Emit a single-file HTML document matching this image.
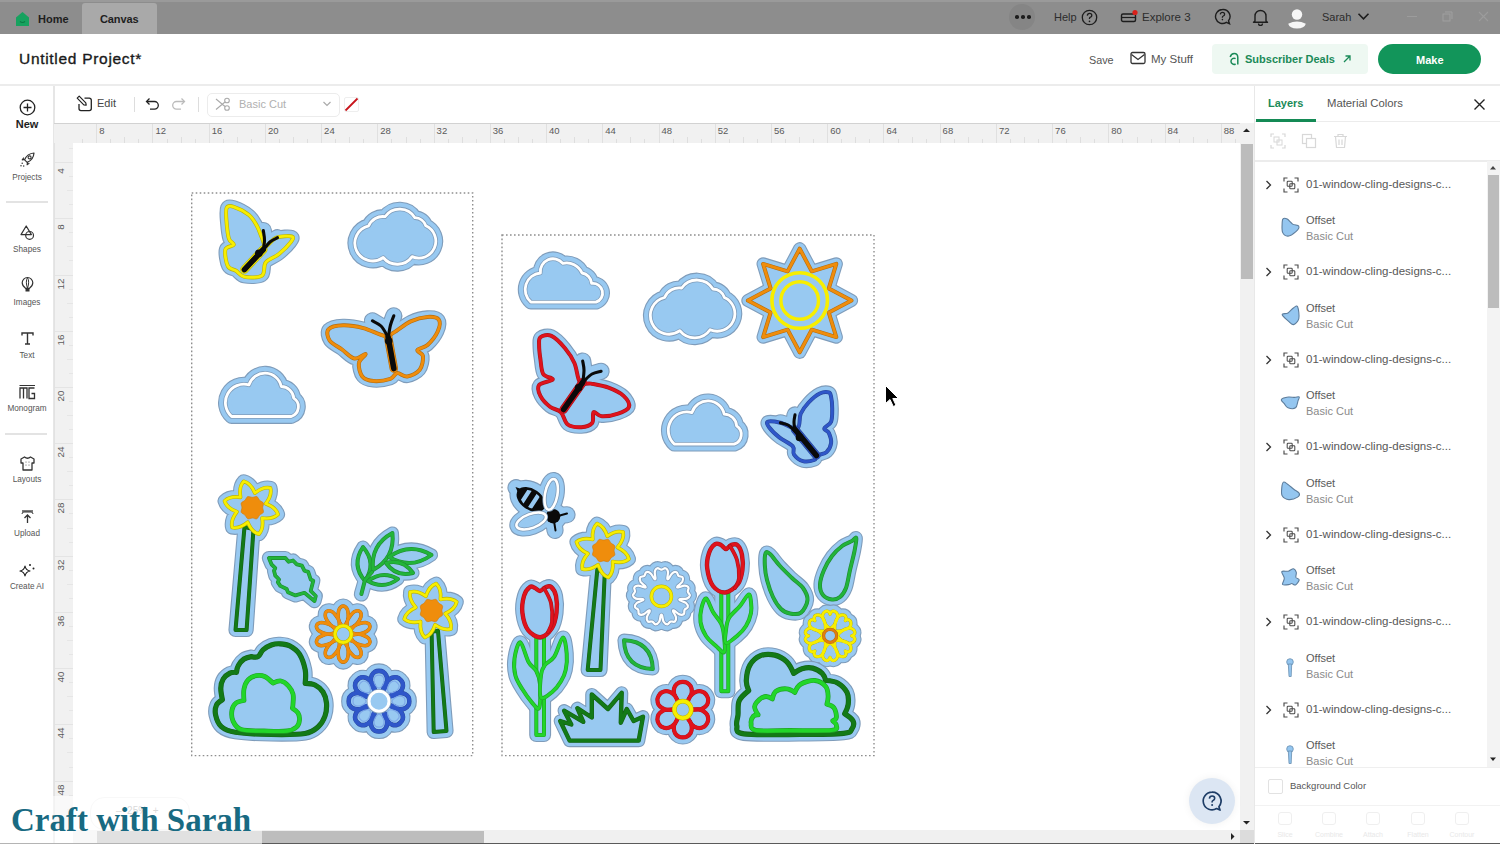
<!DOCTYPE html><html><head><meta charset="utf-8"><style>
*{margin:0;padding:0;box-sizing:border-box}
html,body{width:1500px;height:844px;overflow:hidden;background:#fff;font-family:"Liberation Sans",sans-serif;color:#222}
.a{position:absolute}
.t{position:absolute;white-space:nowrap;line-height:1}
</style></head><body><div class="a" style="left:0;top:0;width:1500px;height:34px;background:#8d8d8d"></div>
<div class="a" style="left:0;top:0;width:1500px;height:2px;background:#9a9a9a"></div>
<div class="a" style="left:82px;top:3px;width:75px;height:31px;background:#a9a9a9;border-radius:3px 3px 0 0"></div>
<svg class="a" style="left:15px;top:11px" width="15" height="16" viewBox="0 0 15 16"><path d="M1 6.5 L7.5 1 L14 6.5 V15 H1 Z" fill="#17a25f"/><path d="M5 10.5 q2.5 2 5 0" stroke="#0b7a44" stroke-width="1.2" fill="none"/></svg>
<div class="t" style="left:38px;top:14px;font-size:11px;font-weight:bold;color:#1e1e1e">Home</div>
<div class="t" style="left:100px;top:14px;font-size:11px;font-weight:bold;color:#1e1e1e;letter-spacing:-0.1px">Canvas</div>
<div class="a" style="left:1009px;top:4px;width:26px;height:26px;border-radius:50%;background:#858585"></div>
<div class="a" style="left:1015px;top:15px;width:3.5px;height:3.5px;border-radius:50%;background:#1d1d1d"></div>
<div class="a" style="left:1021px;top:15px;width:3.5px;height:3.5px;border-radius:50%;background:#1d1d1d"></div>
<div class="a" style="left:1027px;top:15px;width:3.5px;height:3.5px;border-radius:50%;background:#1d1d1d"></div>
<div class="t" style="left:1054px;top:12px;font-size:11px;color:#2c2c2c">Help</div>
<svg class="a" style="left:1081px;top:9px" width="17" height="17" viewBox="0 0 17 17"><circle cx="8.5" cy="8.5" r="7.2" stroke="#1d1d1d" stroke-width="1.3" fill="none"/><path d="M6.3 6.6 q0.2-2.2 2.3-2.2 q2.2 0 2.2 2 q0 1.3-1.4 1.8 q-0.9 0.4-0.9 1.4 v0.5" stroke="#1d1d1d" stroke-width="1.3" fill="none"/><circle cx="8.5" cy="12.3" r="0.85" fill="#1d1d1d"/></svg>
<svg class="a" style="left:1120px;top:9px" width="20" height="16" viewBox="0 0 20 16"><rect x="1.5" y="5" width="14" height="7.5" rx="1.5" stroke="#1d1d1d" stroke-width="1.4" fill="none"/><path d="M1.5 8.5 H15.5" stroke="#1d1d1d" stroke-width="1.2"/><circle cx="15" cy="3.5" r="2.6" fill="#d9201a"/></svg>
<div class="t" style="left:1142px;top:12px;font-size:11.5px;color:#2c2c2c">Explore 3</div>
<svg class="a" style="left:1213px;top:8px" width="19" height="18" viewBox="0 0 19 18"><path d="M9.5 1.5 a7 7 0 1 0 3.8 12.9 l3.2 1.4 l-1-3 a7 7 0 0 0 -6-11.3z" stroke="#1d1d1d" stroke-width="1.4" fill="none"/><path d="M7.3 6.4 q0.2-2 2.2-2 q2.1 0 2.1 1.9 q0 1.2-1.3 1.7 q-0.9 0.4-0.9 1.3 v0.4" stroke="#1d1d1d" stroke-width="1.3" fill="none"/><circle cx="9.4" cy="11.6" r="0.8" fill="#1d1d1d"/></svg>
<svg class="a" style="left:1252px;top:8px" width="17" height="18" viewBox="0 0 17 18"><path d="M3 13 V8 a5.5 5.5 0 0 1 11 0 V13 l1.5 1.2 H1.5 Z" stroke="#1d1d1d" stroke-width="1.4" fill="none" stroke-linejoin="round"/><path d="M6.5 15.5 a2 2 0 0 0 4 0" stroke="#1d1d1d" stroke-width="1.3" fill="none"/></svg>
<svg class="a" style="left:1286px;top:7px" width="22" height="24" viewBox="0 0 22 24"><circle cx="11" cy="7.5" r="5.2" fill="#f6f6f6"/><path d="M2.2 16.8 Q11 12.2 19.8 16.8 Q18.5 21.6 11 21.6 Q3.5 21.6 2.2 16.8Z" fill="#f6f6f6"/></svg>
<div class="t" style="left:1322px;top:12px;font-size:11px;color:#2c2c2c">Sarah</div>
<svg class="a" style="left:1357px;top:12px" width="13" height="9" viewBox="0 0 13 9"><path d="M1.5 1.8 L6.5 6.8 L11.5 1.8" stroke="#1d1d1d" stroke-width="1.6" fill="none"/></svg>
<div class="a" style="left:1407px;top:16px;width:10px;height:1.2px;background:#9c9c9c"></div>
<svg class="a" style="left:1442px;top:11px" width="11" height="11" viewBox="0 0 11 11"><rect x="1" y="3" width="7" height="7" stroke="#a0a0a0" fill="none"/><path d="M3 1 H10 V8" stroke="#a0a0a0" fill="none"/></svg>
<svg class="a" style="left:1478px;top:11px" width="11" height="11" viewBox="0 0 11 11"><path d="M1 1 L10 10 M10 1 L1 10" stroke="#9c9c9c" stroke-width="1.1"/></svg>
<div class="t" style="left:19px;top:51px;font-size:15.5px;color:#1a1a1a;letter-spacing:0.7px;-webkit-text-stroke:0.35px #1a1a1a">Untitled Project*</div>
<div class="a" style="left:0;top:84px;width:1500px;height:2px;background:#ececec"></div>
<div class="t" style="left:1089px;top:54.5px;font-size:10.8px;color:#555">Save</div>
<svg class="a" style="left:1130px;top:51px" width="16" height="14" viewBox="0 0 16 14"><rect x="1" y="1.5" width="14" height="11" rx="1.5" stroke="#333" stroke-width="1.3" fill="none"/><path d="M1.5 3.5 L8 8.5 L14.5 3.5" stroke="#333" stroke-width="1.3" fill="none"/></svg>
<div class="t" style="left:1151px;top:54px;font-size:11.5px;color:#555">My Stuff</div>
<div class="a" style="left:1212px;top:44px;width:156px;height:30px;background:#eef8f2;border-radius:4px"></div>
<svg class="a" style="left:1227px;top:52px" width="13" height="14" viewBox="0 0 13 14"><path d="M3.2 5 Q4.2 1.6 7.2 1.6 Q10.8 1.6 10.8 5.6 V12.6" stroke="#1a8a58" stroke-width="1.5" fill="none"/><path d="M8.6 6.6 A3.1 3.1 0 1 0 8.6 12" stroke="#1a8a58" stroke-width="1.5" fill="none"/></svg>
<div class="t" style="left:1245px;top:54px;font-size:11px;font-weight:bold;color:#1a8a58">Subscriber Deals</div>
<svg class="a" style="left:1342px;top:54px" width="10" height="10" viewBox="0 0 10 10"><path d="M2 8 L8 2 M3.5 2 H8 V6.5" stroke="#1a8a58" stroke-width="1.3" fill="none"/></svg>
<div class="a" style="left:1378px;top:44px;width:103px;height:30px;background:#12955a;border-radius:15px"></div>
<div class="t" style="left:1416px;top:54.5px;font-size:11px;font-weight:bold;color:#fff">Make</div>
<div class="a" style="left:53px;top:86px;width:1.5px;height:758px;background:#e6e6e6"></div>
<div class="a" style="left:6px;top:201px;width:42px;height:1.5px;background:#e3e3e3"></div>
<div class="a" style="left:5px;top:433px;width:42px;height:1.5px;background:#e3e3e3"></div>
<svg class="a" style="left:19px;top:99px" width="17" height="17" viewBox="0 0 17 17"><circle cx="8.5" cy="8.5" r="7.3" stroke="#222" stroke-width="1.3" fill="none"/><path d="M8.5 4.5 V12.5 M4.5 8.5 H12.5" stroke="#222" stroke-width="1.3"/></svg>
<div class="t" style="left:0;width:54px;text-align:center;top:119px;font-size:11px;color:#1e1e1e;font-weight:bold;">New</div>
<svg class="a" style="left:19px;top:151px" width="17" height="17" viewBox="0 0 17 17"><path d="M15 2 C11 2.3 7.3 4.8 5.6 8.8 L8.2 11.4 C12.2 9.7 14.7 6 15 2Z" stroke="#333" stroke-width="1.2" fill="none" stroke-linejoin="round"/><path d="M5.8 8.5 L3.2 8.9 L4.9 6.6 M8.5 11.2 L8.1 13.8 L10.4 12.1" stroke="#333" stroke-width="1.1" fill="none" stroke-linejoin="round"/><circle cx="10.6" cy="6.4" r="1.5" stroke="#333" stroke-width="1.1" fill="none"/><circle cx="3.2" cy="12.3" r="0.75" fill="#333"/><circle cx="2" cy="14.8" r="0.75" fill="#333"/><circle cx="4.7" cy="14.9" r="0.75" fill="#333"/></svg>
<div class="t" style="left:0;width:54px;text-align:center;top:173.8px;font-size:8.2px;color:#555;">Projects</div>
<svg class="a" style="left:19px;top:224px" width="17" height="17" viewBox="0 0 17 17"><path d="M7.2 2 L12.4 10.6 H2 Z" stroke="#333" stroke-width="1.2" fill="none" stroke-linejoin="round"/><circle cx="10.6" cy="11.4" r="3.9" stroke="#333" stroke-width="1.2" fill="none"/></svg>
<div class="t" style="left:0;width:54px;text-align:center;top:245.8px;font-size:8.2px;color:#555;">Shapes</div>
<svg class="a" style="left:20px;top:276px" width="15" height="17" viewBox="0 0 15 17"><path d="M7.5 1.5 a5.3 5.3 0 0 1 5.3 5.3 q0 3-3.3 5.5 h-4 q-3.3-2.5-3.3-5.5 a5.3 5.3 0 0 1 5.3-5.3z" stroke="#333" stroke-width="1.2" fill="none"/><path d="M7.5 1.5 q-2.3 4 0 10.8 q2.3-6.8 0-10.8" stroke="#333" stroke-width="1" fill="none"/><rect x="5.5" y="13" width="4" height="2.5" fill="#333"/></svg>
<div class="t" style="left:0;width:54px;text-align:center;top:298.8px;font-size:8.2px;color:#555;">Images</div>
<svg class="a" style="left:20px;top:331px" width="15" height="15" viewBox="0 0 15 15"><path d="M2 4.5 V2 H13 V4.5 M7.5 2 V13 M5 13 H10" stroke="#333" stroke-width="1.4" fill="none"/></svg>
<div class="t" style="left:0;width:54px;text-align:center;top:351.8px;font-size:8.2px;color:#555;">Text</div>
<svg class="a" style="left:18px;top:384px" width="19" height="16" viewBox="0 0 19 16"><path d="M1.5 1.5 H17" stroke="#333" stroke-width="1"/><path d="M2 14.5 V4 H9 V14.5 M5.5 4 V14.5" stroke="#333" stroke-width="1.3" fill="none"/><path d="M16.5 4 H11 V14.5 H16.5 V9.5 H13.5" stroke="#333" stroke-width="1.3" fill="none"/></svg>
<div class="t" style="left:0;width:54px;text-align:center;top:404.8px;font-size:8.2px;color:#555;">Monogram</div>
<svg class="a" style="left:19px;top:455px" width="17" height="17" viewBox="0 0 17 17"><path d="M5.5 2 L2 4 V8 H4 V15 H13 V8 H15 V4 L11.5 2 q-3 2.5-6 0z" stroke="#333" stroke-width="1.3" fill="none" stroke-linejoin="round"/><circle cx="7" cy="7" r="0.5" fill="#333"/><circle cx="10" cy="7" r="0.5" fill="#333"/><circle cx="7" cy="10" r="0.5" fill="#333"/><circle cx="10" cy="10" r="0.5" fill="#333"/></svg>
<div class="t" style="left:0;width:54px;text-align:center;top:475.8px;font-size:8.2px;color:#555;">Layouts</div>
<svg class="a" style="left:20px;top:509px" width="15" height="15" viewBox="0 0 15 15"><path d="M2 2 H13" stroke="#333" stroke-width="1.3"/><path d="M2 5 q0-2 2-2 H11 q2 0 2 2" stroke="#333" stroke-width="1" fill="none"/><path d="M7.5 14 V6 M4.5 9 L7.5 6 L10.5 9" stroke="#333" stroke-width="1.3" fill="none"/></svg>
<div class="t" style="left:0;width:54px;text-align:center;top:529.8px;font-size:8.2px;color:#555;">Upload</div>
<svg class="a" style="left:18px;top:562px" width="18" height="17" viewBox="0 0 18 17"><path d="M7 4 q0.8 4.2 5 5 q-4.2 0.8-5 5 q-0.8-4.2-5-5 q4.2-0.8 5-5z" stroke="#222" stroke-width="1.2" fill="none" stroke-linejoin="round"/><circle cx="12" cy="3" r="1" fill="#222"/><circle cx="15.5" cy="6.5" r="1" fill="#222"/></svg>
<div class="t" style="left:0;width:54px;text-align:center;top:582.8px;font-size:8.2px;color:#555;">Create AI</div>
<svg class="a" style="left:76px;top:95px" width="17" height="17" viewBox="0 0 17 17"><path d="M8.5 3.2 H13.3 a2 2 0 0 1 2 2 V13.6 a2 2 0 0 1 -2 2 H5 a2 2 0 0 1 -2-2 V9" stroke="#222" stroke-width="1.3" fill="none"/><path d="M1.2 3.2 L3.2 1.2 L9.8 7.8 L10.2 10.2 L7.8 9.8 Z" stroke="#222" stroke-width="1.2" fill="none" stroke-linejoin="round"/></svg>
<div class="t" style="left:97px;top:98px;font-size:11px;color:#444">Edit</div>
<div class="a" style="left:134px;top:97px;width:1px;height:15px;background:#ddd"></div>
<svg class="a" style="left:145px;top:97px" width="16" height="14" viewBox="0 0 16 14"><path d="M4.5 1.5 L1.5 4.5 L4.5 7.5" stroke="#222" stroke-width="1.3" fill="none"/><path d="M2 4.5 H9.5 a3.8 3.8 0 0 1 0 7.6 H5" stroke="#222" stroke-width="1.3" fill="none"/></svg>
<svg class="a" style="left:170px;top:97px" width="16" height="14" viewBox="0 0 16 14"><path d="M11.5 1.5 L14.5 4.5 L11.5 7.5" stroke="#bbb" stroke-width="1.3" fill="none"/><path d="M14 4.5 H6.5 a3.8 3.8 0 0 0 0 7.6 H11" stroke="#bbb" stroke-width="1.3" fill="none"/></svg>
<div class="a" style="left:198px;top:97px;width:1px;height:15px;background:#ddd"></div>
<div class="a" style="left:207px;top:93px;width:133px;height:24px;border:1px solid #ececec;border-radius:5px"></div>
<svg class="a" style="left:215px;top:97px" width="17" height="15" viewBox="0 0 17 15"><circle cx="12" cy="3.5" r="2.3" stroke="#aaa" stroke-width="1.1" fill="none"/><circle cx="12" cy="11" r="2.3" stroke="#aaa" stroke-width="1.1" fill="none"/><path d="M1 2 L10 9.5 M1 12.5 L10 5" stroke="#aaa" stroke-width="1.1"/></svg>
<div class="t" style="left:239px;top:99px;font-size:11px;color:#b0b0b0">Basic Cut</div>
<svg class="a" style="left:322px;top:100px" width="10" height="8" viewBox="0 0 10 8"><path d="M1.5 2 L5 5.5 L8.5 2" stroke="#aaa" stroke-width="1.2" fill="none"/></svg>
<div class="a" style="left:344px;top:97px;width:15px;height:15px;border:1px solid #eee;border-radius:2px"></div>
<svg class="a" style="left:344px;top:97px" width="15" height="15" viewBox="0 0 15 15"><path d="M1.5 13.5 L13.5 1.5" stroke="#c8141c" stroke-width="1.8"/></svg>
<div class="a" style="left:54px;top:123px;width:1186px;height:20px;background:#f1f1f1;border-top:1px solid #d2d2d2"></div>
<div class="a" style="left:54px;top:143px;width:19px;height:687px;background:#f1f1f1;border-left:1px solid #e2e2e2"></div>
<div class="a" style="left:82.1px;top:139px;width:1px;height:4px;background:#dedede"></div><div class="a" style="left:96.2px;top:124px;width:1px;height:19px;background:#e0e0e0"></div><div class="t" style="left:99.2px;top:126px;font-size:9.5px;color:#5a5a5a">8</div><div class="a" style="left:110.3px;top:139px;width:1px;height:4px;background:#dedede"></div><div class="a" style="left:124.3px;top:137px;width:1px;height:6px;background:#dedede"></div><div class="a" style="left:138.4px;top:139px;width:1px;height:4px;background:#dedede"></div><div class="a" style="left:152.4px;top:124px;width:1px;height:19px;background:#e0e0e0"></div><div class="t" style="left:155.4px;top:126px;font-size:9.5px;color:#5a5a5a">12</div><div class="a" style="left:166.5px;top:139px;width:1px;height:4px;background:#dedede"></div><div class="a" style="left:180.5px;top:137px;width:1px;height:6px;background:#dedede"></div><div class="a" style="left:194.6px;top:139px;width:1px;height:4px;background:#dedede"></div><div class="a" style="left:208.7px;top:124px;width:1px;height:19px;background:#e0e0e0"></div><div class="t" style="left:211.7px;top:126px;font-size:9.5px;color:#5a5a5a">16</div><div class="a" style="left:222.7px;top:139px;width:1px;height:4px;background:#dedede"></div><div class="a" style="left:236.8px;top:137px;width:1px;height:6px;background:#dedede"></div><div class="a" style="left:250.8px;top:139px;width:1px;height:4px;background:#dedede"></div><div class="a" style="left:264.9px;top:124px;width:1px;height:19px;background:#e0e0e0"></div><div class="t" style="left:267.9px;top:126px;font-size:9.5px;color:#5a5a5a">20</div><div class="a" style="left:278.9px;top:139px;width:1px;height:4px;background:#dedede"></div><div class="a" style="left:293.0px;top:137px;width:1px;height:6px;background:#dedede"></div><div class="a" style="left:307.1px;top:139px;width:1px;height:4px;background:#dedede"></div><div class="a" style="left:321.1px;top:124px;width:1px;height:19px;background:#e0e0e0"></div><div class="t" style="left:324.1px;top:126px;font-size:9.5px;color:#5a5a5a">24</div><div class="a" style="left:335.2px;top:139px;width:1px;height:4px;background:#dedede"></div><div class="a" style="left:349.2px;top:137px;width:1px;height:6px;background:#dedede"></div><div class="a" style="left:363.3px;top:139px;width:1px;height:4px;background:#dedede"></div><div class="a" style="left:377.3px;top:124px;width:1px;height:19px;background:#e0e0e0"></div><div class="t" style="left:380.3px;top:126px;font-size:9.5px;color:#5a5a5a">28</div><div class="a" style="left:391.4px;top:139px;width:1px;height:4px;background:#dedede"></div><div class="a" style="left:405.5px;top:137px;width:1px;height:6px;background:#dedede"></div><div class="a" style="left:419.5px;top:139px;width:1px;height:4px;background:#dedede"></div><div class="a" style="left:433.6px;top:124px;width:1px;height:19px;background:#e0e0e0"></div><div class="t" style="left:436.6px;top:126px;font-size:9.5px;color:#5a5a5a">32</div><div class="a" style="left:447.6px;top:139px;width:1px;height:4px;background:#dedede"></div><div class="a" style="left:461.7px;top:137px;width:1px;height:6px;background:#dedede"></div><div class="a" style="left:475.8px;top:139px;width:1px;height:4px;background:#dedede"></div><div class="a" style="left:489.8px;top:124px;width:1px;height:19px;background:#e0e0e0"></div><div class="t" style="left:492.8px;top:126px;font-size:9.5px;color:#5a5a5a">36</div><div class="a" style="left:503.9px;top:139px;width:1px;height:4px;background:#dedede"></div><div class="a" style="left:517.9px;top:137px;width:1px;height:6px;background:#dedede"></div><div class="a" style="left:532.0px;top:139px;width:1px;height:4px;background:#dedede"></div><div class="a" style="left:546.0px;top:124px;width:1px;height:19px;background:#e0e0e0"></div><div class="t" style="left:549.0px;top:126px;font-size:9.5px;color:#5a5a5a">40</div><div class="a" style="left:560.1px;top:139px;width:1px;height:4px;background:#dedede"></div><div class="a" style="left:574.2px;top:137px;width:1px;height:6px;background:#dedede"></div><div class="a" style="left:588.2px;top:139px;width:1px;height:4px;background:#dedede"></div><div class="a" style="left:602.3px;top:124px;width:1px;height:19px;background:#e0e0e0"></div><div class="t" style="left:605.3px;top:126px;font-size:9.5px;color:#5a5a5a">44</div><div class="a" style="left:616.3px;top:139px;width:1px;height:4px;background:#dedede"></div><div class="a" style="left:630.4px;top:137px;width:1px;height:6px;background:#dedede"></div><div class="a" style="left:644.4px;top:139px;width:1px;height:4px;background:#dedede"></div><div class="a" style="left:658.5px;top:124px;width:1px;height:19px;background:#e0e0e0"></div><div class="t" style="left:661.5px;top:126px;font-size:9.5px;color:#5a5a5a">48</div><div class="a" style="left:672.6px;top:139px;width:1px;height:4px;background:#dedede"></div><div class="a" style="left:686.6px;top:137px;width:1px;height:6px;background:#dedede"></div><div class="a" style="left:700.7px;top:139px;width:1px;height:4px;background:#dedede"></div><div class="a" style="left:714.7px;top:124px;width:1px;height:19px;background:#e0e0e0"></div><div class="t" style="left:717.7px;top:126px;font-size:9.5px;color:#5a5a5a">52</div><div class="a" style="left:728.8px;top:139px;width:1px;height:4px;background:#dedede"></div><div class="a" style="left:742.8px;top:137px;width:1px;height:6px;background:#dedede"></div><div class="a" style="left:756.9px;top:139px;width:1px;height:4px;background:#dedede"></div><div class="a" style="left:771.0px;top:124px;width:1px;height:19px;background:#e0e0e0"></div><div class="t" style="left:774.0px;top:126px;font-size:9.5px;color:#5a5a5a">56</div><div class="a" style="left:785.0px;top:139px;width:1px;height:4px;background:#dedede"></div><div class="a" style="left:799.1px;top:137px;width:1px;height:6px;background:#dedede"></div><div class="a" style="left:813.1px;top:139px;width:1px;height:4px;background:#dedede"></div><div class="a" style="left:827.2px;top:124px;width:1px;height:19px;background:#e0e0e0"></div><div class="t" style="left:830.2px;top:126px;font-size:9.5px;color:#5a5a5a">60</div><div class="a" style="left:841.2px;top:139px;width:1px;height:4px;background:#dedede"></div><div class="a" style="left:855.3px;top:137px;width:1px;height:6px;background:#dedede"></div><div class="a" style="left:869.4px;top:139px;width:1px;height:4px;background:#dedede"></div><div class="a" style="left:883.4px;top:124px;width:1px;height:19px;background:#e0e0e0"></div><div class="t" style="left:886.4px;top:126px;font-size:9.5px;color:#5a5a5a">64</div><div class="a" style="left:897.5px;top:139px;width:1px;height:4px;background:#dedede"></div><div class="a" style="left:911.5px;top:137px;width:1px;height:6px;background:#dedede"></div><div class="a" style="left:925.6px;top:139px;width:1px;height:4px;background:#dedede"></div><div class="a" style="left:939.6px;top:124px;width:1px;height:19px;background:#e0e0e0"></div><div class="t" style="left:942.6px;top:126px;font-size:9.5px;color:#5a5a5a">68</div><div class="a" style="left:953.7px;top:139px;width:1px;height:4px;background:#dedede"></div><div class="a" style="left:967.8px;top:137px;width:1px;height:6px;background:#dedede"></div><div class="a" style="left:981.8px;top:139px;width:1px;height:4px;background:#dedede"></div><div class="a" style="left:995.9px;top:124px;width:1px;height:19px;background:#e0e0e0"></div><div class="t" style="left:998.9px;top:126px;font-size:9.5px;color:#5a5a5a">72</div><div class="a" style="left:1009.9px;top:139px;width:1px;height:4px;background:#dedede"></div><div class="a" style="left:1024.0px;top:137px;width:1px;height:6px;background:#dedede"></div><div class="a" style="left:1038.1px;top:139px;width:1px;height:4px;background:#dedede"></div><div class="a" style="left:1052.1px;top:124px;width:1px;height:19px;background:#e0e0e0"></div><div class="t" style="left:1055.1px;top:126px;font-size:9.5px;color:#5a5a5a">76</div><div class="a" style="left:1066.2px;top:139px;width:1px;height:4px;background:#dedede"></div><div class="a" style="left:1080.2px;top:137px;width:1px;height:6px;background:#dedede"></div><div class="a" style="left:1094.3px;top:139px;width:1px;height:4px;background:#dedede"></div><div class="a" style="left:1108.3px;top:124px;width:1px;height:19px;background:#e0e0e0"></div><div class="t" style="left:1111.3px;top:126px;font-size:9.5px;color:#5a5a5a">80</div><div class="a" style="left:1122.4px;top:139px;width:1px;height:4px;background:#dedede"></div><div class="a" style="left:1136.5px;top:137px;width:1px;height:6px;background:#dedede"></div><div class="a" style="left:1150.5px;top:139px;width:1px;height:4px;background:#dedede"></div><div class="a" style="left:1164.6px;top:124px;width:1px;height:19px;background:#e0e0e0"></div><div class="t" style="left:1167.6px;top:126px;font-size:9.5px;color:#5a5a5a">84</div><div class="a" style="left:1178.6px;top:139px;width:1px;height:4px;background:#dedede"></div><div class="a" style="left:1192.7px;top:137px;width:1px;height:6px;background:#dedede"></div><div class="a" style="left:1206.7px;top:139px;width:1px;height:4px;background:#dedede"></div><div class="a" style="left:1220.8px;top:124px;width:1px;height:19px;background:#e0e0e0"></div><div class="t" style="left:1223.8px;top:126px;font-size:9.5px;color:#5a5a5a">88</div><div class="a" style="left:1234.9px;top:139px;width:1px;height:4px;background:#dedede"></div>
<div class="a" style="left:69px;top:147.9px;width:4px;height:1px;background:#e6e6e6"></div><div class="a" style="left:55px;top:162.0px;width:18px;height:1px;background:#e4e4e4"></div><div class="t" style="left:46.0px;top:165.0px;width:30px;height:12px;line-height:12px;text-align:center;font-size:9.8px;color:#5a5a5a;transform:rotate(-90deg)">4</div><div class="a" style="left:69px;top:176.1px;width:4px;height:1px;background:#e6e6e6"></div><div class="a" style="left:67px;top:190.1px;width:6px;height:1px;background:#e6e6e6"></div><div class="a" style="left:69px;top:204.2px;width:4px;height:1px;background:#e6e6e6"></div><div class="a" style="left:55px;top:218.2px;width:18px;height:1px;background:#e4e4e4"></div><div class="t" style="left:46.0px;top:221.2px;width:30px;height:12px;line-height:12px;text-align:center;font-size:9.8px;color:#5a5a5a;transform:rotate(-90deg)">8</div><div class="a" style="left:69px;top:232.3px;width:4px;height:1px;background:#e6e6e6"></div><div class="a" style="left:67px;top:246.3px;width:6px;height:1px;background:#e6e6e6"></div><div class="a" style="left:69px;top:260.4px;width:4px;height:1px;background:#e6e6e6"></div><div class="a" style="left:55px;top:274.5px;width:18px;height:1px;background:#e4e4e4"></div><div class="t" style="left:46.0px;top:277.5px;width:30px;height:12px;line-height:12px;text-align:center;font-size:9.8px;color:#5a5a5a;transform:rotate(-90deg)">12</div><div class="a" style="left:69px;top:288.5px;width:4px;height:1px;background:#e6e6e6"></div><div class="a" style="left:67px;top:302.6px;width:6px;height:1px;background:#e6e6e6"></div><div class="a" style="left:69px;top:316.6px;width:4px;height:1px;background:#e6e6e6"></div><div class="a" style="left:55px;top:330.7px;width:18px;height:1px;background:#e4e4e4"></div><div class="t" style="left:46.0px;top:333.7px;width:30px;height:12px;line-height:12px;text-align:center;font-size:9.8px;color:#5a5a5a;transform:rotate(-90deg)">16</div><div class="a" style="left:69px;top:344.7px;width:4px;height:1px;background:#e6e6e6"></div><div class="a" style="left:67px;top:358.8px;width:6px;height:1px;background:#e6e6e6"></div><div class="a" style="left:69px;top:372.9px;width:4px;height:1px;background:#e6e6e6"></div><div class="a" style="left:55px;top:386.9px;width:18px;height:1px;background:#e4e4e4"></div><div class="t" style="left:46.0px;top:389.9px;width:30px;height:12px;line-height:12px;text-align:center;font-size:9.8px;color:#5a5a5a;transform:rotate(-90deg)">20</div><div class="a" style="left:69px;top:401.0px;width:4px;height:1px;background:#e6e6e6"></div><div class="a" style="left:67px;top:415.0px;width:6px;height:1px;background:#e6e6e6"></div><div class="a" style="left:69px;top:429.1px;width:4px;height:1px;background:#e6e6e6"></div><div class="a" style="left:55px;top:443.1px;width:18px;height:1px;background:#e4e4e4"></div><div class="t" style="left:46.0px;top:446.1px;width:30px;height:12px;line-height:12px;text-align:center;font-size:9.8px;color:#5a5a5a;transform:rotate(-90deg)">24</div><div class="a" style="left:69px;top:457.2px;width:4px;height:1px;background:#e6e6e6"></div><div class="a" style="left:67px;top:471.3px;width:6px;height:1px;background:#e6e6e6"></div><div class="a" style="left:69px;top:485.3px;width:4px;height:1px;background:#e6e6e6"></div><div class="a" style="left:55px;top:499.4px;width:18px;height:1px;background:#e4e4e4"></div><div class="t" style="left:46.0px;top:502.4px;width:30px;height:12px;line-height:12px;text-align:center;font-size:9.8px;color:#5a5a5a;transform:rotate(-90deg)">28</div><div class="a" style="left:69px;top:513.4px;width:4px;height:1px;background:#e6e6e6"></div><div class="a" style="left:67px;top:527.5px;width:6px;height:1px;background:#e6e6e6"></div><div class="a" style="left:69px;top:541.6px;width:4px;height:1px;background:#e6e6e6"></div><div class="a" style="left:55px;top:555.6px;width:18px;height:1px;background:#e4e4e4"></div><div class="t" style="left:46.0px;top:558.6px;width:30px;height:12px;line-height:12px;text-align:center;font-size:9.8px;color:#5a5a5a;transform:rotate(-90deg)">32</div><div class="a" style="left:69px;top:569.7px;width:4px;height:1px;background:#e6e6e6"></div><div class="a" style="left:67px;top:583.7px;width:6px;height:1px;background:#e6e6e6"></div><div class="a" style="left:69px;top:597.8px;width:4px;height:1px;background:#e6e6e6"></div><div class="a" style="left:55px;top:611.8px;width:18px;height:1px;background:#e4e4e4"></div><div class="t" style="left:46.0px;top:614.8px;width:30px;height:12px;line-height:12px;text-align:center;font-size:9.8px;color:#5a5a5a;transform:rotate(-90deg)">36</div><div class="a" style="left:69px;top:625.9px;width:4px;height:1px;background:#e6e6e6"></div><div class="a" style="left:67px;top:640.0px;width:6px;height:1px;background:#e6e6e6"></div><div class="a" style="left:69px;top:654.0px;width:4px;height:1px;background:#e6e6e6"></div><div class="a" style="left:55px;top:668.1px;width:18px;height:1px;background:#e4e4e4"></div><div class="t" style="left:46.0px;top:671.1px;width:30px;height:12px;line-height:12px;text-align:center;font-size:9.8px;color:#5a5a5a;transform:rotate(-90deg)">40</div><div class="a" style="left:69px;top:682.1px;width:4px;height:1px;background:#e6e6e6"></div><div class="a" style="left:67px;top:696.2px;width:6px;height:1px;background:#e6e6e6"></div><div class="a" style="left:69px;top:710.2px;width:4px;height:1px;background:#e6e6e6"></div><div class="a" style="left:55px;top:724.3px;width:18px;height:1px;background:#e4e4e4"></div><div class="t" style="left:46.0px;top:727.3px;width:30px;height:12px;line-height:12px;text-align:center;font-size:9.8px;color:#5a5a5a;transform:rotate(-90deg)">44</div><div class="a" style="left:69px;top:738.4px;width:4px;height:1px;background:#e6e6e6"></div><div class="a" style="left:67px;top:752.4px;width:6px;height:1px;background:#e6e6e6"></div><div class="a" style="left:69px;top:766.5px;width:4px;height:1px;background:#e6e6e6"></div><div class="a" style="left:55px;top:780.5px;width:18px;height:1px;background:#e4e4e4"></div><div class="t" style="left:46.0px;top:783.5px;width:30px;height:12px;line-height:12px;text-align:center;font-size:9.8px;color:#5a5a5a;transform:rotate(-90deg)">48</div><div class="a" style="left:69px;top:794.6px;width:4px;height:1px;background:#e6e6e6"></div><div class="a" style="left:67px;top:808.6px;width:6px;height:1px;background:#e6e6e6"></div><div class="a" style="left:69px;top:822.7px;width:4px;height:1px;background:#e6e6e6"></div>
<div class="a" style="left:1240px;top:123px;width:14px;height:707px;background:#f1f1f1"></div>
<div class="a" style="left:1241px;top:144px;width:12px;height:135px;background:#bcbcbc"></div>
<svg class="a" style="left:1242px;top:127px" width="9" height="6" viewBox="0 0 9 6"><path d="M1 5 L4.5 1.5 L8 5z" fill="#222"/></svg>
<svg class="a" style="left:1242px;top:820px" width="9" height="6" viewBox="0 0 9 6"><path d="M1 1 L4.5 4.5 L8 1z" fill="#222"/></svg>
<div class="a" style="left:73px;top:830px;width:1181px;height:13px;background:#f0f0f0"></div>
<div class="a" style="left:97px;top:831px;width:387px;height:12px;background:#bdbdbd"></div>
<div class="a" style="left:1240px;top:830px;width:14px;height:13px;background:#dcdcdc"></div>
<svg class="a" style="left:1230px;top:832px" width="6" height="9" viewBox="0 0 6 9"><path d="M1 1 L4.5 4.5 L1 8z" fill="#222"/></svg>
<div class="a" style="left:0;top:843px;width:1500px;height:1px;background:#5a5a5a"></div>
<div class="a" style="left:1254px;top:86px;width:1px;height:758px;background:#e8e8e8"></div>
<div class="t" style="left:1268px;top:98px;font-size:11px;font-weight:bold;color:#1a8a58">Layers</div>
<div class="t" style="left:1327px;top:98px;font-size:11.3px;color:#555">Material Colors</div>
<svg class="a" style="left:1473px;top:98px" width="13" height="13" viewBox="0 0 13 13"><path d="M1.5 1.5 L11.5 11.5 M11.5 1.5 L1.5 11.5" stroke="#222" stroke-width="1.4"/></svg>
<div class="a" style="left:1255px;top:121px;width:245px;height:1px;background:#ececec"></div>
<div class="a" style="left:1256px;top:119px;width:60px;height:2.5px;background:#148a55"></div>
<svg class="a" style="left:1270px;top:133px" width="16" height="16" viewBox="0 0 16 16"><path d="M1 4 V1 H4 M12 1 H15 V4 M15 12 V15 H12 M4 15 H1 V12" stroke="#d8d8d8" stroke-width="1.2" fill="none"/><rect x="4" y="4" width="5" height="5" stroke="#d8d8d8" fill="none"/><rect x="7" y="7" width="5" height="5" stroke="#d8d8d8" fill="none"/></svg>
<svg class="a" style="left:1301px;top:133px" width="16" height="16" viewBox="0 0 16 16"><rect x="1.5" y="1.5" width="9" height="9" stroke="#d8d8d8" stroke-width="1.2" fill="none"/><rect x="5.5" y="5.5" width="9" height="9" stroke="#d8d8d8" stroke-width="1.2" fill="#fff"/></svg>
<svg class="a" style="left:1333px;top:133px" width="15" height="16" viewBox="0 0 15 16"><path d="M1 3.5 H14 M5 3.5 V1.5 H10 V3.5 M2.5 3.5 L3.5 14.5 H11.5 L12.5 3.5 M6 6.5 V12 M9 6.5 V12" stroke="#d8d8d8" stroke-width="1.2" fill="none"/></svg>
<div class="a" style="left:1255px;top:160px;width:245px;height:1.5px;background:#ececec"></div>
<div class="a" style="left:1487px;top:161px;width:13px;height:606px;background:#f3f3f3"></div>
<div class="a" style="left:1488px;top:175px;width:11px;height:133px;background:#bcbcbc"></div>
<svg class="a" style="left:1489px;top:165px" width="8" height="5" viewBox="0 0 8 5"><path d="M1 4.5 L4 1 L7 4.5z" fill="#444"/></svg>
<svg class="a" style="left:1489px;top:757px" width="8" height="5" viewBox="0 0 8 5"><path d="M1 0.5 L4 4 L7 0.5z" fill="#222"/></svg>
<svg class="a" style="left:1265px;top:179.5px" width="7" height="10" viewBox="0 0 7 10"><path d="M1.5 1 L5.5 5 L1.5 9" stroke="#333" stroke-width="1.3" fill="none"/></svg>
<svg class="a" style="left:1283px;top:176.5px" width="16" height="16" viewBox="0 0 16 16"><path d="M1 4.5 V1 H4.5 M11.5 1 H15 V4.5 M15 11.5 V15 H11.5 M4.5 15 H1 V11.5" stroke="#4a4a4a" stroke-width="1.15" fill="none"/><rect x="4.2" y="4.2" width="5" height="5" rx="0.8" stroke="#4a4a4a" stroke-width="1.05" fill="none"/><rect x="6.8" y="6.8" width="5" height="5" rx="0.8" stroke="#4a4a4a" stroke-width="1.05" fill="none"/></svg>
<div class="t" style="left:1306px;top:178.5px;font-size:11.5px;color:#585858">01-window-cling-designs-c...</div>
<div class="t" style="left:1306px;top:215.0px;font-size:11px;color:#5a5a5a">Offset</div>
<div class="t" style="left:1306px;top:231.0px;font-size:11px;color:#8a8a8a">Basic Cut</div>
<svg class="a" style="left:1276px;top:210.0px" width="30" height="35" viewBox="0 0 30 35"><path d="M7.1 8.7 C7.9 8.1 9.6 8.2 11.2 9.1 C12.8 10.0 14.7 12.9 16.6 14.1 C18.5 15.3 22.2 14.9 22.8 16.2 C23.4 17.4 21.7 20.0 19.9 21.6 C18.1 23.2 14.2 26.0 12.0 26.1 C9.8 26.2 7.6 24.7 6.6 22.4 C5.6 20.1 6.1 14.7 6.2 12.4 C6.3 10.1 6.3 9.2 7.1 8.7Z" fill="#94c6f0" stroke="#5d7d9c" stroke-width="1.1" stroke-linejoin="round"/></svg>
<svg class="a" style="left:1265px;top:267.0px" width="7" height="10" viewBox="0 0 7 10"><path d="M1.5 1 L5.5 5 L1.5 9" stroke="#333" stroke-width="1.3" fill="none"/></svg>
<svg class="a" style="left:1283px;top:264.0px" width="16" height="16" viewBox="0 0 16 16"><path d="M1 4.5 V1 H4.5 M11.5 1 H15 V4.5 M15 11.5 V15 H11.5 M4.5 15 H1 V11.5" stroke="#4a4a4a" stroke-width="1.15" fill="none"/><rect x="4.2" y="4.2" width="5" height="5" rx="0.8" stroke="#4a4a4a" stroke-width="1.05" fill="none"/><rect x="6.8" y="6.8" width="5" height="5" rx="0.8" stroke="#4a4a4a" stroke-width="1.05" fill="none"/></svg>
<div class="t" style="left:1306px;top:266.0px;font-size:11.5px;color:#585858">01-window-cling-designs-c...</div>
<div class="t" style="left:1306px;top:302.5px;font-size:11px;color:#5a5a5a">Offset</div>
<div class="t" style="left:1306px;top:318.5px;font-size:11px;color:#8a8a8a">Basic Cut</div>
<svg class="a" style="left:1276px;top:297.5px" width="30" height="35" viewBox="0 0 30 35"><path d="M21.6 8.7 C22.5 10.5 23.5 17.7 22.8 20.7 C22.1 23.7 19.1 26.2 17.4 26.6 C15.7 27.0 14.3 24.9 12.4 23.2 C10.5 21.5 6.3 18.0 6.2 16.6 C6.1 15.2 10.1 16.0 12.0 14.9 C13.9 13.8 15.8 11.0 17.4 10.0 C19.0 9.0 20.7 6.9 21.6 8.7Z" fill="#94c6f0" stroke="#5d7d9c" stroke-width="1.1" stroke-linejoin="round"/></svg>
<svg class="a" style="left:1265px;top:354.5px" width="7" height="10" viewBox="0 0 7 10"><path d="M1.5 1 L5.5 5 L1.5 9" stroke="#333" stroke-width="1.3" fill="none"/></svg>
<svg class="a" style="left:1283px;top:351.5px" width="16" height="16" viewBox="0 0 16 16"><path d="M1 4.5 V1 H4.5 M11.5 1 H15 V4.5 M15 11.5 V15 H11.5 M4.5 15 H1 V11.5" stroke="#4a4a4a" stroke-width="1.15" fill="none"/><rect x="4.2" y="4.2" width="5" height="5" rx="0.8" stroke="#4a4a4a" stroke-width="1.05" fill="none"/><rect x="6.8" y="6.8" width="5" height="5" rx="0.8" stroke="#4a4a4a" stroke-width="1.05" fill="none"/></svg>
<div class="t" style="left:1306px;top:353.5px;font-size:11.5px;color:#585858">01-window-cling-designs-c...</div>
<div class="t" style="left:1306px;top:390.0px;font-size:11px;color:#5a5a5a">Offset</div>
<div class="t" style="left:1306px;top:406.0px;font-size:11px;color:#8a8a8a">Basic Cut</div>
<svg class="a" style="left:1276px;top:385.0px" width="30" height="35" viewBox="0 0 30 35"><path d="M5.4 14.5 C6.1 13.4 10.2 12.3 12.4 12.0 C14.6 11.7 16.9 12.4 18.7 12.4 C20.5 12.4 22.6 11.4 23.2 12.0 C23.8 12.6 22.6 14.0 22.0 15.8 C21.4 17.6 21.2 21.6 19.5 22.8 C17.8 24.0 13.9 23.5 12.0 22.8 C10.1 22.1 9.4 20.1 8.3 18.7 C7.2 17.3 4.7 15.6 5.4 14.5Z" fill="#94c6f0" stroke="#5d7d9c" stroke-width="1.1" stroke-linejoin="round"/></svg>
<svg class="a" style="left:1265px;top:442.0px" width="7" height="10" viewBox="0 0 7 10"><path d="M1.5 1 L5.5 5 L1.5 9" stroke="#333" stroke-width="1.3" fill="none"/></svg>
<svg class="a" style="left:1283px;top:439.0px" width="16" height="16" viewBox="0 0 16 16"><path d="M1 4.5 V1 H4.5 M11.5 1 H15 V4.5 M15 11.5 V15 H11.5 M4.5 15 H1 V11.5" stroke="#4a4a4a" stroke-width="1.15" fill="none"/><rect x="4.2" y="4.2" width="5" height="5" rx="0.8" stroke="#4a4a4a" stroke-width="1.05" fill="none"/><rect x="6.8" y="6.8" width="5" height="5" rx="0.8" stroke="#4a4a4a" stroke-width="1.05" fill="none"/></svg>
<div class="t" style="left:1306px;top:441.0px;font-size:11.5px;color:#585858">01-window-cling-designs-c...</div>
<div class="t" style="left:1306px;top:477.5px;font-size:11px;color:#5a5a5a">Offset</div>
<div class="t" style="left:1306px;top:493.5px;font-size:11px;color:#8a8a8a">Basic Cut</div>
<svg class="a" style="left:1276px;top:472.5px" width="30" height="35" viewBox="0 0 30 35"><path d="M7.5 9.1 C8.5 8.5 9.9 10.0 11.6 11.2 C13.3 12.4 15.9 14.7 17.8 16.2 C19.7 17.7 22.6 19.0 23.2 20.3 C23.8 21.6 23.3 23.1 21.6 24.1 C19.9 25.2 15.5 26.8 12.9 26.6 C10.3 26.4 7.4 24.8 6.2 22.8 C5.0 20.8 5.6 16.8 5.8 14.5 C6.0 12.2 6.5 9.7 7.5 9.1Z" fill="#94c6f0" stroke="#5d7d9c" stroke-width="1.1" stroke-linejoin="round"/></svg>
<svg class="a" style="left:1265px;top:529.5px" width="7" height="10" viewBox="0 0 7 10"><path d="M1.5 1 L5.5 5 L1.5 9" stroke="#333" stroke-width="1.3" fill="none"/></svg>
<svg class="a" style="left:1283px;top:526.5px" width="16" height="16" viewBox="0 0 16 16"><path d="M1 4.5 V1 H4.5 M11.5 1 H15 V4.5 M15 11.5 V15 H11.5 M4.5 15 H1 V11.5" stroke="#4a4a4a" stroke-width="1.15" fill="none"/><rect x="4.2" y="4.2" width="5" height="5" rx="0.8" stroke="#4a4a4a" stroke-width="1.05" fill="none"/><rect x="6.8" y="6.8" width="5" height="5" rx="0.8" stroke="#4a4a4a" stroke-width="1.05" fill="none"/></svg>
<div class="t" style="left:1306px;top:528.5px;font-size:11.5px;color:#585858">01-window-cling-designs-c...</div>
<div class="t" style="left:1306px;top:565.0px;font-size:11px;color:#5a5a5a">Offset</div>
<div class="t" style="left:1306px;top:581.0px;font-size:11px;color:#8a8a8a">Basic Cut</div>
<svg class="a" style="left:1276px;top:560.0px" width="30" height="35" viewBox="0 0 30 35"><path d="M5.8 11.6 C6.5 10.4 10.5 11.7 12.4 11.2 C14.3 10.7 16.1 8.5 17.4 8.7 C18.7 8.9 19.9 11.0 20.3 12.4 C20.7 13.8 19.4 16.1 19.9 17.4 C20.4 18.6 23.3 18.6 23.2 19.9 C23.1 21.1 20.7 24.3 19.5 24.9 C18.3 25.5 16.8 23.6 15.8 23.5 C14.8 23.4 14.8 24.3 13.3 24.5 C11.8 24.7 7.4 25.5 6.6 24.5 C5.8 23.5 8.4 20.4 8.3 18.3 C8.2 16.2 5.1 12.8 5.8 11.6Z" fill="#94c6f0" stroke="#5d7d9c" stroke-width="1.1" stroke-linejoin="round"/></svg>
<svg class="a" style="left:1265px;top:617.0px" width="7" height="10" viewBox="0 0 7 10"><path d="M1.5 1 L5.5 5 L1.5 9" stroke="#333" stroke-width="1.3" fill="none"/></svg>
<svg class="a" style="left:1283px;top:614.0px" width="16" height="16" viewBox="0 0 16 16"><path d="M1 4.5 V1 H4.5 M11.5 1 H15 V4.5 M15 11.5 V15 H11.5 M4.5 15 H1 V11.5" stroke="#4a4a4a" stroke-width="1.15" fill="none"/><rect x="4.2" y="4.2" width="5" height="5" rx="0.8" stroke="#4a4a4a" stroke-width="1.05" fill="none"/><rect x="6.8" y="6.8" width="5" height="5" rx="0.8" stroke="#4a4a4a" stroke-width="1.05" fill="none"/></svg>
<div class="t" style="left:1306px;top:616.0px;font-size:11.5px;color:#585858">01-window-cling-designs-c...</div>
<div class="t" style="left:1306px;top:652.5px;font-size:11px;color:#5a5a5a">Offset</div>
<div class="t" style="left:1306px;top:668.5px;font-size:11px;color:#8a8a8a">Basic Cut</div>
<svg class="a" style="left:1283px;top:656.5px" width="14" height="22" viewBox="0 0 14 22"><circle cx="7" cy="5" r="3.3" fill="#94c6f0" stroke="#6a8fb0" stroke-width="0.8"/><path d="M5.3 7 L6 19.5 H8.2 L8.7 7z" fill="#94c6f0" stroke="#6a8fb0" stroke-width="0.8"/></svg>
<svg class="a" style="left:1265px;top:704.5px" width="7" height="10" viewBox="0 0 7 10"><path d="M1.5 1 L5.5 5 L1.5 9" stroke="#333" stroke-width="1.3" fill="none"/></svg>
<svg class="a" style="left:1283px;top:701.5px" width="16" height="16" viewBox="0 0 16 16"><path d="M1 4.5 V1 H4.5 M11.5 1 H15 V4.5 M15 11.5 V15 H11.5 M4.5 15 H1 V11.5" stroke="#4a4a4a" stroke-width="1.15" fill="none"/><rect x="4.2" y="4.2" width="5" height="5" rx="0.8" stroke="#4a4a4a" stroke-width="1.05" fill="none"/><rect x="6.8" y="6.8" width="5" height="5" rx="0.8" stroke="#4a4a4a" stroke-width="1.05" fill="none"/></svg>
<div class="t" style="left:1306px;top:703.5px;font-size:11.5px;color:#585858">01-window-cling-designs-c...</div>
<div class="t" style="left:1306px;top:740.0px;font-size:11px;color:#5a5a5a">Offset</div>
<div class="t" style="left:1306px;top:756.0px;font-size:11px;color:#8a8a8a">Basic Cut</div>
<svg class="a" style="left:1283px;top:744.0px" width="14" height="22" viewBox="0 0 14 22"><circle cx="7" cy="5" r="3.3" fill="#94c6f0" stroke="#6a8fb0" stroke-width="0.8"/><path d="M5.3 7 L6 19.5 H8.2 L8.7 7z" fill="#94c6f0" stroke="#6a8fb0" stroke-width="0.8"/></svg>
<div class="a" style="left:1255px;top:767px;width:245px;height:1px;background:#efefef"></div>
<div class="a" style="left:1268px;top:779px;width:15px;height:15px;border:1px solid #e2e2e2;border-radius:2px"></div>
<div class="t" style="left:1290px;top:781px;font-size:9.5px;color:#555">Background Color</div>
<div class="a" style="left:1255px;top:805px;width:245px;height:1px;background:#f2f2f2"></div>
<div class="a" style="left:1278px;top:812px;width:14px;height:13px;border:1px solid #efefef;border-radius:3px"></div>
<div class="t" style="left:1260px;width:50px;text-align:center;top:831px;font-size:7px;color:#e8e8e8">Slice</div>
<div class="a" style="left:1322px;top:812px;width:14px;height:13px;border:1px solid #efefef;border-radius:3px"></div>
<div class="t" style="left:1304px;width:50px;text-align:center;top:831px;font-size:7px;color:#e8e8e8">Combine</div>
<div class="a" style="left:1366px;top:812px;width:14px;height:13px;border:1px solid #efefef;border-radius:3px"></div>
<div class="t" style="left:1348px;width:50px;text-align:center;top:831px;font-size:7px;color:#e8e8e8">Attach</div>
<div class="a" style="left:1411px;top:812px;width:14px;height:13px;border:1px solid #efefef;border-radius:3px"></div>
<div class="t" style="left:1393px;width:50px;text-align:center;top:831px;font-size:7px;color:#e8e8e8">Flatten</div>
<div class="a" style="left:1455px;top:812px;width:14px;height:13px;border:1px solid #efefef;border-radius:3px"></div>
<div class="t" style="left:1437px;width:50px;text-align:center;top:831px;font-size:7px;color:#e8e8e8">Contour</div>
<svg class="a" style="left:0;top:0" width="1500" height="844" viewBox="0 0 1500 844"><g fill="none" stroke="#8e8e8e" stroke-width="1.4" stroke-dasharray="1.6 2.4"><rect x="191.7" y="193" width="281" height="562.6"/><rect x="502" y="235" width="372" height="520.6"/></g></svg>
<svg class="a" style="left:0;top:0" width="1500" height="844" viewBox="0 0 1500 844"><path d="M226.6 208.0 C227.8 205.4 230.0 205.6 233.7 206.8 C237.4 208.0 245.1 211.8 249.0 215.0 C252.9 218.2 254.8 222.2 257.0 226.0 C259.2 229.8 260.5 234.7 262.0 238.0 C263.5 241.3 263.6 246.1 266.0 246.0 C268.4 245.9 272.1 239.3 276.4 237.7 C280.7 236.1 289.4 235.7 291.8 236.5 C294.2 237.3 292.8 239.5 290.6 242.4 C288.4 245.3 282.9 250.8 278.7 254.2 C274.5 257.6 268.5 258.9 265.7 262.5 C262.9 266.1 265.6 273.2 262.0 275.6 C258.4 278.0 248.7 277.6 244.4 276.8 C240.1 276.0 238.8 272.6 236.0 270.8 C233.2 269.0 229.6 269.6 227.8 266.0 C226.0 262.4 224.4 253.0 225.4 249.5 C226.4 246.0 233.1 246.6 233.7 244.8 C234.3 243.0 230.2 242.6 229.0 238.8 C227.8 235.1 227.0 227.4 226.6 222.3 C226.2 217.2 225.4 210.6 226.6 208.0Z" fill="#7f9cba" stroke="#7f9cba" stroke-width="13.2" stroke-linejoin="round" stroke-linecap="round"/>
<path d="M263.3 250.0 L264.5 240.0 L263.3 230.5" fill="#7f9cba" stroke="#7f9cba" stroke-width="17.2" stroke-linejoin="round" stroke-linecap="round"/>
<path d="M263.3 250.0 L270.0 242.0 L277.5 237.7" fill="#7f9cba" stroke="#7f9cba" stroke-width="17.2" stroke-linejoin="round" stroke-linecap="round"/>
<path d="M226.6 208.0 C227.8 205.4 230.0 205.6 233.7 206.8 C237.4 208.0 245.1 211.8 249.0 215.0 C252.9 218.2 254.8 222.2 257.0 226.0 C259.2 229.8 260.5 234.7 262.0 238.0 C263.5 241.3 263.6 246.1 266.0 246.0 C268.4 245.9 272.1 239.3 276.4 237.7 C280.7 236.1 289.4 235.7 291.8 236.5 C294.2 237.3 292.8 239.5 290.6 242.4 C288.4 245.3 282.9 250.8 278.7 254.2 C274.5 257.6 268.5 258.9 265.7 262.5 C262.9 266.1 265.6 273.2 262.0 275.6 C258.4 278.0 248.7 277.6 244.4 276.8 C240.1 276.0 238.8 272.6 236.0 270.8 C233.2 269.0 229.6 269.6 227.8 266.0 C226.0 262.4 224.4 253.0 225.4 249.5 C226.4 246.0 233.1 246.6 233.7 244.8 C234.3 243.0 230.2 242.6 229.0 238.8 C227.8 235.1 227.0 227.4 226.6 222.3 C226.2 217.2 225.4 210.6 226.6 208.0Z" fill="#98c9f1" stroke="#98c9f1" stroke-width="11.0" stroke-linejoin="round" stroke-linecap="round"/>
<path d="M263.3 250.0 L264.5 240.0 L263.3 230.5" fill="#98c9f1" stroke="#98c9f1" stroke-width="15.0" stroke-linejoin="round" stroke-linecap="round"/>
<path d="M263.3 250.0 L270.0 242.0 L277.5 237.7" fill="#98c9f1" stroke="#98c9f1" stroke-width="15.0" stroke-linejoin="round" stroke-linecap="round"/>
<path d="M226.6 208.0 C227.8 205.4 230.0 205.6 233.7 206.8 C237.4 208.0 245.1 211.8 249.0 215.0 C252.9 218.2 254.8 222.2 257.0 226.0 C259.2 229.8 260.5 234.7 262.0 238.0 C263.5 241.3 263.6 246.1 266.0 246.0 C268.4 245.9 272.1 239.3 276.4 237.7 C280.7 236.1 289.4 235.7 291.8 236.5 C294.2 237.3 292.8 239.5 290.6 242.4 C288.4 245.3 282.9 250.8 278.7 254.2 C274.5 257.6 268.5 258.9 265.7 262.5 C262.9 266.1 265.6 273.2 262.0 275.6 C258.4 278.0 248.7 277.6 244.4 276.8 C240.1 276.0 238.8 272.6 236.0 270.8 C233.2 269.0 229.6 269.6 227.8 266.0 C226.0 262.4 224.4 253.0 225.4 249.5 C226.4 246.0 233.1 246.6 233.7 244.8 C234.3 243.0 230.2 242.6 229.0 238.8 C227.8 235.1 227.0 227.4 226.6 222.3 C226.2 217.2 225.4 210.6 226.6 208.0Z" fill="#98c9f1" stroke="#bab308" stroke-width="4.0" stroke-linejoin="round" stroke-linecap="round"/>
<path d="M226.6 208.0 C227.8 205.4 230.0 205.6 233.7 206.8 C237.4 208.0 245.1 211.8 249.0 215.0 C252.9 218.2 254.8 222.2 257.0 226.0 C259.2 229.8 260.5 234.7 262.0 238.0 C263.5 241.3 263.6 246.1 266.0 246.0 C268.4 245.9 272.1 239.3 276.4 237.7 C280.7 236.1 289.4 235.7 291.8 236.5 C294.2 237.3 292.8 239.5 290.6 242.4 C288.4 245.3 282.9 250.8 278.7 254.2 C274.5 257.6 268.5 258.9 265.7 262.5 C262.9 266.1 265.6 273.2 262.0 275.6 C258.4 278.0 248.7 277.6 244.4 276.8 C240.1 276.0 238.8 272.6 236.0 270.8 C233.2 269.0 229.6 269.6 227.8 266.0 C226.0 262.4 224.4 253.0 225.4 249.5 C226.4 246.0 233.1 246.6 233.7 244.8 C234.3 243.0 230.2 242.6 229.0 238.8 C227.8 235.1 227.0 227.4 226.6 222.3 C226.2 217.2 225.4 210.6 226.6 208.0Z" fill="none" stroke="#f7ee00" stroke-width="2.8" stroke-linejoin="round" stroke-linecap="round"/>
<path d="M244.4 269.6 L263.3 249.5" fill="none" stroke="#bab308" stroke-width="8.5" stroke-linejoin="round" stroke-linecap="round"/>
<path d="M244.4 269.6 L263.3 249.5" fill="none" stroke="#f7ee00" stroke-width="7.3" stroke-linejoin="round" stroke-linecap="round"/>
<path d="M263.3 250.0 C263.5 248.3 264.5 243.2 264.5 240.0 C264.5 236.8 263.5 232.1 263.3 230.5" fill="none" stroke="#0a0a0a" stroke-width="3.1" stroke-linejoin="round" stroke-linecap="round"/>
<path d="M263.3 250.0 C264.4 248.7 267.6 244.1 270.0 242.0 C272.4 239.9 276.2 238.4 277.5 237.7" fill="none" stroke="#0a0a0a" stroke-width="3.1" stroke-linejoin="round" stroke-linecap="round"/>
<path d="M244.4 269.6 L263.3 249.5" fill="none" stroke="#0a0a0a" stroke-width="5.6" stroke-linejoin="round" stroke-linecap="round"/>
<circle cx="258.8" cy="253.2" r="3.8" fill="#0a0a0a"/>
<path d="M368.7 225.8 A15.2 15.2 0 0 1 385.0 216.7 A17.8 17.8 0 0 1 414.9 217.7 A11.8 11.8 0 0 1 425.8 225.8 A16.8 16.8 0 1 1 412.1 256.6 A18.1 18.1 0 0 1 383.2 257.5 A17.8 17.8 0 1 1 368.7 225.8Z" fill="#7f9cba" stroke="#7f9cba" stroke-width="14.8" stroke-linejoin="round" stroke-linecap="round"/>
<path d="M368.7 225.8 A15.2 15.2 0 0 1 385.0 216.7 A17.8 17.8 0 0 1 414.9 217.7 A11.8 11.8 0 0 1 425.8 225.8 A16.8 16.8 0 1 1 412.1 256.6 A18.1 18.1 0 0 1 383.2 257.5 A17.8 17.8 0 1 1 368.7 225.8Z" fill="#98c9f1" stroke="#98c9f1" stroke-width="12.6" stroke-linejoin="round" stroke-linecap="round"/>
<path d="M368.7 225.8 A15.2 15.2 0 0 1 385.0 216.7 A17.8 17.8 0 0 1 414.9 217.7 A11.8 11.8 0 0 1 425.8 225.8 A16.8 16.8 0 1 1 412.1 256.6 A18.1 18.1 0 0 1 383.2 257.5 A17.8 17.8 0 1 1 368.7 225.8Z" fill="none" stroke="#7f9cba" stroke-width="4.4" stroke-linejoin="round" stroke-linecap="round"/>
<path d="M368.7 225.8 A15.2 15.2 0 0 1 385.0 216.7 A17.8 17.8 0 0 1 414.9 217.7 A11.8 11.8 0 0 1 425.8 225.8 A16.8 16.8 0 1 1 412.1 256.6 A18.1 18.1 0 0 1 383.2 257.5 A17.8 17.8 0 1 1 368.7 225.8Z" fill="none" stroke="#ffffff" stroke-width="2.8" stroke-linejoin="round" stroke-linecap="round"/>
<path d="M328.5 329.3 C330.8 326.8 337.3 325.5 343.1 325.3 C348.9 325.1 356.4 326.3 363.4 328.1 C370.3 329.9 379.7 335.2 384.8 336.0 C389.9 336.8 389.5 335.0 393.8 332.6 C398.1 330.2 405.1 324.0 410.7 321.4 C416.3 318.8 422.8 317.2 427.5 316.9 C432.2 316.6 437.1 317.3 438.8 319.7 C440.5 322.1 439.6 327.3 437.7 331.5 C435.8 335.7 430.9 341.9 427.5 345.0 C424.1 348.1 418.1 348.2 417.4 350.1 C416.6 352.0 422.6 353.0 423.0 356.3 C423.4 359.6 422.3 366.4 419.7 369.8 C417.1 373.2 411.1 375.9 407.3 376.5 C403.6 377.1 400.0 372.7 397.2 373.1 C394.4 373.5 394.3 377.5 390.4 378.8 C386.4 380.1 378.2 381.4 373.5 381.0 C368.8 380.6 364.7 379.5 362.3 376.5 C359.9 373.5 358.3 366.8 358.9 363.0 C359.4 359.2 366.4 354.8 365.6 354.0 C364.9 353.2 358.3 359.2 354.4 358.5 C350.5 357.8 346.1 352.5 342.0 349.5 C337.9 346.5 331.9 343.9 329.6 340.5 C327.4 337.1 326.2 331.8 328.5 329.3Z" fill="#7f9cba" stroke="#7f9cba" stroke-width="13.2" stroke-linejoin="round" stroke-linecap="round"/>
<path d="M387.5 336.0 L381.0 326.0 L372.4 320.8" fill="#7f9cba" stroke="#7f9cba" stroke-width="17.2" stroke-linejoin="round" stroke-linecap="round"/>
<path d="M388.5 336.0 L390.5 325.0 L393.8 315.8" fill="#7f9cba" stroke="#7f9cba" stroke-width="17.2" stroke-linejoin="round" stroke-linecap="round"/>
<path d="M328.5 329.3 C330.8 326.8 337.3 325.5 343.1 325.3 C348.9 325.1 356.4 326.3 363.4 328.1 C370.3 329.9 379.7 335.2 384.8 336.0 C389.9 336.8 389.5 335.0 393.8 332.6 C398.1 330.2 405.1 324.0 410.7 321.4 C416.3 318.8 422.8 317.2 427.5 316.9 C432.2 316.6 437.1 317.3 438.8 319.7 C440.5 322.1 439.6 327.3 437.7 331.5 C435.8 335.7 430.9 341.9 427.5 345.0 C424.1 348.1 418.1 348.2 417.4 350.1 C416.6 352.0 422.6 353.0 423.0 356.3 C423.4 359.6 422.3 366.4 419.7 369.8 C417.1 373.2 411.1 375.9 407.3 376.5 C403.6 377.1 400.0 372.7 397.2 373.1 C394.4 373.5 394.3 377.5 390.4 378.8 C386.4 380.1 378.2 381.4 373.5 381.0 C368.8 380.6 364.7 379.5 362.3 376.5 C359.9 373.5 358.3 366.8 358.9 363.0 C359.4 359.2 366.4 354.8 365.6 354.0 C364.9 353.2 358.3 359.2 354.4 358.5 C350.5 357.8 346.1 352.5 342.0 349.5 C337.9 346.5 331.9 343.9 329.6 340.5 C327.4 337.1 326.2 331.8 328.5 329.3Z" fill="#98c9f1" stroke="#98c9f1" stroke-width="11.0" stroke-linejoin="round" stroke-linecap="round"/>
<path d="M387.5 336.0 L381.0 326.0 L372.4 320.8" fill="#98c9f1" stroke="#98c9f1" stroke-width="15.0" stroke-linejoin="round" stroke-linecap="round"/>
<path d="M388.5 336.0 L390.5 325.0 L393.8 315.8" fill="#98c9f1" stroke="#98c9f1" stroke-width="15.0" stroke-linejoin="round" stroke-linecap="round"/>
<path d="M328.5 329.3 C330.8 326.8 337.3 325.5 343.1 325.3 C348.9 325.1 356.4 326.3 363.4 328.1 C370.3 329.9 379.7 335.2 384.8 336.0 C389.9 336.8 389.5 335.0 393.8 332.6 C398.1 330.2 405.1 324.0 410.7 321.4 C416.3 318.8 422.8 317.2 427.5 316.9 C432.2 316.6 437.1 317.3 438.8 319.7 C440.5 322.1 439.6 327.3 437.7 331.5 C435.8 335.7 430.9 341.9 427.5 345.0 C424.1 348.1 418.1 348.2 417.4 350.1 C416.6 352.0 422.6 353.0 423.0 356.3 C423.4 359.6 422.3 366.4 419.7 369.8 C417.1 373.2 411.1 375.9 407.3 376.5 C403.6 377.1 400.0 372.7 397.2 373.1 C394.4 373.5 394.3 377.5 390.4 378.8 C386.4 380.1 378.2 381.4 373.5 381.0 C368.8 380.6 364.7 379.5 362.3 376.5 C359.9 373.5 358.3 366.8 358.9 363.0 C359.4 359.2 366.4 354.8 365.6 354.0 C364.9 353.2 358.3 359.2 354.4 358.5 C350.5 357.8 346.1 352.5 342.0 349.5 C337.9 346.5 331.9 343.9 329.6 340.5 C327.4 337.1 326.2 331.8 328.5 329.3Z" fill="#98c9f1" stroke="#b46d11" stroke-width="4.0" stroke-linejoin="round" stroke-linecap="round"/>
<path d="M328.5 329.3 C330.8 326.8 337.3 325.5 343.1 325.3 C348.9 325.1 356.4 326.3 363.4 328.1 C370.3 329.9 379.7 335.2 384.8 336.0 C389.9 336.8 389.5 335.0 393.8 332.6 C398.1 330.2 405.1 324.0 410.7 321.4 C416.3 318.8 422.8 317.2 427.5 316.9 C432.2 316.6 437.1 317.3 438.8 319.7 C440.5 322.1 439.6 327.3 437.7 331.5 C435.8 335.7 430.9 341.9 427.5 345.0 C424.1 348.1 418.1 348.2 417.4 350.1 C416.6 352.0 422.6 353.0 423.0 356.3 C423.4 359.6 422.3 366.4 419.7 369.8 C417.1 373.2 411.1 375.9 407.3 376.5 C403.6 377.1 400.0 372.7 397.2 373.1 C394.4 373.5 394.3 377.5 390.4 378.8 C386.4 380.1 378.2 381.4 373.5 381.0 C368.8 380.6 364.7 379.5 362.3 376.5 C359.9 373.5 358.3 366.8 358.9 363.0 C359.4 359.2 366.4 354.8 365.6 354.0 C364.9 353.2 358.3 359.2 354.4 358.5 C350.5 357.8 346.1 352.5 342.0 349.5 C337.9 346.5 331.9 343.9 329.6 340.5 C327.4 337.1 326.2 331.8 328.5 329.3Z" fill="none" stroke="#ef8d0c" stroke-width="2.8" stroke-linejoin="round" stroke-linecap="round"/>
<path d="M393.8 368.6 L388.1 337.1" fill="none" stroke="#b46d11" stroke-width="8.5" stroke-linejoin="round" stroke-linecap="round"/>
<path d="M393.8 368.6 L388.1 337.1" fill="none" stroke="#ef8d0c" stroke-width="7.3" stroke-linejoin="round" stroke-linecap="round"/>
<path d="M387.5 336.0 C386.4 334.3 383.5 328.5 381.0 326.0 C378.5 323.5 373.8 321.7 372.4 320.8" fill="none" stroke="#0a0a0a" stroke-width="3.1" stroke-linejoin="round" stroke-linecap="round"/>
<path d="M388.5 336.0 C388.8 334.2 389.6 328.4 390.5 325.0 C391.4 321.6 393.2 317.3 393.8 315.8" fill="none" stroke="#0a0a0a" stroke-width="3.1" stroke-linejoin="round" stroke-linecap="round"/>
<path d="M393.8 368.6 L388.1 337.1" fill="none" stroke="#0a0a0a" stroke-width="5.6" stroke-linejoin="round" stroke-linecap="round"/>
<circle cx="388.7" cy="341.0" r="3.8" fill="#0a0a0a"/>
<path d="M231.6 416.5 A18.5 18.5 0 0 1 249.0 384.9 A16.7 16.7 0 0 1 281.3 386.5 A12.6 12.6 0 0 1 293.7 398.1 A10.3 10.3 0 0 1 291.3 416.5 L231.6 416.5Z" fill="#7f9cba" stroke="#7f9cba" stroke-width="14.8" stroke-linejoin="round" stroke-linecap="round"/>
<path d="M231.6 416.5 A18.5 18.5 0 0 1 249.0 384.9 A16.7 16.7 0 0 1 281.3 386.5 A12.6 12.6 0 0 1 293.7 398.1 A10.3 10.3 0 0 1 291.3 416.5 L231.6 416.5Z" fill="#98c9f1" stroke="#98c9f1" stroke-width="12.6" stroke-linejoin="round" stroke-linecap="round"/>
<path d="M231.6 416.5 A18.5 18.5 0 0 1 249.0 384.9 A16.7 16.7 0 0 1 281.3 386.5 A12.6 12.6 0 0 1 293.7 398.1 A10.3 10.3 0 0 1 291.3 416.5 L231.6 416.5Z" fill="none" stroke="#7f9cba" stroke-width="4.4" stroke-linejoin="round" stroke-linecap="round"/>
<path d="M231.6 416.5 A18.5 18.5 0 0 1 249.0 384.9 A16.7 16.7 0 0 1 281.3 386.5 A12.6 12.6 0 0 1 293.7 398.1 A10.3 10.3 0 0 1 291.3 416.5 L231.6 416.5Z" fill="none" stroke="#ffffff" stroke-width="2.8" stroke-linejoin="round" stroke-linecap="round"/>
<path d="M240.5 497.3 Q238.7 486.7 243.7 481.3 Q250.9 483.2 254.9 493.1 Q263.2 486.3 270.4 487.9 Q272.3 495.1 265.7 503.6 Q275.8 507.3 278.0 514.4 Q272.7 519.6 262.1 518.1 Q263.9 528.7 258.9 534.1 Q251.7 532.2 247.7 522.3 Q239.4 529.1 232.2 527.5 Q230.3 520.3 236.9 511.8 Q226.8 508.1 224.6 501.0 Q229.9 495.8 240.5 497.3Z" fill="#7f9cba" stroke="#7f9cba" stroke-width="14.2" stroke-linejoin="round" stroke-linecap="round"/>
<path d="M244.5 527.0 L253.5 529.0 L246.6 630.0 L235.5 630.0Z" fill="#7f9cba" stroke="#7f9cba" stroke-width="14.2" stroke-linejoin="round" stroke-linecap="round"/>
<path d="M240.5 497.3 Q238.7 486.7 243.7 481.3 Q250.9 483.2 254.9 493.1 Q263.2 486.3 270.4 487.9 Q272.3 495.1 265.7 503.6 Q275.8 507.3 278.0 514.4 Q272.7 519.6 262.1 518.1 Q263.9 528.7 258.9 534.1 Q251.7 532.2 247.7 522.3 Q239.4 529.1 232.2 527.5 Q230.3 520.3 236.9 511.8 Q226.8 508.1 224.6 501.0 Q229.9 495.8 240.5 497.3Z" fill="#98c9f1" stroke="#98c9f1" stroke-width="12.0" stroke-linejoin="round" stroke-linecap="round"/>
<path d="M244.5 527.0 L253.5 529.0 L246.6 630.0 L235.5 630.0Z" fill="#98c9f1" stroke="#98c9f1" stroke-width="12.0" stroke-linejoin="round" stroke-linecap="round"/>
<path d="M244.5 527.0 L253.5 529.0 L246.6 630.0 L235.5 630.0Z" fill="#98c9f1" stroke="#166018" stroke-width="4.0" stroke-linejoin="round" stroke-linecap="butt"/>
<path d="M244.5 527.0 L253.5 529.0 L246.6 630.0 L235.5 630.0Z" fill="none" stroke="#137a17" stroke-width="2.8" stroke-linejoin="round" stroke-linecap="butt"/>
<path d="M240.5 497.3 Q238.7 486.7 243.7 481.3 Q250.9 483.2 254.9 493.1 Q263.2 486.3 270.4 487.9 Q272.3 495.1 265.7 503.6 Q275.8 507.3 278.0 514.4 Q272.7 519.6 262.1 518.1 Q263.9 528.7 258.9 534.1 Q251.7 532.2 247.7 522.3 Q239.4 529.1 232.2 527.5 Q230.3 520.3 236.9 511.8 Q226.8 508.1 224.6 501.0 Q229.9 495.8 240.5 497.3Z" fill="#98c9f1" stroke="#bab308" stroke-width="3.8" stroke-linejoin="round" stroke-linecap="round"/>
<path d="M240.5 497.3 Q238.7 486.7 243.7 481.3 Q250.9 483.2 254.9 493.1 Q263.2 486.3 270.4 487.9 Q272.3 495.1 265.7 503.6 Q275.8 507.3 278.0 514.4 Q272.7 519.6 262.1 518.1 Q263.9 528.7 258.9 534.1 Q251.7 532.2 247.7 522.3 Q239.4 529.1 232.2 527.5 Q230.3 520.3 236.9 511.8 Q226.8 508.1 224.6 501.0 Q229.9 495.8 240.5 497.3Z" fill="none" stroke="#f7ee00" stroke-width="2.6" stroke-linejoin="round" stroke-linecap="round"/>
<path d="M262.7 507.7 C262.7 509.2 263.9 511.1 263.4 512.3 C262.9 513.5 260.7 514.0 259.7 515.1 C258.6 516.1 258.1 518.3 256.9 518.8 C255.7 519.3 253.8 518.1 252.3 518.1 C250.8 518.1 248.9 519.3 247.7 518.8 C246.5 518.3 246.0 516.1 244.9 515.1 C243.9 514.0 241.7 513.5 241.2 512.3 C240.7 511.1 241.9 509.2 241.9 507.7 C241.9 506.2 240.7 504.3 241.2 503.1 C241.7 501.9 243.9 501.4 244.9 500.3 C246.0 499.3 246.5 497.1 247.7 496.6 C248.9 496.1 250.8 497.3 252.3 497.3 C253.8 497.3 255.7 496.1 256.9 496.6 C258.1 497.1 258.6 499.3 259.7 500.3 C260.7 501.4 262.9 501.9 263.4 503.1 C263.9 504.3 262.7 506.2 262.7 507.7Z" fill="#ef8d0c" stroke="#d27a08" stroke-width="0.6"/>
<path d="M268.9 558.0 L285.4 558.0 L288.6 561.8 L293.0 560.5 L296.8 564.3 L301.9 565.6 L304.4 570.7 L308.2 571.9 L310.7 579.5 L313.3 580.8 L310.7 590.9 L315.8 596.0 L314.5 601.1 L306.9 594.7 L304.4 592.8 L295.5 595.4 L287.9 592.2 L286.7 589.0 L280.3 585.9 L277.8 582.1 L279.1 579.5 L275.3 575.7 L274.0 570.7 L275.3 568.1 L271.5 564.3Z" fill="#7f9cba" stroke="#7f9cba" stroke-width="14.2" stroke-linejoin="round" stroke-linecap="round"/>
<path d="M268.9 558.0 L285.4 558.0 L288.6 561.8 L293.0 560.5 L296.8 564.3 L301.9 565.6 L304.4 570.7 L308.2 571.9 L310.7 579.5 L313.3 580.8 L310.7 590.9 L315.8 596.0 L314.5 601.1 L306.9 594.7 L304.4 592.8 L295.5 595.4 L287.9 592.2 L286.7 589.0 L280.3 585.9 L277.8 582.1 L279.1 579.5 L275.3 575.7 L274.0 570.7 L275.3 568.1 L271.5 564.3Z" fill="#98c9f1" stroke="#98c9f1" stroke-width="12.0" stroke-linejoin="round" stroke-linecap="round"/>
<path d="M268.9 558.0 L285.4 558.0 L288.6 561.8 L293.0 560.5 L296.8 564.3 L301.9 565.6 L304.4 570.7 L308.2 571.9 L310.7 579.5 L313.3 580.8 L310.7 590.9 L315.8 596.0 L314.5 601.1 L306.9 594.7 L304.4 592.8 L295.5 595.4 L287.9 592.2 L286.7 589.0 L280.3 585.9 L277.8 582.1 L279.1 579.5 L275.3 575.7 L274.0 570.7 L275.3 568.1 L271.5 564.3Z" fill="#98c9f1" stroke="#208a32" stroke-width="3.8" stroke-linejoin="round" stroke-linecap="round"/>
<path d="M268.9 558.0 L285.4 558.0 L288.6 561.8 L293.0 560.5 L296.8 564.3 L301.9 565.6 L304.4 570.7 L308.2 571.9 L310.7 579.5 L313.3 580.8 L310.7 590.9 L315.8 596.0 L314.5 601.1 L306.9 594.7 L304.4 592.8 L295.5 595.4 L287.9 592.2 L286.7 589.0 L280.3 585.9 L277.8 582.1 L279.1 579.5 L275.3 575.7 L274.0 570.7 L275.3 568.1 L271.5 564.3Z" fill="none" stroke="#22b43a" stroke-width="2.6" stroke-linejoin="round" stroke-linecap="round"/>
<path d="M365.0 581.0 Q377.0 563.2 363.0 547.0 Q351.0 564.8 365.0 581.0Z" fill="#7f9cba" stroke="#7f9cba" stroke-width="13.2" stroke-linejoin="round" stroke-linecap="round"/>
<path d="M373.0 570.0 Q395.1 558.0 392.4 533.0 Q370.3 545.0 373.0 570.0Z" fill="#7f9cba" stroke="#7f9cba" stroke-width="13.2" stroke-linejoin="round" stroke-linecap="round"/>
<path d="M389.0 557.0 Q410.9 570.0 431.5 555.0 Q409.6 542.0 389.0 557.0Z" fill="#7f9cba" stroke="#7f9cba" stroke-width="13.2" stroke-linejoin="round" stroke-linecap="round"/>
<path d="M386.0 563.0 Q396.0 577.4 413.0 573.0 Q403.0 558.6 386.0 563.0Z" fill="#7f9cba" stroke="#7f9cba" stroke-width="13.2" stroke-linejoin="round" stroke-linecap="round"/>
<path d="M368.0 581.0 Q383.7 590.0 398.0 579.0 Q382.3 570.0 368.0 581.0Z" fill="#7f9cba" stroke="#7f9cba" stroke-width="13.2" stroke-linejoin="round" stroke-linecap="round"/>
<path d="M361.4 594.0 L366.0 578.0 L390.0 558.0" fill="#7f9cba" stroke="#7f9cba" stroke-width="15.2" stroke-linejoin="round" stroke-linecap="round"/>
<path d="M365.0 581.0 Q377.0 563.2 363.0 547.0 Q351.0 564.8 365.0 581.0Z" fill="#98c9f1" stroke="#98c9f1" stroke-width="11.0" stroke-linejoin="round" stroke-linecap="round"/>
<path d="M373.0 570.0 Q395.1 558.0 392.4 533.0 Q370.3 545.0 373.0 570.0Z" fill="#98c9f1" stroke="#98c9f1" stroke-width="11.0" stroke-linejoin="round" stroke-linecap="round"/>
<path d="M389.0 557.0 Q410.9 570.0 431.5 555.0 Q409.6 542.0 389.0 557.0Z" fill="#98c9f1" stroke="#98c9f1" stroke-width="11.0" stroke-linejoin="round" stroke-linecap="round"/>
<path d="M386.0 563.0 Q396.0 577.4 413.0 573.0 Q403.0 558.6 386.0 563.0Z" fill="#98c9f1" stroke="#98c9f1" stroke-width="11.0" stroke-linejoin="round" stroke-linecap="round"/>
<path d="M368.0 581.0 Q383.7 590.0 398.0 579.0 Q382.3 570.0 368.0 581.0Z" fill="#98c9f1" stroke="#98c9f1" stroke-width="11.0" stroke-linejoin="round" stroke-linecap="round"/>
<path d="M361.4 594.0 L366.0 578.0 L390.0 558.0" fill="#98c9f1" stroke="#98c9f1" stroke-width="13.0" stroke-linejoin="round" stroke-linecap="round"/>
<path d="M365.0 581.0 Q377.0 563.2 363.0 547.0 Q351.0 564.8 365.0 581.0Z" fill="#98c9f1" stroke="#208a32" stroke-width="4.0" stroke-linejoin="round" stroke-linecap="round"/>
<path d="M365.0 581.0 Q377.0 563.2 363.0 547.0 Q351.0 564.8 365.0 581.0Z" fill="none" stroke="#22b43a" stroke-width="2.8" stroke-linejoin="round" stroke-linecap="round"/>
<path d="M373.0 570.0 Q395.1 558.0 392.4 533.0 Q370.3 545.0 373.0 570.0Z" fill="#98c9f1" stroke="#208a32" stroke-width="4.0" stroke-linejoin="round" stroke-linecap="round"/>
<path d="M373.0 570.0 Q395.1 558.0 392.4 533.0 Q370.3 545.0 373.0 570.0Z" fill="none" stroke="#22b43a" stroke-width="2.8" stroke-linejoin="round" stroke-linecap="round"/>
<path d="M389.0 557.0 Q410.9 570.0 431.5 555.0 Q409.6 542.0 389.0 557.0Z" fill="#98c9f1" stroke="#208a32" stroke-width="4.0" stroke-linejoin="round" stroke-linecap="round"/>
<path d="M389.0 557.0 Q410.9 570.0 431.5 555.0 Q409.6 542.0 389.0 557.0Z" fill="none" stroke="#22b43a" stroke-width="2.8" stroke-linejoin="round" stroke-linecap="round"/>
<path d="M386.0 563.0 Q396.0 577.4 413.0 573.0 Q403.0 558.6 386.0 563.0Z" fill="#98c9f1" stroke="#208a32" stroke-width="4.0" stroke-linejoin="round" stroke-linecap="round"/>
<path d="M386.0 563.0 Q396.0 577.4 413.0 573.0 Q403.0 558.6 386.0 563.0Z" fill="none" stroke="#22b43a" stroke-width="2.8" stroke-linejoin="round" stroke-linecap="round"/>
<path d="M368.0 581.0 Q383.7 590.0 398.0 579.0 Q382.3 570.0 368.0 581.0Z" fill="#98c9f1" stroke="#208a32" stroke-width="4.0" stroke-linejoin="round" stroke-linecap="round"/>
<path d="M368.0 581.0 Q383.7 590.0 398.0 579.0 Q382.3 570.0 368.0 581.0Z" fill="none" stroke="#22b43a" stroke-width="2.8" stroke-linejoin="round" stroke-linecap="round"/>
<path d="M361.4 594.0 L365.0 580.0 L372.0 572.0" fill="none" stroke="#208a32" stroke-width="4.0" stroke-linejoin="round" stroke-linecap="round"/>
<path d="M361.4 594.0 L365.0 580.0 L372.0 572.0" fill="none" stroke="#22b43a" stroke-width="2.8" stroke-linejoin="round" stroke-linecap="round"/>
<path d="M343.2 626.1 C344.3 626.1 345.6 624.3 346.4 623.1 C347.2 621.9 347.7 620.6 348.0 619.1 C348.3 617.6 348.3 615.7 348.2 614.1 C348.1 612.5 347.9 610.8 347.4 609.6 C346.9 608.4 346.1 607.5 345.4 606.9 C344.7 606.3 343.9 606.1 343.2 606.1 C342.5 606.1 341.7 606.3 341.0 606.9 C340.3 607.5 339.5 608.4 339.0 609.6 C338.5 610.8 338.3 612.5 338.2 614.1 C338.1 615.7 338.1 617.6 338.4 619.1 C338.7 620.6 339.2 621.9 340.0 623.1 C340.8 624.3 342.1 626.1 343.2 626.1Z" fill="#7f9cba" stroke="#7f9cba" stroke-width="15.2" stroke-linejoin="round" stroke-linecap="round"/>
<path d="M347.9 627.6 C348.8 628.3 350.9 627.6 352.3 627.1 C353.6 626.6 354.8 625.8 355.9 624.8 C357.0 623.7 358.2 622.2 359.0 620.9 C359.9 619.5 360.7 618.0 361.0 616.7 C361.3 615.5 361.2 614.3 361.0 613.4 C360.7 612.5 360.3 611.9 359.7 611.4 C359.1 611.0 358.3 610.7 357.4 610.8 C356.5 610.9 355.3 611.1 354.2 611.8 C353.1 612.5 351.9 613.8 350.9 615.0 C349.9 616.2 348.8 617.8 348.1 619.1 C347.5 620.5 347.1 621.9 347.1 623.3 C347.0 624.7 347.0 627.0 347.9 627.6Z" fill="#7f9cba" stroke="#7f9cba" stroke-width="15.2" stroke-linejoin="round" stroke-linecap="round"/>
<path d="M350.8 631.6 C351.1 632.6 353.3 633.3 354.7 633.7 C356.0 634.1 357.4 634.2 358.9 634.0 C360.5 633.9 362.3 633.3 363.8 632.7 C365.2 632.1 366.8 631.3 367.8 630.5 C368.8 629.7 369.4 628.6 369.7 627.8 C370.1 626.9 370.1 626.1 369.8 625.4 C369.6 624.8 369.2 624.1 368.4 623.6 C367.6 623.1 366.5 622.6 365.2 622.5 C363.9 622.5 362.2 622.8 360.7 623.2 C359.1 623.6 357.3 624.2 356.0 624.9 C354.6 625.6 353.5 626.5 352.7 627.7 C351.8 628.8 350.5 630.6 350.8 631.6Z" fill="#7f9cba" stroke="#7f9cba" stroke-width="15.2" stroke-linejoin="round" stroke-linecap="round"/>
<path d="M350.8 636.6 C350.5 637.6 351.8 639.4 352.7 640.5 C353.5 641.7 354.6 642.6 356.0 643.3 C357.3 644.0 359.1 644.6 360.7 645.0 C362.2 645.4 363.9 645.7 365.2 645.7 C366.5 645.6 367.6 645.1 368.4 644.6 C369.2 644.1 369.6 643.4 369.8 642.8 C370.1 642.1 370.1 641.3 369.7 640.4 C369.4 639.6 368.8 638.5 367.8 637.7 C366.8 636.9 365.2 636.1 363.8 635.5 C362.3 634.9 360.5 634.3 358.9 634.2 C357.4 634.0 356.0 634.1 354.7 634.5 C353.3 634.9 351.1 635.6 350.8 636.6Z" fill="#7f9cba" stroke="#7f9cba" stroke-width="15.2" stroke-linejoin="round" stroke-linecap="round"/>
<path d="M347.9 640.6 C347.0 641.2 347.0 643.5 347.1 644.9 C347.1 646.3 347.5 647.7 348.1 649.1 C348.8 650.4 349.9 652.0 350.9 653.2 C351.9 654.4 353.1 655.7 354.2 656.4 C355.3 657.1 356.5 657.3 357.4 657.4 C358.3 657.5 359.1 657.2 359.7 656.8 C360.3 656.3 360.7 655.7 361.0 654.8 C361.2 653.9 361.3 652.7 361.0 651.5 C360.7 650.2 359.9 648.7 359.0 647.3 C358.2 646.0 357.0 644.5 355.9 643.4 C354.8 642.4 353.6 641.6 352.3 641.1 C350.9 640.6 348.8 639.9 347.9 640.6Z" fill="#7f9cba" stroke="#7f9cba" stroke-width="15.2" stroke-linejoin="round" stroke-linecap="round"/>
<path d="M343.2 642.1 C342.1 642.1 340.8 643.9 340.0 645.1 C339.2 646.3 338.7 647.6 338.4 649.1 C338.1 650.6 338.1 652.5 338.2 654.1 C338.3 655.7 338.5 657.4 339.0 658.6 C339.5 659.8 340.3 660.7 341.0 661.3 C341.7 661.9 342.5 662.1 343.2 662.1 C343.9 662.1 344.7 661.9 345.4 661.3 C346.1 660.7 346.9 659.8 347.4 658.6 C347.9 657.4 348.1 655.7 348.2 654.1 C348.3 652.5 348.3 650.6 348.0 649.1 C347.7 647.6 347.2 646.3 346.4 645.1 C345.6 643.9 344.3 642.1 343.2 642.1Z" fill="#7f9cba" stroke="#7f9cba" stroke-width="15.2" stroke-linejoin="round" stroke-linecap="round"/>
<path d="M338.5 640.6 C337.6 639.9 335.5 640.6 334.1 641.1 C332.8 641.6 331.6 642.4 330.5 643.4 C329.4 644.5 328.2 646.0 327.4 647.3 C326.5 648.7 325.7 650.2 325.4 651.5 C325.1 652.7 325.2 653.9 325.4 654.8 C325.7 655.7 326.1 656.3 326.7 656.8 C327.3 657.2 328.1 657.5 329.0 657.4 C329.9 657.3 331.1 657.1 332.2 656.4 C333.3 655.7 334.5 654.4 335.5 653.2 C336.5 652.0 337.6 650.4 338.3 649.1 C338.9 647.7 339.3 646.3 339.3 644.9 C339.4 643.5 339.4 641.2 338.5 640.6Z" fill="#7f9cba" stroke="#7f9cba" stroke-width="15.2" stroke-linejoin="round" stroke-linecap="round"/>
<path d="M335.6 636.6 C335.3 635.6 333.1 634.9 331.7 634.5 C330.4 634.1 329.0 634.0 327.5 634.2 C325.9 634.3 324.1 634.9 322.6 635.5 C321.2 636.1 319.6 636.9 318.6 637.7 C317.6 638.5 317.0 639.6 316.7 640.4 C316.3 641.3 316.3 642.1 316.6 642.8 C316.8 643.4 317.2 644.1 318.0 644.6 C318.8 645.1 319.9 645.6 321.2 645.7 C322.5 645.7 324.2 645.4 325.7 645.0 C327.3 644.6 329.1 644.0 330.4 643.3 C331.8 642.6 332.9 641.7 333.7 640.5 C334.6 639.4 335.9 637.6 335.6 636.6Z" fill="#7f9cba" stroke="#7f9cba" stroke-width="15.2" stroke-linejoin="round" stroke-linecap="round"/>
<path d="M335.6 631.6 C335.9 630.6 334.6 628.8 333.7 627.7 C332.9 626.5 331.8 625.6 330.4 624.9 C329.1 624.2 327.3 623.6 325.7 623.2 C324.2 622.8 322.5 622.5 321.2 622.5 C319.9 622.6 318.8 623.1 318.0 623.6 C317.2 624.1 316.8 624.8 316.6 625.4 C316.3 626.1 316.3 626.9 316.7 627.8 C317.0 628.6 317.6 629.7 318.6 630.5 C319.6 631.3 321.2 632.1 322.6 632.7 C324.1 633.3 325.9 633.9 327.5 634.0 C329.0 634.2 330.4 634.1 331.7 633.7 C333.1 633.3 335.3 632.6 335.6 631.6Z" fill="#7f9cba" stroke="#7f9cba" stroke-width="15.2" stroke-linejoin="round" stroke-linecap="round"/>
<path d="M338.5 627.6 C339.4 627.0 339.4 624.7 339.3 623.3 C339.3 621.9 338.9 620.5 338.3 619.1 C337.6 617.8 336.5 616.2 335.5 615.0 C334.5 613.8 333.3 612.5 332.2 611.8 C331.1 611.1 329.9 610.9 329.0 610.8 C328.1 610.7 327.3 611.0 326.7 611.4 C326.1 611.9 325.7 612.5 325.4 613.4 C325.2 614.3 325.1 615.5 325.4 616.7 C325.7 618.0 326.5 619.5 327.4 620.9 C328.2 622.2 329.4 623.7 330.5 624.8 C331.6 625.8 332.8 626.6 334.1 627.1 C335.5 627.6 337.6 628.3 338.5 627.6Z" fill="#7f9cba" stroke="#7f9cba" stroke-width="15.2" stroke-linejoin="round" stroke-linecap="round"/>
<path d="M343.2 626.1 C344.3 626.1 345.6 624.3 346.4 623.1 C347.2 621.9 347.7 620.6 348.0 619.1 C348.3 617.6 348.3 615.7 348.2 614.1 C348.1 612.5 347.9 610.8 347.4 609.6 C346.9 608.4 346.1 607.5 345.4 606.9 C344.7 606.3 343.9 606.1 343.2 606.1 C342.5 606.1 341.7 606.3 341.0 606.9 C340.3 607.5 339.5 608.4 339.0 609.6 C338.5 610.8 338.3 612.5 338.2 614.1 C338.1 615.7 338.1 617.6 338.4 619.1 C338.7 620.6 339.2 621.9 340.0 623.1 C340.8 624.3 342.1 626.1 343.2 626.1Z" fill="#98c9f1" stroke="#98c9f1" stroke-width="13.0" stroke-linejoin="round" stroke-linecap="round"/>
<path d="M347.9 627.6 C348.8 628.3 350.9 627.6 352.3 627.1 C353.6 626.6 354.8 625.8 355.9 624.8 C357.0 623.7 358.2 622.2 359.0 620.9 C359.9 619.5 360.7 618.0 361.0 616.7 C361.3 615.5 361.2 614.3 361.0 613.4 C360.7 612.5 360.3 611.9 359.7 611.4 C359.1 611.0 358.3 610.7 357.4 610.8 C356.5 610.9 355.3 611.1 354.2 611.8 C353.1 612.5 351.9 613.8 350.9 615.0 C349.9 616.2 348.8 617.8 348.1 619.1 C347.5 620.5 347.1 621.9 347.1 623.3 C347.0 624.7 347.0 627.0 347.9 627.6Z" fill="#98c9f1" stroke="#98c9f1" stroke-width="13.0" stroke-linejoin="round" stroke-linecap="round"/>
<path d="M350.8 631.6 C351.1 632.6 353.3 633.3 354.7 633.7 C356.0 634.1 357.4 634.2 358.9 634.0 C360.5 633.9 362.3 633.3 363.8 632.7 C365.2 632.1 366.8 631.3 367.8 630.5 C368.8 629.7 369.4 628.6 369.7 627.8 C370.1 626.9 370.1 626.1 369.8 625.4 C369.6 624.8 369.2 624.1 368.4 623.6 C367.6 623.1 366.5 622.6 365.2 622.5 C363.9 622.5 362.2 622.8 360.7 623.2 C359.1 623.6 357.3 624.2 356.0 624.9 C354.6 625.6 353.5 626.5 352.7 627.7 C351.8 628.8 350.5 630.6 350.8 631.6Z" fill="#98c9f1" stroke="#98c9f1" stroke-width="13.0" stroke-linejoin="round" stroke-linecap="round"/>
<path d="M350.8 636.6 C350.5 637.6 351.8 639.4 352.7 640.5 C353.5 641.7 354.6 642.6 356.0 643.3 C357.3 644.0 359.1 644.6 360.7 645.0 C362.2 645.4 363.9 645.7 365.2 645.7 C366.5 645.6 367.6 645.1 368.4 644.6 C369.2 644.1 369.6 643.4 369.8 642.8 C370.1 642.1 370.1 641.3 369.7 640.4 C369.4 639.6 368.8 638.5 367.8 637.7 C366.8 636.9 365.2 636.1 363.8 635.5 C362.3 634.9 360.5 634.3 358.9 634.2 C357.4 634.0 356.0 634.1 354.7 634.5 C353.3 634.9 351.1 635.6 350.8 636.6Z" fill="#98c9f1" stroke="#98c9f1" stroke-width="13.0" stroke-linejoin="round" stroke-linecap="round"/>
<path d="M347.9 640.6 C347.0 641.2 347.0 643.5 347.1 644.9 C347.1 646.3 347.5 647.7 348.1 649.1 C348.8 650.4 349.9 652.0 350.9 653.2 C351.9 654.4 353.1 655.7 354.2 656.4 C355.3 657.1 356.5 657.3 357.4 657.4 C358.3 657.5 359.1 657.2 359.7 656.8 C360.3 656.3 360.7 655.7 361.0 654.8 C361.2 653.9 361.3 652.7 361.0 651.5 C360.7 650.2 359.9 648.7 359.0 647.3 C358.2 646.0 357.0 644.5 355.9 643.4 C354.8 642.4 353.6 641.6 352.3 641.1 C350.9 640.6 348.8 639.9 347.9 640.6Z" fill="#98c9f1" stroke="#98c9f1" stroke-width="13.0" stroke-linejoin="round" stroke-linecap="round"/>
<path d="M343.2 642.1 C342.1 642.1 340.8 643.9 340.0 645.1 C339.2 646.3 338.7 647.6 338.4 649.1 C338.1 650.6 338.1 652.5 338.2 654.1 C338.3 655.7 338.5 657.4 339.0 658.6 C339.5 659.8 340.3 660.7 341.0 661.3 C341.7 661.9 342.5 662.1 343.2 662.1 C343.9 662.1 344.7 661.9 345.4 661.3 C346.1 660.7 346.9 659.8 347.4 658.6 C347.9 657.4 348.1 655.7 348.2 654.1 C348.3 652.5 348.3 650.6 348.0 649.1 C347.7 647.6 347.2 646.3 346.4 645.1 C345.6 643.9 344.3 642.1 343.2 642.1Z" fill="#98c9f1" stroke="#98c9f1" stroke-width="13.0" stroke-linejoin="round" stroke-linecap="round"/>
<path d="M338.5 640.6 C337.6 639.9 335.5 640.6 334.1 641.1 C332.8 641.6 331.6 642.4 330.5 643.4 C329.4 644.5 328.2 646.0 327.4 647.3 C326.5 648.7 325.7 650.2 325.4 651.5 C325.1 652.7 325.2 653.9 325.4 654.8 C325.7 655.7 326.1 656.3 326.7 656.8 C327.3 657.2 328.1 657.5 329.0 657.4 C329.9 657.3 331.1 657.1 332.2 656.4 C333.3 655.7 334.5 654.4 335.5 653.2 C336.5 652.0 337.6 650.4 338.3 649.1 C338.9 647.7 339.3 646.3 339.3 644.9 C339.4 643.5 339.4 641.2 338.5 640.6Z" fill="#98c9f1" stroke="#98c9f1" stroke-width="13.0" stroke-linejoin="round" stroke-linecap="round"/>
<path d="M335.6 636.6 C335.3 635.6 333.1 634.9 331.7 634.5 C330.4 634.1 329.0 634.0 327.5 634.2 C325.9 634.3 324.1 634.9 322.6 635.5 C321.2 636.1 319.6 636.9 318.6 637.7 C317.6 638.5 317.0 639.6 316.7 640.4 C316.3 641.3 316.3 642.1 316.6 642.8 C316.8 643.4 317.2 644.1 318.0 644.6 C318.8 645.1 319.9 645.6 321.2 645.7 C322.5 645.7 324.2 645.4 325.7 645.0 C327.3 644.6 329.1 644.0 330.4 643.3 C331.8 642.6 332.9 641.7 333.7 640.5 C334.6 639.4 335.9 637.6 335.6 636.6Z" fill="#98c9f1" stroke="#98c9f1" stroke-width="13.0" stroke-linejoin="round" stroke-linecap="round"/>
<path d="M335.6 631.6 C335.9 630.6 334.6 628.8 333.7 627.7 C332.9 626.5 331.8 625.6 330.4 624.9 C329.1 624.2 327.3 623.6 325.7 623.2 C324.2 622.8 322.5 622.5 321.2 622.5 C319.9 622.6 318.8 623.1 318.0 623.6 C317.2 624.1 316.8 624.8 316.6 625.4 C316.3 626.1 316.3 626.9 316.7 627.8 C317.0 628.6 317.6 629.7 318.6 630.5 C319.6 631.3 321.2 632.1 322.6 632.7 C324.1 633.3 325.9 633.9 327.5 634.0 C329.0 634.2 330.4 634.1 331.7 633.7 C333.1 633.3 335.3 632.6 335.6 631.6Z" fill="#98c9f1" stroke="#98c9f1" stroke-width="13.0" stroke-linejoin="round" stroke-linecap="round"/>
<path d="M338.5 627.6 C339.4 627.0 339.4 624.7 339.3 623.3 C339.3 621.9 338.9 620.5 338.3 619.1 C337.6 617.8 336.5 616.2 335.5 615.0 C334.5 613.8 333.3 612.5 332.2 611.8 C331.1 611.1 329.9 610.9 329.0 610.8 C328.1 610.7 327.3 611.0 326.7 611.4 C326.1 611.9 325.7 612.5 325.4 613.4 C325.2 614.3 325.1 615.5 325.4 616.7 C325.7 618.0 326.5 619.5 327.4 620.9 C328.2 622.2 329.4 623.7 330.5 624.8 C331.6 625.8 332.8 626.6 334.1 627.1 C335.5 627.6 337.6 628.3 338.5 627.6Z" fill="#98c9f1" stroke="#98c9f1" stroke-width="13.0" stroke-linejoin="round" stroke-linecap="round"/>
<path d="M343.2 626.1 C344.3 626.1 345.6 624.3 346.4 623.1 C347.2 621.9 347.7 620.6 348.0 619.1 C348.3 617.6 348.3 615.7 348.2 614.1 C348.1 612.5 347.9 610.8 347.4 609.6 C346.9 608.4 346.1 607.5 345.4 606.9 C344.7 606.3 343.9 606.1 343.2 606.1 C342.5 606.1 341.7 606.3 341.0 606.9 C340.3 607.5 339.5 608.4 339.0 609.6 C338.5 610.8 338.3 612.5 338.2 614.1 C338.1 615.7 338.1 617.6 338.4 619.1 C338.7 620.6 339.2 621.9 340.0 623.1 C340.8 624.3 342.1 626.1 343.2 626.1Z" fill="#98c9f1" stroke="#b46d11" stroke-width="3.6" stroke-linejoin="round"/>
<path d="M343.2 626.1 C344.3 626.1 345.6 624.3 346.4 623.1 C347.2 621.9 347.7 620.6 348.0 619.1 C348.3 617.6 348.3 615.7 348.2 614.1 C348.1 612.5 347.9 610.8 347.4 609.6 C346.9 608.4 346.1 607.5 345.4 606.9 C344.7 606.3 343.9 606.1 343.2 606.1 C342.5 606.1 341.7 606.3 341.0 606.9 C340.3 607.5 339.5 608.4 339.0 609.6 C338.5 610.8 338.3 612.5 338.2 614.1 C338.1 615.7 338.1 617.6 338.4 619.1 C338.7 620.6 339.2 621.9 340.0 623.1 C340.8 624.3 342.1 626.1 343.2 626.1Z" fill="none" stroke="#ef8d0c" stroke-width="2.5" stroke-linejoin="round"/>
<path d="M347.9 627.6 C348.8 628.3 350.9 627.6 352.3 627.1 C353.6 626.6 354.8 625.8 355.9 624.8 C357.0 623.7 358.2 622.2 359.0 620.9 C359.9 619.5 360.7 618.0 361.0 616.7 C361.3 615.5 361.2 614.3 361.0 613.4 C360.7 612.5 360.3 611.9 359.7 611.4 C359.1 611.0 358.3 610.7 357.4 610.8 C356.5 610.9 355.3 611.1 354.2 611.8 C353.1 612.5 351.9 613.8 350.9 615.0 C349.9 616.2 348.8 617.8 348.1 619.1 C347.5 620.5 347.1 621.9 347.1 623.3 C347.0 624.7 347.0 627.0 347.9 627.6Z" fill="#98c9f1" stroke="#b46d11" stroke-width="3.6" stroke-linejoin="round"/>
<path d="M347.9 627.6 C348.8 628.3 350.9 627.6 352.3 627.1 C353.6 626.6 354.8 625.8 355.9 624.8 C357.0 623.7 358.2 622.2 359.0 620.9 C359.9 619.5 360.7 618.0 361.0 616.7 C361.3 615.5 361.2 614.3 361.0 613.4 C360.7 612.5 360.3 611.9 359.7 611.4 C359.1 611.0 358.3 610.7 357.4 610.8 C356.5 610.9 355.3 611.1 354.2 611.8 C353.1 612.5 351.9 613.8 350.9 615.0 C349.9 616.2 348.8 617.8 348.1 619.1 C347.5 620.5 347.1 621.9 347.1 623.3 C347.0 624.7 347.0 627.0 347.9 627.6Z" fill="none" stroke="#ef8d0c" stroke-width="2.5" stroke-linejoin="round"/>
<path d="M350.8 631.6 C351.1 632.6 353.3 633.3 354.7 633.7 C356.0 634.1 357.4 634.2 358.9 634.0 C360.5 633.9 362.3 633.3 363.8 632.7 C365.2 632.1 366.8 631.3 367.8 630.5 C368.8 629.7 369.4 628.6 369.7 627.8 C370.1 626.9 370.1 626.1 369.8 625.4 C369.6 624.8 369.2 624.1 368.4 623.6 C367.6 623.1 366.5 622.6 365.2 622.5 C363.9 622.5 362.2 622.8 360.7 623.2 C359.1 623.6 357.3 624.2 356.0 624.9 C354.6 625.6 353.5 626.5 352.7 627.7 C351.8 628.8 350.5 630.6 350.8 631.6Z" fill="#98c9f1" stroke="#b46d11" stroke-width="3.6" stroke-linejoin="round"/>
<path d="M350.8 631.6 C351.1 632.6 353.3 633.3 354.7 633.7 C356.0 634.1 357.4 634.2 358.9 634.0 C360.5 633.9 362.3 633.3 363.8 632.7 C365.2 632.1 366.8 631.3 367.8 630.5 C368.8 629.7 369.4 628.6 369.7 627.8 C370.1 626.9 370.1 626.1 369.8 625.4 C369.6 624.8 369.2 624.1 368.4 623.6 C367.6 623.1 366.5 622.6 365.2 622.5 C363.9 622.5 362.2 622.8 360.7 623.2 C359.1 623.6 357.3 624.2 356.0 624.9 C354.6 625.6 353.5 626.5 352.7 627.7 C351.8 628.8 350.5 630.6 350.8 631.6Z" fill="none" stroke="#ef8d0c" stroke-width="2.5" stroke-linejoin="round"/>
<path d="M350.8 636.6 C350.5 637.6 351.8 639.4 352.7 640.5 C353.5 641.7 354.6 642.6 356.0 643.3 C357.3 644.0 359.1 644.6 360.7 645.0 C362.2 645.4 363.9 645.7 365.2 645.7 C366.5 645.6 367.6 645.1 368.4 644.6 C369.2 644.1 369.6 643.4 369.8 642.8 C370.1 642.1 370.1 641.3 369.7 640.4 C369.4 639.6 368.8 638.5 367.8 637.7 C366.8 636.9 365.2 636.1 363.8 635.5 C362.3 634.9 360.5 634.3 358.9 634.2 C357.4 634.0 356.0 634.1 354.7 634.5 C353.3 634.9 351.1 635.6 350.8 636.6Z" fill="#98c9f1" stroke="#b46d11" stroke-width="3.6" stroke-linejoin="round"/>
<path d="M350.8 636.6 C350.5 637.6 351.8 639.4 352.7 640.5 C353.5 641.7 354.6 642.6 356.0 643.3 C357.3 644.0 359.1 644.6 360.7 645.0 C362.2 645.4 363.9 645.7 365.2 645.7 C366.5 645.6 367.6 645.1 368.4 644.6 C369.2 644.1 369.6 643.4 369.8 642.8 C370.1 642.1 370.1 641.3 369.7 640.4 C369.4 639.6 368.8 638.5 367.8 637.7 C366.8 636.9 365.2 636.1 363.8 635.5 C362.3 634.9 360.5 634.3 358.9 634.2 C357.4 634.0 356.0 634.1 354.7 634.5 C353.3 634.9 351.1 635.6 350.8 636.6Z" fill="none" stroke="#ef8d0c" stroke-width="2.5" stroke-linejoin="round"/>
<path d="M347.9 640.6 C347.0 641.2 347.0 643.5 347.1 644.9 C347.1 646.3 347.5 647.7 348.1 649.1 C348.8 650.4 349.9 652.0 350.9 653.2 C351.9 654.4 353.1 655.7 354.2 656.4 C355.3 657.1 356.5 657.3 357.4 657.4 C358.3 657.5 359.1 657.2 359.7 656.8 C360.3 656.3 360.7 655.7 361.0 654.8 C361.2 653.9 361.3 652.7 361.0 651.5 C360.7 650.2 359.9 648.7 359.0 647.3 C358.2 646.0 357.0 644.5 355.9 643.4 C354.8 642.4 353.6 641.6 352.3 641.1 C350.9 640.6 348.8 639.9 347.9 640.6Z" fill="#98c9f1" stroke="#b46d11" stroke-width="3.6" stroke-linejoin="round"/>
<path d="M347.9 640.6 C347.0 641.2 347.0 643.5 347.1 644.9 C347.1 646.3 347.5 647.7 348.1 649.1 C348.8 650.4 349.9 652.0 350.9 653.2 C351.9 654.4 353.1 655.7 354.2 656.4 C355.3 657.1 356.5 657.3 357.4 657.4 C358.3 657.5 359.1 657.2 359.7 656.8 C360.3 656.3 360.7 655.7 361.0 654.8 C361.2 653.9 361.3 652.7 361.0 651.5 C360.7 650.2 359.9 648.7 359.0 647.3 C358.2 646.0 357.0 644.5 355.9 643.4 C354.8 642.4 353.6 641.6 352.3 641.1 C350.9 640.6 348.8 639.9 347.9 640.6Z" fill="none" stroke="#ef8d0c" stroke-width="2.5" stroke-linejoin="round"/>
<path d="M343.2 642.1 C342.1 642.1 340.8 643.9 340.0 645.1 C339.2 646.3 338.7 647.6 338.4 649.1 C338.1 650.6 338.1 652.5 338.2 654.1 C338.3 655.7 338.5 657.4 339.0 658.6 C339.5 659.8 340.3 660.7 341.0 661.3 C341.7 661.9 342.5 662.1 343.2 662.1 C343.9 662.1 344.7 661.9 345.4 661.3 C346.1 660.7 346.9 659.8 347.4 658.6 C347.9 657.4 348.1 655.7 348.2 654.1 C348.3 652.5 348.3 650.6 348.0 649.1 C347.7 647.6 347.2 646.3 346.4 645.1 C345.6 643.9 344.3 642.1 343.2 642.1Z" fill="#98c9f1" stroke="#b46d11" stroke-width="3.6" stroke-linejoin="round"/>
<path d="M343.2 642.1 C342.1 642.1 340.8 643.9 340.0 645.1 C339.2 646.3 338.7 647.6 338.4 649.1 C338.1 650.6 338.1 652.5 338.2 654.1 C338.3 655.7 338.5 657.4 339.0 658.6 C339.5 659.8 340.3 660.7 341.0 661.3 C341.7 661.9 342.5 662.1 343.2 662.1 C343.9 662.1 344.7 661.9 345.4 661.3 C346.1 660.7 346.9 659.8 347.4 658.6 C347.9 657.4 348.1 655.7 348.2 654.1 C348.3 652.5 348.3 650.6 348.0 649.1 C347.7 647.6 347.2 646.3 346.4 645.1 C345.6 643.9 344.3 642.1 343.2 642.1Z" fill="none" stroke="#ef8d0c" stroke-width="2.5" stroke-linejoin="round"/>
<path d="M338.5 640.6 C337.6 639.9 335.5 640.6 334.1 641.1 C332.8 641.6 331.6 642.4 330.5 643.4 C329.4 644.5 328.2 646.0 327.4 647.3 C326.5 648.7 325.7 650.2 325.4 651.5 C325.1 652.7 325.2 653.9 325.4 654.8 C325.7 655.7 326.1 656.3 326.7 656.8 C327.3 657.2 328.1 657.5 329.0 657.4 C329.9 657.3 331.1 657.1 332.2 656.4 C333.3 655.7 334.5 654.4 335.5 653.2 C336.5 652.0 337.6 650.4 338.3 649.1 C338.9 647.7 339.3 646.3 339.3 644.9 C339.4 643.5 339.4 641.2 338.5 640.6Z" fill="#98c9f1" stroke="#b46d11" stroke-width="3.6" stroke-linejoin="round"/>
<path d="M338.5 640.6 C337.6 639.9 335.5 640.6 334.1 641.1 C332.8 641.6 331.6 642.4 330.5 643.4 C329.4 644.5 328.2 646.0 327.4 647.3 C326.5 648.7 325.7 650.2 325.4 651.5 C325.1 652.7 325.2 653.9 325.4 654.8 C325.7 655.7 326.1 656.3 326.7 656.8 C327.3 657.2 328.1 657.5 329.0 657.4 C329.9 657.3 331.1 657.1 332.2 656.4 C333.3 655.7 334.5 654.4 335.5 653.2 C336.5 652.0 337.6 650.4 338.3 649.1 C338.9 647.7 339.3 646.3 339.3 644.9 C339.4 643.5 339.4 641.2 338.5 640.6Z" fill="none" stroke="#ef8d0c" stroke-width="2.5" stroke-linejoin="round"/>
<path d="M335.6 636.6 C335.3 635.6 333.1 634.9 331.7 634.5 C330.4 634.1 329.0 634.0 327.5 634.2 C325.9 634.3 324.1 634.9 322.6 635.5 C321.2 636.1 319.6 636.9 318.6 637.7 C317.6 638.5 317.0 639.6 316.7 640.4 C316.3 641.3 316.3 642.1 316.6 642.8 C316.8 643.4 317.2 644.1 318.0 644.6 C318.8 645.1 319.9 645.6 321.2 645.7 C322.5 645.7 324.2 645.4 325.7 645.0 C327.3 644.6 329.1 644.0 330.4 643.3 C331.8 642.6 332.9 641.7 333.7 640.5 C334.6 639.4 335.9 637.6 335.6 636.6Z" fill="#98c9f1" stroke="#b46d11" stroke-width="3.6" stroke-linejoin="round"/>
<path d="M335.6 636.6 C335.3 635.6 333.1 634.9 331.7 634.5 C330.4 634.1 329.0 634.0 327.5 634.2 C325.9 634.3 324.1 634.9 322.6 635.5 C321.2 636.1 319.6 636.9 318.6 637.7 C317.6 638.5 317.0 639.6 316.7 640.4 C316.3 641.3 316.3 642.1 316.6 642.8 C316.8 643.4 317.2 644.1 318.0 644.6 C318.8 645.1 319.9 645.6 321.2 645.7 C322.5 645.7 324.2 645.4 325.7 645.0 C327.3 644.6 329.1 644.0 330.4 643.3 C331.8 642.6 332.9 641.7 333.7 640.5 C334.6 639.4 335.9 637.6 335.6 636.6Z" fill="none" stroke="#ef8d0c" stroke-width="2.5" stroke-linejoin="round"/>
<path d="M335.6 631.6 C335.9 630.6 334.6 628.8 333.7 627.7 C332.9 626.5 331.8 625.6 330.4 624.9 C329.1 624.2 327.3 623.6 325.7 623.2 C324.2 622.8 322.5 622.5 321.2 622.5 C319.9 622.6 318.8 623.1 318.0 623.6 C317.2 624.1 316.8 624.8 316.6 625.4 C316.3 626.1 316.3 626.9 316.7 627.8 C317.0 628.6 317.6 629.7 318.6 630.5 C319.6 631.3 321.2 632.1 322.6 632.7 C324.1 633.3 325.9 633.9 327.5 634.0 C329.0 634.2 330.4 634.1 331.7 633.7 C333.1 633.3 335.3 632.6 335.6 631.6Z" fill="#98c9f1" stroke="#b46d11" stroke-width="3.6" stroke-linejoin="round"/>
<path d="M335.6 631.6 C335.9 630.6 334.6 628.8 333.7 627.7 C332.9 626.5 331.8 625.6 330.4 624.9 C329.1 624.2 327.3 623.6 325.7 623.2 C324.2 622.8 322.5 622.5 321.2 622.5 C319.9 622.6 318.8 623.1 318.0 623.6 C317.2 624.1 316.8 624.8 316.6 625.4 C316.3 626.1 316.3 626.9 316.7 627.8 C317.0 628.6 317.6 629.7 318.6 630.5 C319.6 631.3 321.2 632.1 322.6 632.7 C324.1 633.3 325.9 633.9 327.5 634.0 C329.0 634.2 330.4 634.1 331.7 633.7 C333.1 633.3 335.3 632.6 335.6 631.6Z" fill="none" stroke="#ef8d0c" stroke-width="2.5" stroke-linejoin="round"/>
<path d="M338.5 627.6 C339.4 627.0 339.4 624.7 339.3 623.3 C339.3 621.9 338.9 620.5 338.3 619.1 C337.6 617.8 336.5 616.2 335.5 615.0 C334.5 613.8 333.3 612.5 332.2 611.8 C331.1 611.1 329.9 610.9 329.0 610.8 C328.1 610.7 327.3 611.0 326.7 611.4 C326.1 611.9 325.7 612.5 325.4 613.4 C325.2 614.3 325.1 615.5 325.4 616.7 C325.7 618.0 326.5 619.5 327.4 620.9 C328.2 622.2 329.4 623.7 330.5 624.8 C331.6 625.8 332.8 626.6 334.1 627.1 C335.5 627.6 337.6 628.3 338.5 627.6Z" fill="#98c9f1" stroke="#b46d11" stroke-width="3.6" stroke-linejoin="round"/>
<path d="M338.5 627.6 C339.4 627.0 339.4 624.7 339.3 623.3 C339.3 621.9 338.9 620.5 338.3 619.1 C337.6 617.8 336.5 616.2 335.5 615.0 C334.5 613.8 333.3 612.5 332.2 611.8 C331.1 611.1 329.9 610.9 329.0 610.8 C328.1 610.7 327.3 611.0 326.7 611.4 C326.1 611.9 325.7 612.5 325.4 613.4 C325.2 614.3 325.1 615.5 325.4 616.7 C325.7 618.0 326.5 619.5 327.4 620.9 C328.2 622.2 329.4 623.7 330.5 624.8 C331.6 625.8 332.8 626.6 334.1 627.1 C335.5 627.6 337.6 628.3 338.5 627.6Z" fill="none" stroke="#ef8d0c" stroke-width="2.5" stroke-linejoin="round"/>
<path d="M343.2 626.1 C344.3 626.1 345.6 624.3 346.4 623.1 C347.2 621.9 347.7 620.6 348.0 619.1 C348.3 617.6 348.3 615.7 348.2 614.1 C348.1 612.5 347.9 610.8 347.4 609.6 C346.9 608.4 346.1 607.5 345.4 606.9 C344.7 606.3 343.9 606.1 343.2 606.1 C342.5 606.1 341.7 606.3 341.0 606.9 C340.3 607.5 339.5 608.4 339.0 609.6 C338.5 610.8 338.3 612.5 338.2 614.1 C338.1 615.7 338.1 617.6 338.4 619.1 C338.7 620.6 339.2 621.9 340.0 623.1 C340.8 624.3 342.1 626.1 343.2 626.1Z" fill="none" stroke="#ef8d0c" stroke-width="2.5" stroke-linejoin="round"/>
<path d="M347.9 627.6 C348.8 628.3 350.9 627.6 352.3 627.1 C353.6 626.6 354.8 625.8 355.9 624.8 C357.0 623.7 358.2 622.2 359.0 620.9 C359.9 619.5 360.7 618.0 361.0 616.7 C361.3 615.5 361.2 614.3 361.0 613.4 C360.7 612.5 360.3 611.9 359.7 611.4 C359.1 611.0 358.3 610.7 357.4 610.8 C356.5 610.9 355.3 611.1 354.2 611.8 C353.1 612.5 351.9 613.8 350.9 615.0 C349.9 616.2 348.8 617.8 348.1 619.1 C347.5 620.5 347.1 621.9 347.1 623.3 C347.0 624.7 347.0 627.0 347.9 627.6Z" fill="none" stroke="#ef8d0c" stroke-width="2.5" stroke-linejoin="round"/>
<path d="M350.8 631.6 C351.1 632.6 353.3 633.3 354.7 633.7 C356.0 634.1 357.4 634.2 358.9 634.0 C360.5 633.9 362.3 633.3 363.8 632.7 C365.2 632.1 366.8 631.3 367.8 630.5 C368.8 629.7 369.4 628.6 369.7 627.8 C370.1 626.9 370.1 626.1 369.8 625.4 C369.6 624.8 369.2 624.1 368.4 623.6 C367.6 623.1 366.5 622.6 365.2 622.5 C363.9 622.5 362.2 622.8 360.7 623.2 C359.1 623.6 357.3 624.2 356.0 624.9 C354.6 625.6 353.5 626.5 352.7 627.7 C351.8 628.8 350.5 630.6 350.8 631.6Z" fill="none" stroke="#ef8d0c" stroke-width="2.5" stroke-linejoin="round"/>
<path d="M350.8 636.6 C350.5 637.6 351.8 639.4 352.7 640.5 C353.5 641.7 354.6 642.6 356.0 643.3 C357.3 644.0 359.1 644.6 360.7 645.0 C362.2 645.4 363.9 645.7 365.2 645.7 C366.5 645.6 367.6 645.1 368.4 644.6 C369.2 644.1 369.6 643.4 369.8 642.8 C370.1 642.1 370.1 641.3 369.7 640.4 C369.4 639.6 368.8 638.5 367.8 637.7 C366.8 636.9 365.2 636.1 363.8 635.5 C362.3 634.9 360.5 634.3 358.9 634.2 C357.4 634.0 356.0 634.1 354.7 634.5 C353.3 634.9 351.1 635.6 350.8 636.6Z" fill="none" stroke="#ef8d0c" stroke-width="2.5" stroke-linejoin="round"/>
<path d="M347.9 640.6 C347.0 641.2 347.0 643.5 347.1 644.9 C347.1 646.3 347.5 647.7 348.1 649.1 C348.8 650.4 349.9 652.0 350.9 653.2 C351.9 654.4 353.1 655.7 354.2 656.4 C355.3 657.1 356.5 657.3 357.4 657.4 C358.3 657.5 359.1 657.2 359.7 656.8 C360.3 656.3 360.7 655.7 361.0 654.8 C361.2 653.9 361.3 652.7 361.0 651.5 C360.7 650.2 359.9 648.7 359.0 647.3 C358.2 646.0 357.0 644.5 355.9 643.4 C354.8 642.4 353.6 641.6 352.3 641.1 C350.9 640.6 348.8 639.9 347.9 640.6Z" fill="none" stroke="#ef8d0c" stroke-width="2.5" stroke-linejoin="round"/>
<path d="M343.2 642.1 C342.1 642.1 340.8 643.9 340.0 645.1 C339.2 646.3 338.7 647.6 338.4 649.1 C338.1 650.6 338.1 652.5 338.2 654.1 C338.3 655.7 338.5 657.4 339.0 658.6 C339.5 659.8 340.3 660.7 341.0 661.3 C341.7 661.9 342.5 662.1 343.2 662.1 C343.9 662.1 344.7 661.9 345.4 661.3 C346.1 660.7 346.9 659.8 347.4 658.6 C347.9 657.4 348.1 655.7 348.2 654.1 C348.3 652.5 348.3 650.6 348.0 649.1 C347.7 647.6 347.2 646.3 346.4 645.1 C345.6 643.9 344.3 642.1 343.2 642.1Z" fill="none" stroke="#ef8d0c" stroke-width="2.5" stroke-linejoin="round"/>
<path d="M338.5 640.6 C337.6 639.9 335.5 640.6 334.1 641.1 C332.8 641.6 331.6 642.4 330.5 643.4 C329.4 644.5 328.2 646.0 327.4 647.3 C326.5 648.7 325.7 650.2 325.4 651.5 C325.1 652.7 325.2 653.9 325.4 654.8 C325.7 655.7 326.1 656.3 326.7 656.8 C327.3 657.2 328.1 657.5 329.0 657.4 C329.9 657.3 331.1 657.1 332.2 656.4 C333.3 655.7 334.5 654.4 335.5 653.2 C336.5 652.0 337.6 650.4 338.3 649.1 C338.9 647.7 339.3 646.3 339.3 644.9 C339.4 643.5 339.4 641.2 338.5 640.6Z" fill="none" stroke="#ef8d0c" stroke-width="2.5" stroke-linejoin="round"/>
<path d="M335.6 636.6 C335.3 635.6 333.1 634.9 331.7 634.5 C330.4 634.1 329.0 634.0 327.5 634.2 C325.9 634.3 324.1 634.9 322.6 635.5 C321.2 636.1 319.6 636.9 318.6 637.7 C317.6 638.5 317.0 639.6 316.7 640.4 C316.3 641.3 316.3 642.1 316.6 642.8 C316.8 643.4 317.2 644.1 318.0 644.6 C318.8 645.1 319.9 645.6 321.2 645.7 C322.5 645.7 324.2 645.4 325.7 645.0 C327.3 644.6 329.1 644.0 330.4 643.3 C331.8 642.6 332.9 641.7 333.7 640.5 C334.6 639.4 335.9 637.6 335.6 636.6Z" fill="none" stroke="#ef8d0c" stroke-width="2.5" stroke-linejoin="round"/>
<path d="M335.6 631.6 C335.9 630.6 334.6 628.8 333.7 627.7 C332.9 626.5 331.8 625.6 330.4 624.9 C329.1 624.2 327.3 623.6 325.7 623.2 C324.2 622.8 322.5 622.5 321.2 622.5 C319.9 622.6 318.8 623.1 318.0 623.6 C317.2 624.1 316.8 624.8 316.6 625.4 C316.3 626.1 316.3 626.9 316.7 627.8 C317.0 628.6 317.6 629.7 318.6 630.5 C319.6 631.3 321.2 632.1 322.6 632.7 C324.1 633.3 325.9 633.9 327.5 634.0 C329.0 634.2 330.4 634.1 331.7 633.7 C333.1 633.3 335.3 632.6 335.6 631.6Z" fill="none" stroke="#ef8d0c" stroke-width="2.5" stroke-linejoin="round"/>
<path d="M338.5 627.6 C339.4 627.0 339.4 624.7 339.3 623.3 C339.3 621.9 338.9 620.5 338.3 619.1 C337.6 617.8 336.5 616.2 335.5 615.0 C334.5 613.8 333.3 612.5 332.2 611.8 C331.1 611.1 329.9 610.9 329.0 610.8 C328.1 610.7 327.3 611.0 326.7 611.4 C326.1 611.9 325.7 612.5 325.4 613.4 C325.2 614.3 325.1 615.5 325.4 616.7 C325.7 618.0 326.5 619.5 327.4 620.9 C328.2 622.2 329.4 623.7 330.5 624.8 C331.6 625.8 332.8 626.6 334.1 627.1 C335.5 627.6 337.6 628.3 338.5 627.6Z" fill="none" stroke="#ef8d0c" stroke-width="2.5" stroke-linejoin="round"/>
<circle cx="343.2" cy="634.1" r="8.3" fill="#98c9f1" stroke="#bab308" stroke-width="4"/>
<circle cx="343.2" cy="634.1" r="8.3" fill="none" stroke="#f7ee00" stroke-width="3"/>
<path d="M425.9 596.2 Q429.2 586.0 436.2 583.6 Q441.6 588.7 440.5 599.4 Q451.0 597.2 456.7 602.0 Q455.0 609.2 445.2 613.6 Q452.3 621.6 450.9 628.9 Q443.8 631.0 435.1 624.8 Q431.8 635.0 424.8 637.4 Q419.4 632.3 420.5 621.6 Q410.0 623.8 404.3 619.0 Q406.0 611.8 415.8 607.4 Q408.7 599.4 410.1 592.1 Q417.2 590.0 425.9 596.2Z" fill="#7f9cba" stroke="#7f9cba" stroke-width="14.2" stroke-linejoin="round" stroke-linecap="round"/>
<path d="M431.6 631.8 L438.0 630.8 L446.5 731.0 L433.7 732.0Z" fill="#7f9cba" stroke="#7f9cba" stroke-width="14.2" stroke-linejoin="round" stroke-linecap="round"/>
<path d="M425.9 596.2 Q429.2 586.0 436.2 583.6 Q441.6 588.7 440.5 599.4 Q451.0 597.2 456.7 602.0 Q455.0 609.2 445.2 613.6 Q452.3 621.6 450.9 628.9 Q443.8 631.0 435.1 624.8 Q431.8 635.0 424.8 637.4 Q419.4 632.3 420.5 621.6 Q410.0 623.8 404.3 619.0 Q406.0 611.8 415.8 607.4 Q408.7 599.4 410.1 592.1 Q417.2 590.0 425.9 596.2Z" fill="#98c9f1" stroke="#98c9f1" stroke-width="12.0" stroke-linejoin="round" stroke-linecap="round"/>
<path d="M431.6 631.8 L438.0 630.8 L446.5 731.0 L433.7 732.0Z" fill="#98c9f1" stroke="#98c9f1" stroke-width="12.0" stroke-linejoin="round" stroke-linecap="round"/>
<path d="M431.6 631.8 L438.0 630.8 L446.5 731.0 L433.7 732.0Z" fill="#98c9f1" stroke="#166018" stroke-width="4.0" stroke-linejoin="round" stroke-linecap="butt"/>
<path d="M431.6 631.8 L438.0 630.8 L446.5 731.0 L433.7 732.0Z" fill="none" stroke="#137a17" stroke-width="2.8" stroke-linejoin="round" stroke-linecap="butt"/>
<path d="M425.9 596.2 Q429.2 586.0 436.2 583.6 Q441.6 588.7 440.5 599.4 Q451.0 597.2 456.7 602.0 Q455.0 609.2 445.2 613.6 Q452.3 621.6 450.9 628.9 Q443.8 631.0 435.1 624.8 Q431.8 635.0 424.8 637.4 Q419.4 632.3 420.5 621.6 Q410.0 623.8 404.3 619.0 Q406.0 611.8 415.8 607.4 Q408.7 599.4 410.1 592.1 Q417.2 590.0 425.9 596.2Z" fill="#98c9f1" stroke="#bab308" stroke-width="3.8" stroke-linejoin="round" stroke-linecap="round"/>
<path d="M425.9 596.2 Q429.2 586.0 436.2 583.6 Q441.6 588.7 440.5 599.4 Q451.0 597.2 456.7 602.0 Q455.0 609.2 445.2 613.6 Q452.3 621.6 450.9 628.9 Q443.8 631.0 435.1 624.8 Q431.8 635.0 424.8 637.4 Q419.4 632.3 420.5 621.6 Q410.0 623.8 404.3 619.0 Q406.0 611.8 415.8 607.4 Q408.7 599.4 410.1 592.1 Q417.2 590.0 425.9 596.2Z" fill="none" stroke="#f7ee00" stroke-width="2.6" stroke-linejoin="round" stroke-linecap="round"/>
<path d="M441.9 610.5 C441.9 612.0 443.1 613.9 442.6 615.1 C442.1 616.3 439.9 616.8 438.9 617.9 C437.8 618.9 437.3 621.1 436.1 621.6 C434.9 622.1 433.0 620.9 431.5 620.9 C430.0 620.9 428.1 622.1 426.9 621.6 C425.7 621.1 425.2 618.9 424.1 617.9 C423.1 616.8 420.9 616.3 420.4 615.1 C419.9 613.9 421.1 612.0 421.1 610.5 C421.1 609.0 419.9 607.1 420.4 605.9 C420.9 604.7 423.1 604.2 424.1 603.1 C425.2 602.1 425.7 599.9 426.9 599.4 C428.1 598.9 430.0 600.1 431.5 600.1 C433.0 600.1 434.9 598.9 436.1 599.4 C437.3 599.9 437.8 602.1 438.9 603.1 C439.9 604.2 442.1 604.7 442.6 605.9 C443.1 607.1 441.9 609.0 441.9 610.5Z" fill="#ef8d0c" stroke="#d27a08" stroke-width="0.6"/>
<path d="M235.5 732.3 C227.2 731.0 224.6 729.5 221.3 726.6 C218.0 723.7 216.4 718.6 215.6 715.0 C214.8 711.4 215.4 707.5 216.5 705.0 C217.6 702.5 222.4 699.7 222.4 699.7 C222.4 699.7 220.7 691.6 220.8 688.1 C220.9 684.6 221.7 681.5 223.2 679.0 C224.7 676.5 227.7 674.2 229.9 673.1 C232.1 672.0 236.5 672.3 236.5 672.3 C236.5 672.3 236.9 667.9 238.2 665.7 C239.4 663.5 241.8 660.5 244.0 659.0 C246.2 657.5 251.4 656.6 251.4 656.6 C251.4 656.6 256.2 657.7 258.1 656.6 C260.0 655.5 260.8 651.8 263.0 649.9 C265.2 648.0 268.5 646.0 271.3 645.0 C274.1 644.0 276.9 643.6 280.0 643.8 C283.1 644.0 286.8 644.3 290.0 646.0 C293.2 647.7 297.0 650.2 299.5 654.2 C302.0 658.2 304.2 664.9 305.2 669.8 C306.1 674.6 305.2 683.3 305.2 683.3 C305.2 683.3 312.0 683.5 315.0 685.0 C318.0 686.5 321.1 689.0 323.0 692.0 C324.9 695.0 326.2 699.0 326.5 703.0 C326.8 707.0 326.4 712.0 325.0 716.0 C323.6 720.0 321.3 724.1 318.0 727.0 C314.7 729.9 312.8 732.2 305.0 733.5 C297.2 734.8 282.6 734.7 271.0 734.5 C259.4 734.3 243.8 733.6 235.5 732.3Z" fill="#7f9cba" stroke="#7f9cba" stroke-width="14.2" stroke-linejoin="round" stroke-linecap="round"/>
<path d="M235.5 732.3 C227.2 731.0 224.6 729.5 221.3 726.6 C218.0 723.7 216.4 718.6 215.6 715.0 C214.8 711.4 215.4 707.5 216.5 705.0 C217.6 702.5 222.4 699.7 222.4 699.7 C222.4 699.7 220.7 691.6 220.8 688.1 C220.9 684.6 221.7 681.5 223.2 679.0 C224.7 676.5 227.7 674.2 229.9 673.1 C232.1 672.0 236.5 672.3 236.5 672.3 C236.5 672.3 236.9 667.9 238.2 665.7 C239.4 663.5 241.8 660.5 244.0 659.0 C246.2 657.5 251.4 656.6 251.4 656.6 C251.4 656.6 256.2 657.7 258.1 656.6 C260.0 655.5 260.8 651.8 263.0 649.9 C265.2 648.0 268.5 646.0 271.3 645.0 C274.1 644.0 276.9 643.6 280.0 643.8 C283.1 644.0 286.8 644.3 290.0 646.0 C293.2 647.7 297.0 650.2 299.5 654.2 C302.0 658.2 304.2 664.9 305.2 669.8 C306.1 674.6 305.2 683.3 305.2 683.3 C305.2 683.3 312.0 683.5 315.0 685.0 C318.0 686.5 321.1 689.0 323.0 692.0 C324.9 695.0 326.2 699.0 326.5 703.0 C326.8 707.0 326.4 712.0 325.0 716.0 C323.6 720.0 321.3 724.1 318.0 727.0 C314.7 729.9 312.8 732.2 305.0 733.5 C297.2 734.8 282.6 734.7 271.0 734.5 C259.4 734.3 243.8 733.6 235.5 732.3Z" fill="#98c9f1" stroke="#98c9f1" stroke-width="12.0" stroke-linejoin="round" stroke-linecap="round"/>
<path d="M235.5 732.3 C227.2 731.0 224.6 729.5 221.3 726.6 C218.0 723.7 216.4 718.6 215.6 715.0 C214.8 711.4 215.4 707.5 216.5 705.0 C217.6 702.5 222.4 699.7 222.4 699.7 C222.4 699.7 220.7 691.6 220.8 688.1 C220.9 684.6 221.7 681.5 223.2 679.0 C224.7 676.5 227.7 674.2 229.9 673.1 C232.1 672.0 236.5 672.3 236.5 672.3 C236.5 672.3 236.9 667.9 238.2 665.7 C239.4 663.5 241.8 660.5 244.0 659.0 C246.2 657.5 251.4 656.6 251.4 656.6 C251.4 656.6 256.2 657.7 258.1 656.6 C260.0 655.5 260.8 651.8 263.0 649.9 C265.2 648.0 268.5 646.0 271.3 645.0 C274.1 644.0 276.9 643.6 280.0 643.8 C283.1 644.0 286.8 644.3 290.0 646.0 C293.2 647.7 297.0 650.2 299.5 654.2 C302.0 658.2 304.2 664.9 305.2 669.8 C306.1 674.6 305.2 683.3 305.2 683.3 C305.2 683.3 312.0 683.5 315.0 685.0 C318.0 686.5 321.1 689.0 323.0 692.0 C324.9 695.0 326.2 699.0 326.5 703.0 C326.8 707.0 326.4 712.0 325.0 716.0 C323.6 720.0 321.3 724.1 318.0 727.0 C314.7 729.9 312.8 732.2 305.0 733.5 C297.2 734.8 282.6 734.7 271.0 734.5 C259.4 734.3 243.8 733.6 235.5 732.3Z" fill="#98c9f1" stroke="#166018" stroke-width="5.2" stroke-linejoin="round" stroke-linecap="round"/>
<path d="M235.5 732.3 C227.2 731.0 224.6 729.5 221.3 726.6 C218.0 723.7 216.4 718.6 215.6 715.0 C214.8 711.4 215.4 707.5 216.5 705.0 C217.6 702.5 222.4 699.7 222.4 699.7 C222.4 699.7 220.7 691.6 220.8 688.1 C220.9 684.6 221.7 681.5 223.2 679.0 C224.7 676.5 227.7 674.2 229.9 673.1 C232.1 672.0 236.5 672.3 236.5 672.3 C236.5 672.3 236.9 667.9 238.2 665.7 C239.4 663.5 241.8 660.5 244.0 659.0 C246.2 657.5 251.4 656.6 251.4 656.6 C251.4 656.6 256.2 657.7 258.1 656.6 C260.0 655.5 260.8 651.8 263.0 649.9 C265.2 648.0 268.5 646.0 271.3 645.0 C274.1 644.0 276.9 643.6 280.0 643.8 C283.1 644.0 286.8 644.3 290.0 646.0 C293.2 647.7 297.0 650.2 299.5 654.2 C302.0 658.2 304.2 664.9 305.2 669.8 C306.1 674.6 305.2 683.3 305.2 683.3 C305.2 683.3 312.0 683.5 315.0 685.0 C318.0 686.5 321.1 689.0 323.0 692.0 C324.9 695.0 326.2 699.0 326.5 703.0 C326.8 707.0 326.4 712.0 325.0 716.0 C323.6 720.0 321.3 724.1 318.0 727.0 C314.7 729.9 312.8 732.2 305.0 733.5 C297.2 734.8 282.6 734.7 271.0 734.5 C259.4 734.3 243.8 733.6 235.5 732.3Z" fill="none" stroke="#137a17" stroke-width="4.0" stroke-linejoin="round" stroke-linecap="round"/>
<path d="M241.2 729.5 C236.0 727.8 234.5 724.2 233.0 721.0 C231.5 717.8 231.5 713.0 232.0 710.0 C232.5 707.0 234.0 704.6 236.0 703.0 C238.0 701.4 244.0 700.5 244.0 700.5 C244.0 700.5 243.3 692.4 244.0 688.9 C244.7 685.4 246.0 682.0 248.1 679.8 C250.2 677.6 253.6 676.1 256.4 675.6 C259.2 675.1 261.9 675.2 264.7 676.5 C267.5 677.8 273.0 683.1 273.0 683.1 C273.0 683.1 278.4 680.5 281.0 681.0 C283.6 681.5 286.5 683.8 288.5 686.0 C290.5 688.2 292.2 691.0 293.0 694.0 C293.8 697.0 293.1 701.6 293.0 704.0 C292.9 706.4 292.4 708.2 292.4 708.2 C292.4 708.2 296.8 711.0 298.0 713.0 C299.2 715.0 299.7 717.7 299.5 720.0 C299.3 722.3 298.7 725.2 296.6 727.0 C294.5 728.8 292.4 730.3 287.0 731.0 C281.6 731.7 271.6 731.2 264.0 731.0 C256.4 730.8 246.4 731.2 241.2 729.5Z" fill="#98c9f1" stroke="#20a226" stroke-width="4.8" stroke-linejoin="round" stroke-linecap="round"/>
<path d="M241.2 729.5 C236.0 727.8 234.5 724.2 233.0 721.0 C231.5 717.8 231.5 713.0 232.0 710.0 C232.5 707.0 234.0 704.6 236.0 703.0 C238.0 701.4 244.0 700.5 244.0 700.5 C244.0 700.5 243.3 692.4 244.0 688.9 C244.7 685.4 246.0 682.0 248.1 679.8 C250.2 677.6 253.6 676.1 256.4 675.6 C259.2 675.1 261.9 675.2 264.7 676.5 C267.5 677.8 273.0 683.1 273.0 683.1 C273.0 683.1 278.4 680.5 281.0 681.0 C283.6 681.5 286.5 683.8 288.5 686.0 C290.5 688.2 292.2 691.0 293.0 694.0 C293.8 697.0 293.1 701.6 293.0 704.0 C292.9 706.4 292.4 708.2 292.4 708.2 C292.4 708.2 296.8 711.0 298.0 713.0 C299.2 715.0 299.7 717.7 299.5 720.0 C299.3 722.3 298.7 725.2 296.6 727.0 C294.5 728.8 292.4 730.3 287.0 731.0 C281.6 731.7 271.6 731.2 264.0 731.0 C256.4 730.8 246.4 731.2 241.2 729.5Z" fill="none" stroke="#22d62a" stroke-width="3.6" stroke-linejoin="round" stroke-linecap="round"/>
<path d="M379.0 694.2 C380.4 694.2 382.0 692.5 383.2 691.2 C384.4 689.9 385.5 688.0 386.2 686.2 C386.9 684.4 387.2 682.0 387.2 680.2 C387.2 678.4 386.9 676.6 386.2 675.2 C385.5 673.8 384.2 672.4 383.0 671.7 C381.8 671.0 380.3 670.9 379.0 670.9 C377.7 670.9 376.2 671.0 375.0 671.7 C373.8 672.4 372.5 673.8 371.8 675.2 C371.1 676.6 370.8 678.4 370.8 680.2 C370.8 682.0 371.1 684.4 371.8 686.2 C372.5 688.0 373.6 689.9 374.8 691.2 C376.0 692.5 377.6 694.2 379.0 694.2Z" fill="#7f9cba" stroke="#7f9cba" stroke-width="15.2" stroke-linejoin="round" stroke-linecap="round"/>
<path d="M383.9 696.3 C384.9 697.2 387.2 697.2 389.0 697.1 C390.8 697.0 392.9 696.5 394.7 695.7 C396.5 694.9 398.4 693.4 399.6 692.1 C400.9 690.9 402.0 689.4 402.5 687.9 C403.0 686.4 403.0 684.5 402.7 683.2 C402.3 681.8 401.4 680.7 400.4 679.8 C399.5 678.8 398.4 677.9 397.0 677.5 C395.7 677.2 393.8 677.2 392.3 677.7 C390.8 678.2 389.3 679.3 388.1 680.6 C386.8 681.8 385.3 683.7 384.5 685.5 C383.7 687.3 383.2 689.4 383.1 691.2 C383.0 693.0 383.0 695.3 383.9 696.3Z" fill="#7f9cba" stroke="#7f9cba" stroke-width="15.2" stroke-linejoin="round" stroke-linecap="round"/>
<path d="M386.0 701.2 C386.0 702.6 387.7 704.2 389.0 705.4 C390.3 706.6 392.2 707.7 394.0 708.4 C395.8 709.1 398.2 709.4 400.0 709.4 C401.8 709.4 403.6 709.1 405.0 708.4 C406.4 707.7 407.8 706.4 408.5 705.2 C409.2 704.0 409.3 702.5 409.3 701.2 C409.3 699.9 409.2 698.4 408.5 697.2 C407.8 696.0 406.4 694.7 405.0 694.0 C403.6 693.3 401.8 693.0 400.0 693.0 C398.2 693.0 395.8 693.3 394.0 694.0 C392.2 694.7 390.3 695.8 389.0 697.0 C387.7 698.2 386.0 699.8 386.0 701.2Z" fill="#7f9cba" stroke="#7f9cba" stroke-width="15.2" stroke-linejoin="round" stroke-linecap="round"/>
<path d="M383.9 706.1 C383.0 707.1 383.0 709.4 383.1 711.2 C383.2 713.0 383.7 715.1 384.5 716.9 C385.3 718.7 386.8 720.6 388.1 721.8 C389.3 723.1 390.8 724.2 392.3 724.7 C393.8 725.2 395.7 725.2 397.0 724.9 C398.4 724.5 399.5 723.6 400.4 722.6 C401.4 721.7 402.3 720.6 402.7 719.2 C403.0 717.9 403.0 716.0 402.5 714.5 C402.0 713.0 400.9 711.5 399.6 710.3 C398.4 709.0 396.5 707.5 394.7 706.7 C392.9 705.9 390.8 705.4 389.0 705.3 C387.2 705.2 384.9 705.2 383.9 706.1Z" fill="#7f9cba" stroke="#7f9cba" stroke-width="15.2" stroke-linejoin="round" stroke-linecap="round"/>
<path d="M379.0 708.2 C377.6 708.2 376.0 709.9 374.8 711.2 C373.6 712.5 372.5 714.4 371.8 716.2 C371.1 718.0 370.8 720.4 370.8 722.2 C370.8 724.0 371.1 725.8 371.8 727.2 C372.5 728.6 373.8 730.0 375.0 730.7 C376.2 731.4 377.7 731.5 379.0 731.5 C380.3 731.5 381.8 731.4 383.0 730.7 C384.2 730.0 385.5 728.6 386.2 727.2 C386.9 725.8 387.2 724.0 387.2 722.2 C387.2 720.4 386.9 718.0 386.2 716.2 C385.5 714.4 384.4 712.5 383.2 711.2 C382.0 709.9 380.4 708.2 379.0 708.2Z" fill="#7f9cba" stroke="#7f9cba" stroke-width="15.2" stroke-linejoin="round" stroke-linecap="round"/>
<path d="M374.1 706.1 C373.1 705.2 370.8 705.2 369.0 705.3 C367.2 705.4 365.1 705.9 363.3 706.7 C361.5 707.5 359.6 709.0 358.4 710.3 C357.1 711.5 356.0 713.0 355.5 714.5 C355.0 716.0 355.0 717.9 355.3 719.2 C355.7 720.6 356.6 721.7 357.6 722.6 C358.5 723.6 359.6 724.5 361.0 724.9 C362.3 725.2 364.2 725.2 365.7 724.7 C367.2 724.2 368.7 723.1 369.9 721.8 C371.2 720.6 372.7 718.7 373.5 716.9 C374.3 715.1 374.8 713.0 374.9 711.2 C375.0 709.4 375.0 707.1 374.1 706.1Z" fill="#7f9cba" stroke="#7f9cba" stroke-width="15.2" stroke-linejoin="round" stroke-linecap="round"/>
<path d="M372.0 701.2 C372.0 699.8 370.3 698.2 369.0 697.0 C367.7 695.8 365.8 694.7 364.0 694.0 C362.2 693.3 359.8 693.0 358.0 693.0 C356.2 693.0 354.4 693.3 353.0 694.0 C351.6 694.7 350.2 696.0 349.5 697.2 C348.8 698.4 348.7 699.9 348.7 701.2 C348.7 702.5 348.8 704.0 349.5 705.2 C350.2 706.4 351.6 707.7 353.0 708.4 C354.4 709.1 356.2 709.4 358.0 709.4 C359.8 709.4 362.2 709.1 364.0 708.4 C365.8 707.7 367.7 706.6 369.0 705.4 C370.3 704.2 372.0 702.6 372.0 701.2Z" fill="#7f9cba" stroke="#7f9cba" stroke-width="15.2" stroke-linejoin="round" stroke-linecap="round"/>
<path d="M374.1 696.3 C375.0 695.3 375.0 693.0 374.9 691.2 C374.8 689.4 374.3 687.3 373.5 685.5 C372.7 683.7 371.2 681.8 369.9 680.6 C368.7 679.3 367.2 678.2 365.7 677.7 C364.2 677.2 362.3 677.2 361.0 677.5 C359.6 677.9 358.5 678.8 357.6 679.8 C356.6 680.7 355.7 681.8 355.3 683.2 C355.0 684.5 355.0 686.4 355.5 687.9 C356.0 689.4 357.1 690.9 358.4 692.1 C359.6 693.4 361.5 694.9 363.3 695.7 C365.1 696.5 367.2 697.0 369.0 697.1 C370.8 697.2 373.1 697.2 374.1 696.3Z" fill="#7f9cba" stroke="#7f9cba" stroke-width="15.2" stroke-linejoin="round" stroke-linecap="round"/>
<path d="M379.0 694.2 C380.4 694.2 382.0 692.5 383.2 691.2 C384.4 689.9 385.5 688.0 386.2 686.2 C386.9 684.4 387.2 682.0 387.2 680.2 C387.2 678.4 386.9 676.6 386.2 675.2 C385.5 673.8 384.2 672.4 383.0 671.7 C381.8 671.0 380.3 670.9 379.0 670.9 C377.7 670.9 376.2 671.0 375.0 671.7 C373.8 672.4 372.5 673.8 371.8 675.2 C371.1 676.6 370.8 678.4 370.8 680.2 C370.8 682.0 371.1 684.4 371.8 686.2 C372.5 688.0 373.6 689.9 374.8 691.2 C376.0 692.5 377.6 694.2 379.0 694.2Z" fill="#98c9f1" stroke="#98c9f1" stroke-width="13.0" stroke-linejoin="round" stroke-linecap="round"/>
<path d="M383.9 696.3 C384.9 697.2 387.2 697.2 389.0 697.1 C390.8 697.0 392.9 696.5 394.7 695.7 C396.5 694.9 398.4 693.4 399.6 692.1 C400.9 690.9 402.0 689.4 402.5 687.9 C403.0 686.4 403.0 684.5 402.7 683.2 C402.3 681.8 401.4 680.7 400.4 679.8 C399.5 678.8 398.4 677.9 397.0 677.5 C395.7 677.2 393.8 677.2 392.3 677.7 C390.8 678.2 389.3 679.3 388.1 680.6 C386.8 681.8 385.3 683.7 384.5 685.5 C383.7 687.3 383.2 689.4 383.1 691.2 C383.0 693.0 383.0 695.3 383.9 696.3Z" fill="#98c9f1" stroke="#98c9f1" stroke-width="13.0" stroke-linejoin="round" stroke-linecap="round"/>
<path d="M386.0 701.2 C386.0 702.6 387.7 704.2 389.0 705.4 C390.3 706.6 392.2 707.7 394.0 708.4 C395.8 709.1 398.2 709.4 400.0 709.4 C401.8 709.4 403.6 709.1 405.0 708.4 C406.4 707.7 407.8 706.4 408.5 705.2 C409.2 704.0 409.3 702.5 409.3 701.2 C409.3 699.9 409.2 698.4 408.5 697.2 C407.8 696.0 406.4 694.7 405.0 694.0 C403.6 693.3 401.8 693.0 400.0 693.0 C398.2 693.0 395.8 693.3 394.0 694.0 C392.2 694.7 390.3 695.8 389.0 697.0 C387.7 698.2 386.0 699.8 386.0 701.2Z" fill="#98c9f1" stroke="#98c9f1" stroke-width="13.0" stroke-linejoin="round" stroke-linecap="round"/>
<path d="M383.9 706.1 C383.0 707.1 383.0 709.4 383.1 711.2 C383.2 713.0 383.7 715.1 384.5 716.9 C385.3 718.7 386.8 720.6 388.1 721.8 C389.3 723.1 390.8 724.2 392.3 724.7 C393.8 725.2 395.7 725.2 397.0 724.9 C398.4 724.5 399.5 723.6 400.4 722.6 C401.4 721.7 402.3 720.6 402.7 719.2 C403.0 717.9 403.0 716.0 402.5 714.5 C402.0 713.0 400.9 711.5 399.6 710.3 C398.4 709.0 396.5 707.5 394.7 706.7 C392.9 705.9 390.8 705.4 389.0 705.3 C387.2 705.2 384.9 705.2 383.9 706.1Z" fill="#98c9f1" stroke="#98c9f1" stroke-width="13.0" stroke-linejoin="round" stroke-linecap="round"/>
<path d="M379.0 708.2 C377.6 708.2 376.0 709.9 374.8 711.2 C373.6 712.5 372.5 714.4 371.8 716.2 C371.1 718.0 370.8 720.4 370.8 722.2 C370.8 724.0 371.1 725.8 371.8 727.2 C372.5 728.6 373.8 730.0 375.0 730.7 C376.2 731.4 377.7 731.5 379.0 731.5 C380.3 731.5 381.8 731.4 383.0 730.7 C384.2 730.0 385.5 728.6 386.2 727.2 C386.9 725.8 387.2 724.0 387.2 722.2 C387.2 720.4 386.9 718.0 386.2 716.2 C385.5 714.4 384.4 712.5 383.2 711.2 C382.0 709.9 380.4 708.2 379.0 708.2Z" fill="#98c9f1" stroke="#98c9f1" stroke-width="13.0" stroke-linejoin="round" stroke-linecap="round"/>
<path d="M374.1 706.1 C373.1 705.2 370.8 705.2 369.0 705.3 C367.2 705.4 365.1 705.9 363.3 706.7 C361.5 707.5 359.6 709.0 358.4 710.3 C357.1 711.5 356.0 713.0 355.5 714.5 C355.0 716.0 355.0 717.9 355.3 719.2 C355.7 720.6 356.6 721.7 357.6 722.6 C358.5 723.6 359.6 724.5 361.0 724.9 C362.3 725.2 364.2 725.2 365.7 724.7 C367.2 724.2 368.7 723.1 369.9 721.8 C371.2 720.6 372.7 718.7 373.5 716.9 C374.3 715.1 374.8 713.0 374.9 711.2 C375.0 709.4 375.0 707.1 374.1 706.1Z" fill="#98c9f1" stroke="#98c9f1" stroke-width="13.0" stroke-linejoin="round" stroke-linecap="round"/>
<path d="M372.0 701.2 C372.0 699.8 370.3 698.2 369.0 697.0 C367.7 695.8 365.8 694.7 364.0 694.0 C362.2 693.3 359.8 693.0 358.0 693.0 C356.2 693.0 354.4 693.3 353.0 694.0 C351.6 694.7 350.2 696.0 349.5 697.2 C348.8 698.4 348.7 699.9 348.7 701.2 C348.7 702.5 348.8 704.0 349.5 705.2 C350.2 706.4 351.6 707.7 353.0 708.4 C354.4 709.1 356.2 709.4 358.0 709.4 C359.8 709.4 362.2 709.1 364.0 708.4 C365.8 707.7 367.7 706.6 369.0 705.4 C370.3 704.2 372.0 702.6 372.0 701.2Z" fill="#98c9f1" stroke="#98c9f1" stroke-width="13.0" stroke-linejoin="round" stroke-linecap="round"/>
<path d="M374.1 696.3 C375.0 695.3 375.0 693.0 374.9 691.2 C374.8 689.4 374.3 687.3 373.5 685.5 C372.7 683.7 371.2 681.8 369.9 680.6 C368.7 679.3 367.2 678.2 365.7 677.7 C364.2 677.2 362.3 677.2 361.0 677.5 C359.6 677.9 358.5 678.8 357.6 679.8 C356.6 680.7 355.7 681.8 355.3 683.2 C355.0 684.5 355.0 686.4 355.5 687.9 C356.0 689.4 357.1 690.9 358.4 692.1 C359.6 693.4 361.5 694.9 363.3 695.7 C365.1 696.5 367.2 697.0 369.0 697.1 C370.8 697.2 373.1 697.2 374.1 696.3Z" fill="#98c9f1" stroke="#98c9f1" stroke-width="13.0" stroke-linejoin="round" stroke-linecap="round"/>
<path d="M379.0 694.2 C380.4 694.2 382.0 692.5 383.2 691.2 C384.4 689.9 385.5 688.0 386.2 686.2 C386.9 684.4 387.2 682.0 387.2 680.2 C387.2 678.4 386.9 676.6 386.2 675.2 C385.5 673.8 384.2 672.4 383.0 671.7 C381.8 671.0 380.3 670.9 379.0 670.9 C377.7 670.9 376.2 671.0 375.0 671.7 C373.8 672.4 372.5 673.8 371.8 675.2 C371.1 676.6 370.8 678.4 370.8 680.2 C370.8 682.0 371.1 684.4 371.8 686.2 C372.5 688.0 373.6 689.9 374.8 691.2 C376.0 692.5 377.6 694.2 379.0 694.2Z" fill="#98c9f1" stroke="#2a4799" stroke-width="4.6" stroke-linejoin="round"/>
<path d="M379.0 694.2 C380.4 694.2 382.0 692.5 383.2 691.2 C384.4 689.9 385.5 688.0 386.2 686.2 C386.9 684.4 387.2 682.0 387.2 680.2 C387.2 678.4 386.9 676.6 386.2 675.2 C385.5 673.8 384.2 672.4 383.0 671.7 C381.8 671.0 380.3 670.9 379.0 670.9 C377.7 670.9 376.2 671.0 375.0 671.7 C373.8 672.4 372.5 673.8 371.8 675.2 C371.1 676.6 370.8 678.4 370.8 680.2 C370.8 682.0 371.1 684.4 371.8 686.2 C372.5 688.0 373.6 689.9 374.8 691.2 C376.0 692.5 377.6 694.2 379.0 694.2Z" fill="none" stroke="#2f57c9" stroke-width="3.5" stroke-linejoin="round"/>
<path d="M383.9 696.3 C384.9 697.2 387.2 697.2 389.0 697.1 C390.8 697.0 392.9 696.5 394.7 695.7 C396.5 694.9 398.4 693.4 399.6 692.1 C400.9 690.9 402.0 689.4 402.5 687.9 C403.0 686.4 403.0 684.5 402.7 683.2 C402.3 681.8 401.4 680.7 400.4 679.8 C399.5 678.8 398.4 677.9 397.0 677.5 C395.7 677.2 393.8 677.2 392.3 677.7 C390.8 678.2 389.3 679.3 388.1 680.6 C386.8 681.8 385.3 683.7 384.5 685.5 C383.7 687.3 383.2 689.4 383.1 691.2 C383.0 693.0 383.0 695.3 383.9 696.3Z" fill="#98c9f1" stroke="#2a4799" stroke-width="4.6" stroke-linejoin="round"/>
<path d="M383.9 696.3 C384.9 697.2 387.2 697.2 389.0 697.1 C390.8 697.0 392.9 696.5 394.7 695.7 C396.5 694.9 398.4 693.4 399.6 692.1 C400.9 690.9 402.0 689.4 402.5 687.9 C403.0 686.4 403.0 684.5 402.7 683.2 C402.3 681.8 401.4 680.7 400.4 679.8 C399.5 678.8 398.4 677.9 397.0 677.5 C395.7 677.2 393.8 677.2 392.3 677.7 C390.8 678.2 389.3 679.3 388.1 680.6 C386.8 681.8 385.3 683.7 384.5 685.5 C383.7 687.3 383.2 689.4 383.1 691.2 C383.0 693.0 383.0 695.3 383.9 696.3Z" fill="none" stroke="#2f57c9" stroke-width="3.5" stroke-linejoin="round"/>
<path d="M386.0 701.2 C386.0 702.6 387.7 704.2 389.0 705.4 C390.3 706.6 392.2 707.7 394.0 708.4 C395.8 709.1 398.2 709.4 400.0 709.4 C401.8 709.4 403.6 709.1 405.0 708.4 C406.4 707.7 407.8 706.4 408.5 705.2 C409.2 704.0 409.3 702.5 409.3 701.2 C409.3 699.9 409.2 698.4 408.5 697.2 C407.8 696.0 406.4 694.7 405.0 694.0 C403.6 693.3 401.8 693.0 400.0 693.0 C398.2 693.0 395.8 693.3 394.0 694.0 C392.2 694.7 390.3 695.8 389.0 697.0 C387.7 698.2 386.0 699.8 386.0 701.2Z" fill="#98c9f1" stroke="#2a4799" stroke-width="4.6" stroke-linejoin="round"/>
<path d="M386.0 701.2 C386.0 702.6 387.7 704.2 389.0 705.4 C390.3 706.6 392.2 707.7 394.0 708.4 C395.8 709.1 398.2 709.4 400.0 709.4 C401.8 709.4 403.6 709.1 405.0 708.4 C406.4 707.7 407.8 706.4 408.5 705.2 C409.2 704.0 409.3 702.5 409.3 701.2 C409.3 699.9 409.2 698.4 408.5 697.2 C407.8 696.0 406.4 694.7 405.0 694.0 C403.6 693.3 401.8 693.0 400.0 693.0 C398.2 693.0 395.8 693.3 394.0 694.0 C392.2 694.7 390.3 695.8 389.0 697.0 C387.7 698.2 386.0 699.8 386.0 701.2Z" fill="none" stroke="#2f57c9" stroke-width="3.5" stroke-linejoin="round"/>
<path d="M383.9 706.1 C383.0 707.1 383.0 709.4 383.1 711.2 C383.2 713.0 383.7 715.1 384.5 716.9 C385.3 718.7 386.8 720.6 388.1 721.8 C389.3 723.1 390.8 724.2 392.3 724.7 C393.8 725.2 395.7 725.2 397.0 724.9 C398.4 724.5 399.5 723.6 400.4 722.6 C401.4 721.7 402.3 720.6 402.7 719.2 C403.0 717.9 403.0 716.0 402.5 714.5 C402.0 713.0 400.9 711.5 399.6 710.3 C398.4 709.0 396.5 707.5 394.7 706.7 C392.9 705.9 390.8 705.4 389.0 705.3 C387.2 705.2 384.9 705.2 383.9 706.1Z" fill="#98c9f1" stroke="#2a4799" stroke-width="4.6" stroke-linejoin="round"/>
<path d="M383.9 706.1 C383.0 707.1 383.0 709.4 383.1 711.2 C383.2 713.0 383.7 715.1 384.5 716.9 C385.3 718.7 386.8 720.6 388.1 721.8 C389.3 723.1 390.8 724.2 392.3 724.7 C393.8 725.2 395.7 725.2 397.0 724.9 C398.4 724.5 399.5 723.6 400.4 722.6 C401.4 721.7 402.3 720.6 402.7 719.2 C403.0 717.9 403.0 716.0 402.5 714.5 C402.0 713.0 400.9 711.5 399.6 710.3 C398.4 709.0 396.5 707.5 394.7 706.7 C392.9 705.9 390.8 705.4 389.0 705.3 C387.2 705.2 384.9 705.2 383.9 706.1Z" fill="none" stroke="#2f57c9" stroke-width="3.5" stroke-linejoin="round"/>
<path d="M379.0 708.2 C377.6 708.2 376.0 709.9 374.8 711.2 C373.6 712.5 372.5 714.4 371.8 716.2 C371.1 718.0 370.8 720.4 370.8 722.2 C370.8 724.0 371.1 725.8 371.8 727.2 C372.5 728.6 373.8 730.0 375.0 730.7 C376.2 731.4 377.7 731.5 379.0 731.5 C380.3 731.5 381.8 731.4 383.0 730.7 C384.2 730.0 385.5 728.6 386.2 727.2 C386.9 725.8 387.2 724.0 387.2 722.2 C387.2 720.4 386.9 718.0 386.2 716.2 C385.5 714.4 384.4 712.5 383.2 711.2 C382.0 709.9 380.4 708.2 379.0 708.2Z" fill="#98c9f1" stroke="#2a4799" stroke-width="4.6" stroke-linejoin="round"/>
<path d="M379.0 708.2 C377.6 708.2 376.0 709.9 374.8 711.2 C373.6 712.5 372.5 714.4 371.8 716.2 C371.1 718.0 370.8 720.4 370.8 722.2 C370.8 724.0 371.1 725.8 371.8 727.2 C372.5 728.6 373.8 730.0 375.0 730.7 C376.2 731.4 377.7 731.5 379.0 731.5 C380.3 731.5 381.8 731.4 383.0 730.7 C384.2 730.0 385.5 728.6 386.2 727.2 C386.9 725.8 387.2 724.0 387.2 722.2 C387.2 720.4 386.9 718.0 386.2 716.2 C385.5 714.4 384.4 712.5 383.2 711.2 C382.0 709.9 380.4 708.2 379.0 708.2Z" fill="none" stroke="#2f57c9" stroke-width="3.5" stroke-linejoin="round"/>
<path d="M374.1 706.1 C373.1 705.2 370.8 705.2 369.0 705.3 C367.2 705.4 365.1 705.9 363.3 706.7 C361.5 707.5 359.6 709.0 358.4 710.3 C357.1 711.5 356.0 713.0 355.5 714.5 C355.0 716.0 355.0 717.9 355.3 719.2 C355.7 720.6 356.6 721.7 357.6 722.6 C358.5 723.6 359.6 724.5 361.0 724.9 C362.3 725.2 364.2 725.2 365.7 724.7 C367.2 724.2 368.7 723.1 369.9 721.8 C371.2 720.6 372.7 718.7 373.5 716.9 C374.3 715.1 374.8 713.0 374.9 711.2 C375.0 709.4 375.0 707.1 374.1 706.1Z" fill="#98c9f1" stroke="#2a4799" stroke-width="4.6" stroke-linejoin="round"/>
<path d="M374.1 706.1 C373.1 705.2 370.8 705.2 369.0 705.3 C367.2 705.4 365.1 705.9 363.3 706.7 C361.5 707.5 359.6 709.0 358.4 710.3 C357.1 711.5 356.0 713.0 355.5 714.5 C355.0 716.0 355.0 717.9 355.3 719.2 C355.7 720.6 356.6 721.7 357.6 722.6 C358.5 723.6 359.6 724.5 361.0 724.9 C362.3 725.2 364.2 725.2 365.7 724.7 C367.2 724.2 368.7 723.1 369.9 721.8 C371.2 720.6 372.7 718.7 373.5 716.9 C374.3 715.1 374.8 713.0 374.9 711.2 C375.0 709.4 375.0 707.1 374.1 706.1Z" fill="none" stroke="#2f57c9" stroke-width="3.5" stroke-linejoin="round"/>
<path d="M372.0 701.2 C372.0 699.8 370.3 698.2 369.0 697.0 C367.7 695.8 365.8 694.7 364.0 694.0 C362.2 693.3 359.8 693.0 358.0 693.0 C356.2 693.0 354.4 693.3 353.0 694.0 C351.6 694.7 350.2 696.0 349.5 697.2 C348.8 698.4 348.7 699.9 348.7 701.2 C348.7 702.5 348.8 704.0 349.5 705.2 C350.2 706.4 351.6 707.7 353.0 708.4 C354.4 709.1 356.2 709.4 358.0 709.4 C359.8 709.4 362.2 709.1 364.0 708.4 C365.8 707.7 367.7 706.6 369.0 705.4 C370.3 704.2 372.0 702.6 372.0 701.2Z" fill="#98c9f1" stroke="#2a4799" stroke-width="4.6" stroke-linejoin="round"/>
<path d="M372.0 701.2 C372.0 699.8 370.3 698.2 369.0 697.0 C367.7 695.8 365.8 694.7 364.0 694.0 C362.2 693.3 359.8 693.0 358.0 693.0 C356.2 693.0 354.4 693.3 353.0 694.0 C351.6 694.7 350.2 696.0 349.5 697.2 C348.8 698.4 348.7 699.9 348.7 701.2 C348.7 702.5 348.8 704.0 349.5 705.2 C350.2 706.4 351.6 707.7 353.0 708.4 C354.4 709.1 356.2 709.4 358.0 709.4 C359.8 709.4 362.2 709.1 364.0 708.4 C365.8 707.7 367.7 706.6 369.0 705.4 C370.3 704.2 372.0 702.6 372.0 701.2Z" fill="none" stroke="#2f57c9" stroke-width="3.5" stroke-linejoin="round"/>
<path d="M374.1 696.3 C375.0 695.3 375.0 693.0 374.9 691.2 C374.8 689.4 374.3 687.3 373.5 685.5 C372.7 683.7 371.2 681.8 369.9 680.6 C368.7 679.3 367.2 678.2 365.7 677.7 C364.2 677.2 362.3 677.2 361.0 677.5 C359.6 677.9 358.5 678.8 357.6 679.8 C356.6 680.7 355.7 681.8 355.3 683.2 C355.0 684.5 355.0 686.4 355.5 687.9 C356.0 689.4 357.1 690.9 358.4 692.1 C359.6 693.4 361.5 694.9 363.3 695.7 C365.1 696.5 367.2 697.0 369.0 697.1 C370.8 697.2 373.1 697.2 374.1 696.3Z" fill="#98c9f1" stroke="#2a4799" stroke-width="4.6" stroke-linejoin="round"/>
<path d="M374.1 696.3 C375.0 695.3 375.0 693.0 374.9 691.2 C374.8 689.4 374.3 687.3 373.5 685.5 C372.7 683.7 371.2 681.8 369.9 680.6 C368.7 679.3 367.2 678.2 365.7 677.7 C364.2 677.2 362.3 677.2 361.0 677.5 C359.6 677.9 358.5 678.8 357.6 679.8 C356.6 680.7 355.7 681.8 355.3 683.2 C355.0 684.5 355.0 686.4 355.5 687.9 C356.0 689.4 357.1 690.9 358.4 692.1 C359.6 693.4 361.5 694.9 363.3 695.7 C365.1 696.5 367.2 697.0 369.0 697.1 C370.8 697.2 373.1 697.2 374.1 696.3Z" fill="none" stroke="#2f57c9" stroke-width="3.5" stroke-linejoin="round"/>
<path d="M379.0 694.2 C380.4 694.2 382.0 692.5 383.2 691.2 C384.4 689.9 385.5 688.0 386.2 686.2 C386.9 684.4 387.2 682.0 387.2 680.2 C387.2 678.4 386.9 676.6 386.2 675.2 C385.5 673.8 384.2 672.4 383.0 671.7 C381.8 671.0 380.3 670.9 379.0 670.9 C377.7 670.9 376.2 671.0 375.0 671.7 C373.8 672.4 372.5 673.8 371.8 675.2 C371.1 676.6 370.8 678.4 370.8 680.2 C370.8 682.0 371.1 684.4 371.8 686.2 C372.5 688.0 373.6 689.9 374.8 691.2 C376.0 692.5 377.6 694.2 379.0 694.2Z" fill="none" stroke="#2f57c9" stroke-width="3.5" stroke-linejoin="round"/>
<path d="M383.9 696.3 C384.9 697.2 387.2 697.2 389.0 697.1 C390.8 697.0 392.9 696.5 394.7 695.7 C396.5 694.9 398.4 693.4 399.6 692.1 C400.9 690.9 402.0 689.4 402.5 687.9 C403.0 686.4 403.0 684.5 402.7 683.2 C402.3 681.8 401.4 680.7 400.4 679.8 C399.5 678.8 398.4 677.9 397.0 677.5 C395.7 677.2 393.8 677.2 392.3 677.7 C390.8 678.2 389.3 679.3 388.1 680.6 C386.8 681.8 385.3 683.7 384.5 685.5 C383.7 687.3 383.2 689.4 383.1 691.2 C383.0 693.0 383.0 695.3 383.9 696.3Z" fill="none" stroke="#2f57c9" stroke-width="3.5" stroke-linejoin="round"/>
<path d="M386.0 701.2 C386.0 702.6 387.7 704.2 389.0 705.4 C390.3 706.6 392.2 707.7 394.0 708.4 C395.8 709.1 398.2 709.4 400.0 709.4 C401.8 709.4 403.6 709.1 405.0 708.4 C406.4 707.7 407.8 706.4 408.5 705.2 C409.2 704.0 409.3 702.5 409.3 701.2 C409.3 699.9 409.2 698.4 408.5 697.2 C407.8 696.0 406.4 694.7 405.0 694.0 C403.6 693.3 401.8 693.0 400.0 693.0 C398.2 693.0 395.8 693.3 394.0 694.0 C392.2 694.7 390.3 695.8 389.0 697.0 C387.7 698.2 386.0 699.8 386.0 701.2Z" fill="none" stroke="#2f57c9" stroke-width="3.5" stroke-linejoin="round"/>
<path d="M383.9 706.1 C383.0 707.1 383.0 709.4 383.1 711.2 C383.2 713.0 383.7 715.1 384.5 716.9 C385.3 718.7 386.8 720.6 388.1 721.8 C389.3 723.1 390.8 724.2 392.3 724.7 C393.8 725.2 395.7 725.2 397.0 724.9 C398.4 724.5 399.5 723.6 400.4 722.6 C401.4 721.7 402.3 720.6 402.7 719.2 C403.0 717.9 403.0 716.0 402.5 714.5 C402.0 713.0 400.9 711.5 399.6 710.3 C398.4 709.0 396.5 707.5 394.7 706.7 C392.9 705.9 390.8 705.4 389.0 705.3 C387.2 705.2 384.9 705.2 383.9 706.1Z" fill="none" stroke="#2f57c9" stroke-width="3.5" stroke-linejoin="round"/>
<path d="M379.0 708.2 C377.6 708.2 376.0 709.9 374.8 711.2 C373.6 712.5 372.5 714.4 371.8 716.2 C371.1 718.0 370.8 720.4 370.8 722.2 C370.8 724.0 371.1 725.8 371.8 727.2 C372.5 728.6 373.8 730.0 375.0 730.7 C376.2 731.4 377.7 731.5 379.0 731.5 C380.3 731.5 381.8 731.4 383.0 730.7 C384.2 730.0 385.5 728.6 386.2 727.2 C386.9 725.8 387.2 724.0 387.2 722.2 C387.2 720.4 386.9 718.0 386.2 716.2 C385.5 714.4 384.4 712.5 383.2 711.2 C382.0 709.9 380.4 708.2 379.0 708.2Z" fill="none" stroke="#2f57c9" stroke-width="3.5" stroke-linejoin="round"/>
<path d="M374.1 706.1 C373.1 705.2 370.8 705.2 369.0 705.3 C367.2 705.4 365.1 705.9 363.3 706.7 C361.5 707.5 359.6 709.0 358.4 710.3 C357.1 711.5 356.0 713.0 355.5 714.5 C355.0 716.0 355.0 717.9 355.3 719.2 C355.7 720.6 356.6 721.7 357.6 722.6 C358.5 723.6 359.6 724.5 361.0 724.9 C362.3 725.2 364.2 725.2 365.7 724.7 C367.2 724.2 368.7 723.1 369.9 721.8 C371.2 720.6 372.7 718.7 373.5 716.9 C374.3 715.1 374.8 713.0 374.9 711.2 C375.0 709.4 375.0 707.1 374.1 706.1Z" fill="none" stroke="#2f57c9" stroke-width="3.5" stroke-linejoin="round"/>
<path d="M372.0 701.2 C372.0 699.8 370.3 698.2 369.0 697.0 C367.7 695.8 365.8 694.7 364.0 694.0 C362.2 693.3 359.8 693.0 358.0 693.0 C356.2 693.0 354.4 693.3 353.0 694.0 C351.6 694.7 350.2 696.0 349.5 697.2 C348.8 698.4 348.7 699.9 348.7 701.2 C348.7 702.5 348.8 704.0 349.5 705.2 C350.2 706.4 351.6 707.7 353.0 708.4 C354.4 709.1 356.2 709.4 358.0 709.4 C359.8 709.4 362.2 709.1 364.0 708.4 C365.8 707.7 367.7 706.6 369.0 705.4 C370.3 704.2 372.0 702.6 372.0 701.2Z" fill="none" stroke="#2f57c9" stroke-width="3.5" stroke-linejoin="round"/>
<path d="M374.1 696.3 C375.0 695.3 375.0 693.0 374.9 691.2 C374.8 689.4 374.3 687.3 373.5 685.5 C372.7 683.7 371.2 681.8 369.9 680.6 C368.7 679.3 367.2 678.2 365.7 677.7 C364.2 677.2 362.3 677.2 361.0 677.5 C359.6 677.9 358.5 678.8 357.6 679.8 C356.6 680.7 355.7 681.8 355.3 683.2 C355.0 684.5 355.0 686.4 355.5 687.9 C356.0 689.4 357.1 690.9 358.4 692.1 C359.6 693.4 361.5 694.9 363.3 695.7 C365.1 696.5 367.2 697.0 369.0 697.1 C370.8 697.2 373.1 697.2 374.1 696.3Z" fill="none" stroke="#2f57c9" stroke-width="3.5" stroke-linejoin="round"/>
<path d="M379.0 688.2 C380.2 688.2 381.7 686.5 382.5 685.2 C383.3 683.9 384.0 681.7 384.0 680.2 C384.0 678.7 383.3 677.0 382.5 676.2 C381.7 675.4 380.2 675.2 379.0 675.2 C377.8 675.2 376.3 675.4 375.5 676.2 C374.7 677.0 374.0 678.7 374.0 680.2 C374.0 681.7 374.7 683.9 375.5 685.2 C376.3 686.5 377.8 688.2 379.0 688.2Z" fill="none" stroke="#7ea9e8" stroke-width="1.2"/>
<path d="M388.2 692.0 C389.0 692.8 391.3 692.7 392.8 692.4 C394.3 692.0 396.3 690.9 397.4 689.9 C398.4 688.8 399.2 687.2 399.2 686.0 C399.2 684.8 398.2 683.6 397.4 682.8 C396.6 682.0 395.4 681.0 394.2 681.0 C393.0 681.0 391.4 681.8 390.3 682.8 C389.3 683.9 388.2 685.9 387.8 687.4 C387.5 688.9 387.4 691.2 388.2 692.0Z" fill="none" stroke="#7ea9e8" stroke-width="1.2"/>
<path d="M392.0 701.2 C392.0 702.4 393.7 703.9 395.0 704.7 C396.3 705.5 398.5 706.2 400.0 706.2 C401.5 706.2 403.2 705.5 404.0 704.7 C404.8 703.9 405.0 702.4 405.0 701.2 C405.0 700.0 404.8 698.5 404.0 697.7 C403.2 696.9 401.5 696.2 400.0 696.2 C398.5 696.2 396.3 696.9 395.0 697.7 C393.7 698.5 392.0 700.0 392.0 701.2Z" fill="none" stroke="#7ea9e8" stroke-width="1.2"/>
<path d="M388.2 710.4 C387.4 711.2 387.5 713.5 387.8 715.0 C388.2 716.5 389.3 718.5 390.3 719.6 C391.4 720.6 393.0 721.4 394.2 721.4 C395.4 721.4 396.6 720.4 397.4 719.6 C398.2 718.8 399.2 717.6 399.2 716.4 C399.2 715.2 398.4 713.6 397.4 712.5 C396.3 711.5 394.3 710.4 392.8 710.0 C391.3 709.7 389.0 709.6 388.2 710.4Z" fill="none" stroke="#7ea9e8" stroke-width="1.2"/>
<path d="M379.0 714.2 C377.8 714.2 376.3 715.9 375.5 717.2 C374.7 718.5 374.0 720.7 374.0 722.2 C374.0 723.7 374.7 725.4 375.5 726.2 C376.3 727.0 377.8 727.2 379.0 727.2 C380.2 727.2 381.7 727.0 382.5 726.2 C383.3 725.4 384.0 723.7 384.0 722.2 C384.0 720.7 383.3 718.5 382.5 717.2 C381.7 715.9 380.2 714.2 379.0 714.2Z" fill="none" stroke="#7ea9e8" stroke-width="1.2"/>
<path d="M369.8 710.4 C369.0 709.6 366.7 709.7 365.2 710.0 C363.7 710.4 361.7 711.5 360.6 712.5 C359.6 713.6 358.8 715.2 358.8 716.4 C358.8 717.6 359.8 718.8 360.6 719.6 C361.4 720.4 362.6 721.4 363.8 721.4 C365.0 721.4 366.6 720.6 367.7 719.6 C368.7 718.5 369.8 716.5 370.2 715.0 C370.5 713.5 370.6 711.2 369.8 710.4Z" fill="none" stroke="#7ea9e8" stroke-width="1.2"/>
<path d="M366.0 701.2 C366.0 700.0 364.3 698.5 363.0 697.7 C361.7 696.9 359.5 696.2 358.0 696.2 C356.5 696.2 354.8 696.9 354.0 697.7 C353.2 698.5 353.0 700.0 353.0 701.2 C353.0 702.4 353.2 703.9 354.0 704.7 C354.8 705.5 356.5 706.2 358.0 706.2 C359.5 706.2 361.7 705.5 363.0 704.7 C364.3 703.9 366.0 702.4 366.0 701.2Z" fill="none" stroke="#7ea9e8" stroke-width="1.2"/>
<path d="M369.8 692.0 C370.6 691.2 370.5 688.9 370.2 687.4 C369.8 685.9 368.7 683.9 367.7 682.8 C366.6 681.8 365.0 681.0 363.8 681.0 C362.6 681.0 361.4 682.0 360.6 682.8 C359.8 683.6 358.8 684.8 358.8 686.0 C358.8 687.2 359.6 688.8 360.6 689.9 C361.7 690.9 363.7 692.0 365.2 692.4 C366.7 692.7 369.0 692.8 369.8 692.0Z" fill="none" stroke="#7ea9e8" stroke-width="1.2"/>
<circle cx="379.0" cy="701.2" r="10" fill="#98c9f1" stroke="#7f9cba" stroke-width="4.6"/>
<circle cx="379.0" cy="701.2" r="10" fill="#98c9f1" stroke="#ffffff" stroke-width="3"/>
<path d="M530.8 302.0 A16.6 16.6 0 0 1 540.4 273.0 A12.7 12.7 0 0 1 562.8 263.4 A16.7 16.7 0 0 1 582.0 273.0 A11.6 11.6 0 0 1 591.6 283.4 A9.7 9.7 0 0 1 596.0 302.2 L530.8 302.0Z" fill="#7f9cba" stroke="#7f9cba" stroke-width="14.8" stroke-linejoin="round" stroke-linecap="round"/>
<path d="M530.8 302.0 A16.6 16.6 0 0 1 540.4 273.0 A12.7 12.7 0 0 1 562.8 263.4 A16.7 16.7 0 0 1 582.0 273.0 A11.6 11.6 0 0 1 591.6 283.4 A9.7 9.7 0 0 1 596.0 302.2 L530.8 302.0Z" fill="#98c9f1" stroke="#98c9f1" stroke-width="12.6" stroke-linejoin="round" stroke-linecap="round"/>
<path d="M530.8 302.0 A16.6 16.6 0 0 1 540.4 273.0 A12.7 12.7 0 0 1 562.8 263.4 A16.7 16.7 0 0 1 582.0 273.0 A11.6 11.6 0 0 1 591.6 283.4 A9.7 9.7 0 0 1 596.0 302.2 L530.8 302.0Z" fill="none" stroke="#7f9cba" stroke-width="4.4" stroke-linejoin="round" stroke-linecap="round"/>
<path d="M530.8 302.0 A16.6 16.6 0 0 1 540.4 273.0 A12.7 12.7 0 0 1 562.8 263.4 A16.7 16.7 0 0 1 582.0 273.0 A11.6 11.6 0 0 1 591.6 283.4 A9.7 9.7 0 0 1 596.0 302.2 L530.8 302.0Z" fill="none" stroke="#ffffff" stroke-width="2.8" stroke-linejoin="round" stroke-linecap="round"/>
<path d="M664.6 297.5 A15.9 15.9 0 0 1 681.7 288.0 A18.7 18.7 0 0 1 713.0 289.0 A12.4 12.4 0 0 1 724.4 297.5 A17.6 17.6 0 1 1 710.1 329.7 A18.9 18.9 0 0 1 679.8 330.7 A18.6 18.6 0 1 1 664.6 297.5Z" fill="#7f9cba" stroke="#7f9cba" stroke-width="14.8" stroke-linejoin="round" stroke-linecap="round"/>
<path d="M664.6 297.5 A15.9 15.9 0 0 1 681.7 288.0 A18.7 18.7 0 0 1 713.0 289.0 A12.4 12.4 0 0 1 724.4 297.5 A17.6 17.6 0 1 1 710.1 329.7 A18.9 18.9 0 0 1 679.8 330.7 A18.6 18.6 0 1 1 664.6 297.5Z" fill="#98c9f1" stroke="#98c9f1" stroke-width="12.6" stroke-linejoin="round" stroke-linecap="round"/>
<path d="M664.6 297.5 A15.9 15.9 0 0 1 681.7 288.0 A18.7 18.7 0 0 1 713.0 289.0 A12.4 12.4 0 0 1 724.4 297.5 A17.6 17.6 0 1 1 710.1 329.7 A18.9 18.9 0 0 1 679.8 330.7 A18.6 18.6 0 1 1 664.6 297.5Z" fill="none" stroke="#7f9cba" stroke-width="4.4" stroke-linejoin="round" stroke-linecap="round"/>
<path d="M664.6 297.5 A15.9 15.9 0 0 1 681.7 288.0 A18.7 18.7 0 0 1 713.0 289.0 A12.4 12.4 0 0 1 724.4 297.5 A17.6 17.6 0 1 1 710.1 329.7 A18.9 18.9 0 0 1 679.8 330.7 A18.6 18.6 0 1 1 664.6 297.5Z" fill="none" stroke="#ffffff" stroke-width="2.8" stroke-linejoin="round" stroke-linecap="round"/>
<path d="M799.7 248.7 L811.8 271.4 L836.3 263.9 L828.8 288.4 L851.5 300.5 L828.8 312.6 L836.3 337.1 L811.8 329.6 L799.7 352.3 L787.6 329.6 L763.1 337.1 L770.6 312.6 L747.9 300.5 L770.6 288.4 L763.1 263.9 L787.6 271.4Z" fill="#7f9cba" stroke="#7f9cba" stroke-width="13.2" stroke-linejoin="round" stroke-linecap="round"/>
<path d="M799.7 248.7 L811.8 271.4 L836.3 263.9 L828.8 288.4 L851.5 300.5 L828.8 312.6 L836.3 337.1 L811.8 329.6 L799.7 352.3 L787.6 329.6 L763.1 337.1 L770.6 312.6 L747.9 300.5 L770.6 288.4 L763.1 263.9 L787.6 271.4Z" fill="#98c9f1" stroke="#98c9f1" stroke-width="11.0" stroke-linejoin="round" stroke-linecap="round"/>
<path d="M799.7 248.7 L811.8 271.4 L836.3 263.9 L828.8 288.4 L851.5 300.5 L828.8 312.6 L836.3 337.1 L811.8 329.6 L799.7 352.3 L787.6 329.6 L763.1 337.1 L770.6 312.6 L747.9 300.5 L770.6 288.4 L763.1 263.9 L787.6 271.4Z" fill="#98c9f1" stroke="#b46d11" stroke-width="4.0" stroke-linejoin="round" stroke-linecap="round"/>
<path d="M799.7 248.7 L811.8 271.4 L836.3 263.9 L828.8 288.4 L851.5 300.5 L828.8 312.6 L836.3 337.1 L811.8 329.6 L799.7 352.3 L787.6 329.6 L763.1 337.1 L770.6 312.6 L747.9 300.5 L770.6 288.4 L763.1 263.9 L787.6 271.4Z" fill="none" stroke="#ef8d0c" stroke-width="2.8" stroke-linejoin="round" stroke-linecap="round"/>
<circle cx="799.7" cy="300.5" r="27.8" fill="#98c9f1" stroke="#f7ee00" stroke-width="3.6"/>
<circle cx="799.7" cy="300.5" r="18.8" fill="#98c9f1" stroke="#f7ee00" stroke-width="3.4"/>
<path d="M540.4 337.3 C542.4 335.7 547.3 334.1 551.4 335.9 C555.5 337.7 561.1 343.6 565.0 348.2 C568.9 352.8 572.0 357.5 574.5 363.2 C577.0 368.9 577.3 378.9 580.0 382.3 C582.7 385.7 586.1 382.7 590.9 383.6 C595.7 384.5 603.1 385.6 608.6 387.7 C614.1 389.8 620.2 392.7 623.6 395.9 C627.0 399.1 629.9 403.9 629.0 406.8 C628.1 409.8 622.6 412.0 618.1 413.6 C613.6 415.2 605.9 416.5 601.8 416.3 C597.7 416.1 595.2 411.1 593.6 412.2 C592.0 413.3 594.2 420.6 592.2 423.1 C590.2 425.6 585.4 427.0 581.3 427.2 C577.2 427.4 571.1 427.0 567.7 424.5 C564.3 422.0 563.9 415.1 560.9 412.2 C557.9 409.2 553.4 409.5 550.0 406.8 C546.6 404.1 542.2 399.5 540.4 395.9 C538.6 392.3 537.0 387.7 539.1 385.0 C541.2 382.3 552.0 381.3 552.7 379.5 C553.4 377.7 545.2 377.4 543.2 374.0 C541.2 370.6 541.1 363.9 540.4 359.1 C539.7 354.3 539.1 349.0 539.1 345.4 C539.1 341.8 538.4 338.9 540.4 337.3Z" fill="#7f9cba" stroke="#7f9cba" stroke-width="13.2" stroke-linejoin="round" stroke-linecap="round"/>
<path d="M583.0 381.0 L584.0 370.0 L582.7 361.1" fill="#7f9cba" stroke="#7f9cba" stroke-width="17.2" stroke-linejoin="round" stroke-linecap="round"/>
<path d="M584.0 381.0 L592.0 374.0 L601.1 371.3" fill="#7f9cba" stroke="#7f9cba" stroke-width="17.2" stroke-linejoin="round" stroke-linecap="round"/>
<path d="M540.4 337.3 C542.4 335.7 547.3 334.1 551.4 335.9 C555.5 337.7 561.1 343.6 565.0 348.2 C568.9 352.8 572.0 357.5 574.5 363.2 C577.0 368.9 577.3 378.9 580.0 382.3 C582.7 385.7 586.1 382.7 590.9 383.6 C595.7 384.5 603.1 385.6 608.6 387.7 C614.1 389.8 620.2 392.7 623.6 395.9 C627.0 399.1 629.9 403.9 629.0 406.8 C628.1 409.8 622.6 412.0 618.1 413.6 C613.6 415.2 605.9 416.5 601.8 416.3 C597.7 416.1 595.2 411.1 593.6 412.2 C592.0 413.3 594.2 420.6 592.2 423.1 C590.2 425.6 585.4 427.0 581.3 427.2 C577.2 427.4 571.1 427.0 567.7 424.5 C564.3 422.0 563.9 415.1 560.9 412.2 C557.9 409.2 553.4 409.5 550.0 406.8 C546.6 404.1 542.2 399.5 540.4 395.9 C538.6 392.3 537.0 387.7 539.1 385.0 C541.2 382.3 552.0 381.3 552.7 379.5 C553.4 377.7 545.2 377.4 543.2 374.0 C541.2 370.6 541.1 363.9 540.4 359.1 C539.7 354.3 539.1 349.0 539.1 345.4 C539.1 341.8 538.4 338.9 540.4 337.3Z" fill="#98c9f1" stroke="#98c9f1" stroke-width="11.0" stroke-linejoin="round" stroke-linecap="round"/>
<path d="M583.0 381.0 L584.0 370.0 L582.7 361.1" fill="#98c9f1" stroke="#98c9f1" stroke-width="15.0" stroke-linejoin="round" stroke-linecap="round"/>
<path d="M584.0 381.0 L592.0 374.0 L601.1 371.3" fill="#98c9f1" stroke="#98c9f1" stroke-width="15.0" stroke-linejoin="round" stroke-linecap="round"/>
<path d="M540.4 337.3 C542.4 335.7 547.3 334.1 551.4 335.9 C555.5 337.7 561.1 343.6 565.0 348.2 C568.9 352.8 572.0 357.5 574.5 363.2 C577.0 368.9 577.3 378.9 580.0 382.3 C582.7 385.7 586.1 382.7 590.9 383.6 C595.7 384.5 603.1 385.6 608.6 387.7 C614.1 389.8 620.2 392.7 623.6 395.9 C627.0 399.1 629.9 403.9 629.0 406.8 C628.1 409.8 622.6 412.0 618.1 413.6 C613.6 415.2 605.9 416.5 601.8 416.3 C597.7 416.1 595.2 411.1 593.6 412.2 C592.0 413.3 594.2 420.6 592.2 423.1 C590.2 425.6 585.4 427.0 581.3 427.2 C577.2 427.4 571.1 427.0 567.7 424.5 C564.3 422.0 563.9 415.1 560.9 412.2 C557.9 409.2 553.4 409.5 550.0 406.8 C546.6 404.1 542.2 399.5 540.4 395.9 C538.6 392.3 537.0 387.7 539.1 385.0 C541.2 382.3 552.0 381.3 552.7 379.5 C553.4 377.7 545.2 377.4 543.2 374.0 C541.2 370.6 541.1 363.9 540.4 359.1 C539.7 354.3 539.1 349.0 539.1 345.4 C539.1 341.8 538.4 338.9 540.4 337.3Z" fill="#98c9f1" stroke="#a9151c" stroke-width="4.0" stroke-linejoin="round" stroke-linecap="round"/>
<path d="M540.4 337.3 C542.4 335.7 547.3 334.1 551.4 335.9 C555.5 337.7 561.1 343.6 565.0 348.2 C568.9 352.8 572.0 357.5 574.5 363.2 C577.0 368.9 577.3 378.9 580.0 382.3 C582.7 385.7 586.1 382.7 590.9 383.6 C595.7 384.5 603.1 385.6 608.6 387.7 C614.1 389.8 620.2 392.7 623.6 395.9 C627.0 399.1 629.9 403.9 629.0 406.8 C628.1 409.8 622.6 412.0 618.1 413.6 C613.6 415.2 605.9 416.5 601.8 416.3 C597.7 416.1 595.2 411.1 593.6 412.2 C592.0 413.3 594.2 420.6 592.2 423.1 C590.2 425.6 585.4 427.0 581.3 427.2 C577.2 427.4 571.1 427.0 567.7 424.5 C564.3 422.0 563.9 415.1 560.9 412.2 C557.9 409.2 553.4 409.5 550.0 406.8 C546.6 404.1 542.2 399.5 540.4 395.9 C538.6 392.3 537.0 387.7 539.1 385.0 C541.2 382.3 552.0 381.3 552.7 379.5 C553.4 377.7 545.2 377.4 543.2 374.0 C541.2 370.6 541.1 363.9 540.4 359.1 C539.7 354.3 539.1 349.0 539.1 345.4 C539.1 341.8 538.4 338.9 540.4 337.3Z" fill="none" stroke="#e0121c" stroke-width="2.8" stroke-linejoin="round" stroke-linecap="round"/>
<path d="M563.6 409.5 L582.7 382.3" fill="none" stroke="#a9151c" stroke-width="8.5" stroke-linejoin="round" stroke-linecap="round"/>
<path d="M563.6 409.5 L582.7 382.3" fill="none" stroke="#e0121c" stroke-width="7.3" stroke-linejoin="round" stroke-linecap="round"/>
<path d="M583.0 381.0 C583.2 379.2 584.0 373.3 584.0 370.0 C584.0 366.7 582.9 362.6 582.7 361.1" fill="none" stroke="#0a0a0a" stroke-width="3.1" stroke-linejoin="round" stroke-linecap="round"/>
<path d="M584.0 381.0 C585.3 379.8 589.1 375.6 592.0 374.0 C594.9 372.4 599.6 371.8 601.1 371.3" fill="none" stroke="#0a0a0a" stroke-width="3.1" stroke-linejoin="round" stroke-linecap="round"/>
<path d="M563.6 409.5 L582.7 382.3" fill="none" stroke="#0a0a0a" stroke-width="5.6" stroke-linejoin="round" stroke-linecap="round"/>
<circle cx="578.6" cy="387.7" r="3.8" fill="#0a0a0a"/>
<path d="M674.5 444.2 A18.5 18.5 0 0 1 691.9 412.6 A16.7 16.7 0 0 1 724.2 414.2 A12.6 12.6 0 0 1 736.6 425.8 A10.3 10.3 0 0 1 734.2 444.2 L674.5 444.2Z" fill="#7f9cba" stroke="#7f9cba" stroke-width="14.8" stroke-linejoin="round" stroke-linecap="round"/>
<path d="M674.5 444.2 A18.5 18.5 0 0 1 691.9 412.6 A16.7 16.7 0 0 1 724.2 414.2 A12.6 12.6 0 0 1 736.6 425.8 A10.3 10.3 0 0 1 734.2 444.2 L674.5 444.2Z" fill="#98c9f1" stroke="#98c9f1" stroke-width="12.6" stroke-linejoin="round" stroke-linecap="round"/>
<path d="M674.5 444.2 A18.5 18.5 0 0 1 691.9 412.6 A16.7 16.7 0 0 1 724.2 414.2 A12.6 12.6 0 0 1 736.6 425.8 A10.3 10.3 0 0 1 734.2 444.2 L674.5 444.2Z" fill="none" stroke="#7f9cba" stroke-width="4.4" stroke-linejoin="round" stroke-linecap="round"/>
<path d="M674.5 444.2 A18.5 18.5 0 0 1 691.9 412.6 A16.7 16.7 0 0 1 724.2 414.2 A12.6 12.6 0 0 1 736.6 425.8 A10.3 10.3 0 0 1 734.2 444.2 L674.5 444.2Z" fill="none" stroke="#ffffff" stroke-width="2.8" stroke-linejoin="round" stroke-linecap="round"/>
<path d="M828.8 392.4 C826.9 391.8 823.2 391.8 819.8 393.5 C816.4 395.2 811.8 399.1 808.6 402.5 C805.4 405.9 802.6 409.5 800.7 413.8 C798.8 418.1 800.7 426.9 797.3 428.4 C793.9 429.9 785.3 423.9 780.4 422.8 C775.5 421.7 769.9 420.9 768.0 421.7 C766.1 422.4 767.2 424.7 769.1 427.3 C771.0 429.9 775.3 434.2 779.3 437.4 C783.2 440.6 790.4 443.6 792.8 446.4 C795.2 449.2 792.2 451.9 793.9 454.3 C795.6 456.8 799.5 460.2 802.9 461.1 C806.3 462.1 811.8 460.9 814.2 460.0 C816.7 459.1 815.5 456.8 817.6 455.5 C819.7 454.2 824.4 454.2 826.6 452.1 C828.9 450.0 830.7 446.3 831.1 443.1 C831.5 439.9 829.9 435.3 828.8 432.9 C827.7 430.4 823.9 430.3 824.3 428.4 C824.7 426.5 829.8 425.1 831.1 421.7 C832.4 418.3 832.2 412.3 832.2 408.2 C832.2 404.1 831.7 399.5 831.1 396.9 C830.5 394.3 830.7 393.0 828.8 392.4Z" fill="#7f9cba" stroke="#7f9cba" stroke-width="13.2" stroke-linejoin="round" stroke-linecap="round"/>
<path d="M795.0 431.0 L794.0 422.0 L795.0 414.9" fill="#7f9cba" stroke="#7f9cba" stroke-width="17.2" stroke-linejoin="round" stroke-linecap="round"/>
<path d="M795.0 431.0 L788.0 425.0 L780.4 422.8" fill="#7f9cba" stroke="#7f9cba" stroke-width="17.2" stroke-linejoin="round" stroke-linecap="round"/>
<path d="M828.8 392.4 C826.9 391.8 823.2 391.8 819.8 393.5 C816.4 395.2 811.8 399.1 808.6 402.5 C805.4 405.9 802.6 409.5 800.7 413.8 C798.8 418.1 800.7 426.9 797.3 428.4 C793.9 429.9 785.3 423.9 780.4 422.8 C775.5 421.7 769.9 420.9 768.0 421.7 C766.1 422.4 767.2 424.7 769.1 427.3 C771.0 429.9 775.3 434.2 779.3 437.4 C783.2 440.6 790.4 443.6 792.8 446.4 C795.2 449.2 792.2 451.9 793.9 454.3 C795.6 456.8 799.5 460.2 802.9 461.1 C806.3 462.1 811.8 460.9 814.2 460.0 C816.7 459.1 815.5 456.8 817.6 455.5 C819.7 454.2 824.4 454.2 826.6 452.1 C828.9 450.0 830.7 446.3 831.1 443.1 C831.5 439.9 829.9 435.3 828.8 432.9 C827.7 430.4 823.9 430.3 824.3 428.4 C824.7 426.5 829.8 425.1 831.1 421.7 C832.4 418.3 832.2 412.3 832.2 408.2 C832.2 404.1 831.7 399.5 831.1 396.9 C830.5 394.3 830.7 393.0 828.8 392.4Z" fill="#98c9f1" stroke="#98c9f1" stroke-width="11.0" stroke-linejoin="round" stroke-linecap="round"/>
<path d="M795.0 431.0 L794.0 422.0 L795.0 414.9" fill="#98c9f1" stroke="#98c9f1" stroke-width="15.0" stroke-linejoin="round" stroke-linecap="round"/>
<path d="M795.0 431.0 L788.0 425.0 L780.4 422.8" fill="#98c9f1" stroke="#98c9f1" stroke-width="15.0" stroke-linejoin="round" stroke-linecap="round"/>
<path d="M828.8 392.4 C826.9 391.8 823.2 391.8 819.8 393.5 C816.4 395.2 811.8 399.1 808.6 402.5 C805.4 405.9 802.6 409.5 800.7 413.8 C798.8 418.1 800.7 426.9 797.3 428.4 C793.9 429.9 785.3 423.9 780.4 422.8 C775.5 421.7 769.9 420.9 768.0 421.7 C766.1 422.4 767.2 424.7 769.1 427.3 C771.0 429.9 775.3 434.2 779.3 437.4 C783.2 440.6 790.4 443.6 792.8 446.4 C795.2 449.2 792.2 451.9 793.9 454.3 C795.6 456.8 799.5 460.2 802.9 461.1 C806.3 462.1 811.8 460.9 814.2 460.0 C816.7 459.1 815.5 456.8 817.6 455.5 C819.7 454.2 824.4 454.2 826.6 452.1 C828.9 450.0 830.7 446.3 831.1 443.1 C831.5 439.9 829.9 435.3 828.8 432.9 C827.7 430.4 823.9 430.3 824.3 428.4 C824.7 426.5 829.8 425.1 831.1 421.7 C832.4 418.3 832.2 412.3 832.2 408.2 C832.2 404.1 831.7 399.5 831.1 396.9 C830.5 394.3 830.7 393.0 828.8 392.4Z" fill="#98c9f1" stroke="#2a4799" stroke-width="4.0" stroke-linejoin="round" stroke-linecap="round"/>
<path d="M828.8 392.4 C826.9 391.8 823.2 391.8 819.8 393.5 C816.4 395.2 811.8 399.1 808.6 402.5 C805.4 405.9 802.6 409.5 800.7 413.8 C798.8 418.1 800.7 426.9 797.3 428.4 C793.9 429.9 785.3 423.9 780.4 422.8 C775.5 421.7 769.9 420.9 768.0 421.7 C766.1 422.4 767.2 424.7 769.1 427.3 C771.0 429.9 775.3 434.2 779.3 437.4 C783.2 440.6 790.4 443.6 792.8 446.4 C795.2 449.2 792.2 451.9 793.9 454.3 C795.6 456.8 799.5 460.2 802.9 461.1 C806.3 462.1 811.8 460.9 814.2 460.0 C816.7 459.1 815.5 456.8 817.6 455.5 C819.7 454.2 824.4 454.2 826.6 452.1 C828.9 450.0 830.7 446.3 831.1 443.1 C831.5 439.9 829.9 435.3 828.8 432.9 C827.7 430.4 823.9 430.3 824.3 428.4 C824.7 426.5 829.8 425.1 831.1 421.7 C832.4 418.3 832.2 412.3 832.2 408.2 C832.2 404.1 831.7 399.5 831.1 396.9 C830.5 394.3 830.7 393.0 828.8 392.4Z" fill="none" stroke="#2f57c9" stroke-width="2.8" stroke-linejoin="round" stroke-linecap="round"/>
<path d="M816.4 455.5 L795.0 429.5" fill="none" stroke="#2a4799" stroke-width="8.5" stroke-linejoin="round" stroke-linecap="round"/>
<path d="M816.4 455.5 L795.0 429.5" fill="none" stroke="#2f57c9" stroke-width="7.3" stroke-linejoin="round" stroke-linecap="round"/>
<path d="M795.0 431.0 C794.8 429.5 794.0 424.7 794.0 422.0 C794.0 419.3 794.8 416.1 795.0 414.9" fill="none" stroke="#0a0a0a" stroke-width="3.1" stroke-linejoin="round" stroke-linecap="round"/>
<path d="M795.0 431.0 C793.8 430.0 790.4 426.4 788.0 425.0 C785.6 423.6 781.7 423.2 780.4 422.8" fill="none" stroke="#0a0a0a" stroke-width="3.1" stroke-linejoin="round" stroke-linecap="round"/>
<path d="M816.4 455.5 L795.0 429.5" fill="none" stroke="#0a0a0a" stroke-width="5.6" stroke-linejoin="round" stroke-linecap="round"/>
<circle cx="799.5" cy="437.4" r="3.8" fill="#0a0a0a"/>
<path d="M553.9 479.1 A15.5 6.2 -80.0 1 0 548.5 509.7 A15.5 6.2 -80.0 1 0 553.9 479.1Z" fill="#7f9cba" stroke="#7f9cba" stroke-width="14.2" stroke-linejoin="round" stroke-linecap="round"/>
<path d="M545.8 515.7 A15.5 7.0 -20.0 1 0 516.6 526.3 A15.5 7.0 -20.0 1 0 545.8 515.7Z" fill="#7f9cba" stroke="#7f9cba" stroke-width="14.2" stroke-linejoin="round" stroke-linecap="round"/>
<path d="M544.1 508.7 A16.0 10.5 35.0 1 0 517.9 490.3 A16.0 10.5 35.0 1 0 544.1 508.7Z" fill="#7f9cba" stroke="#7f9cba" stroke-width="14.2" stroke-linejoin="round" stroke-linecap="round"/>
<path d="M553 516 L567 514.8 M553 516 L555 530.4" fill="#7f9cba" stroke="#7f9cba" stroke-width="17.2" stroke-linejoin="round" stroke-linecap="round"/>
<path d="M560.1 516.2 A7.0 7.0 0.0 1 0 546.1 516.2 A7.0 7.0 0.0 1 0 560.1 516.2Z" fill="#7f9cba" stroke="#7f9cba" stroke-width="14.2" stroke-linejoin="round" stroke-linecap="round"/>
<path d="M516 487.7 L525 493" fill="#7f9cba" stroke="#7f9cba" stroke-width="17.2" stroke-linejoin="round" stroke-linecap="round"/>
<path d="M553.9 479.1 A15.5 6.2 -80.0 1 0 548.5 509.7 A15.5 6.2 -80.0 1 0 553.9 479.1Z" fill="#98c9f1" stroke="#98c9f1" stroke-width="12.0" stroke-linejoin="round" stroke-linecap="round"/>
<path d="M545.8 515.7 A15.5 7.0 -20.0 1 0 516.6 526.3 A15.5 7.0 -20.0 1 0 545.8 515.7Z" fill="#98c9f1" stroke="#98c9f1" stroke-width="12.0" stroke-linejoin="round" stroke-linecap="round"/>
<path d="M544.1 508.7 A16.0 10.5 35.0 1 0 517.9 490.3 A16.0 10.5 35.0 1 0 544.1 508.7Z" fill="#98c9f1" stroke="#98c9f1" stroke-width="12.0" stroke-linejoin="round" stroke-linecap="round"/>
<path d="M553 516 L567 514.8 M553 516 L555 530.4" fill="#98c9f1" stroke="#98c9f1" stroke-width="15.0" stroke-linejoin="round" stroke-linecap="round"/>
<path d="M560.1 516.2 A7.0 7.0 0.0 1 0 546.1 516.2 A7.0 7.0 0.0 1 0 560.1 516.2Z" fill="#98c9f1" stroke="#98c9f1" stroke-width="12.0" stroke-linejoin="round" stroke-linecap="round"/>
<path d="M516 487.7 L525 493" fill="#98c9f1" stroke="#98c9f1" stroke-width="15.0" stroke-linejoin="round" stroke-linecap="round"/>
<path d="M544.1 508.7 A16.0 10.5 35.0 1 0 517.9 490.3 A16.0 10.5 35.0 1 0 544.1 508.7Z" fill="#0a0a0a"/>
<path d="M515.5 487 L527 491 L521 499z" fill="#0a0a0a"/>
<clipPath id="beeclip"><path d="M541.2 506.7 A12.5 7.5 35.0 1 0 520.8 492.3 A12.5 7.5 35.0 1 0 541.2 506.7Z"/></clipPath>
<g clip-path="url(#beeclip)"><path d="M520 505 L533 485 M528 511 L541 491" stroke="#98c9f1" stroke-width="4.2"/></g>
<circle cx="553.1" cy="516.2" r="7.2" fill="#0a0a0a"/>
<path d="M558 516 L567 513.5" fill="none" stroke="#0a0a0a" stroke-width="2" stroke-linejoin="round" stroke-linecap="round"/>
<path d="M554 521 L555.5 530.4" fill="none" stroke="#0a0a0a" stroke-width="2" stroke-linejoin="round" stroke-linecap="round"/>
<path d="M553.9 479.1 A15.5 6.2 -80.0 1 0 548.5 509.7 A15.5 6.2 -80.0 1 0 553.9 479.1Z" fill="none" stroke="#7f9cba" stroke-width="4.2" stroke-linejoin="round" stroke-linecap="round"/>
<path d="M553.9 479.1 A15.5 6.2 -80.0 1 0 548.5 509.7 A15.5 6.2 -80.0 1 0 553.9 479.1Z" fill="none" stroke="#ffffff" stroke-width="2.6" stroke-linejoin="round" stroke-linecap="round"/>
<path d="M545.8 515.7 A15.5 7.0 -20.0 1 0 516.6 526.3 A15.5 7.0 -20.0 1 0 545.8 515.7Z" fill="none" stroke="#7f9cba" stroke-width="4.2" stroke-linejoin="round" stroke-linecap="round"/>
<path d="M545.8 515.7 A15.5 7.0 -20.0 1 0 516.6 526.3 A15.5 7.0 -20.0 1 0 545.8 515.7Z" fill="none" stroke="#ffffff" stroke-width="2.6" stroke-linejoin="round" stroke-linecap="round"/>
<path d="M592.7 539.4 Q591.6 528.7 597.0 523.6 Q604.0 526.0 607.3 536.2 Q616.0 530.0 623.1 532.1 Q624.5 539.4 617.4 547.4 Q627.2 551.8 628.9 559.0 Q623.2 563.8 612.7 561.6 Q613.8 572.3 608.4 577.4 Q601.4 575.0 598.1 564.8 Q589.4 571.0 582.3 568.9 Q580.9 561.6 588.0 553.6 Q578.2 549.2 576.5 542.0 Q582.2 537.2 592.7 539.4Z" fill="#7f9cba" stroke="#7f9cba" stroke-width="14.2" stroke-linejoin="round" stroke-linecap="round"/>
<path d="M597.3 569.8 L604.8 571.9 L600.5 670.0 L587.7 670.0Z" fill="#7f9cba" stroke="#7f9cba" stroke-width="14.2" stroke-linejoin="round" stroke-linecap="round"/>
<path d="M592.7 539.4 Q591.6 528.7 597.0 523.6 Q604.0 526.0 607.3 536.2 Q616.0 530.0 623.1 532.1 Q624.5 539.4 617.4 547.4 Q627.2 551.8 628.9 559.0 Q623.2 563.8 612.7 561.6 Q613.8 572.3 608.4 577.4 Q601.4 575.0 598.1 564.8 Q589.4 571.0 582.3 568.9 Q580.9 561.6 588.0 553.6 Q578.2 549.2 576.5 542.0 Q582.2 537.2 592.7 539.4Z" fill="#98c9f1" stroke="#98c9f1" stroke-width="12.0" stroke-linejoin="round" stroke-linecap="round"/>
<path d="M597.3 569.8 L604.8 571.9 L600.5 670.0 L587.7 670.0Z" fill="#98c9f1" stroke="#98c9f1" stroke-width="12.0" stroke-linejoin="round" stroke-linecap="round"/>
<path d="M597.3 569.8 L604.8 571.9 L600.5 670.0 L587.7 670.0Z" fill="#98c9f1" stroke="#166018" stroke-width="4.0" stroke-linejoin="round" stroke-linecap="butt"/>
<path d="M597.3 569.8 L604.8 571.9 L600.5 670.0 L587.7 670.0Z" fill="none" stroke="#137a17" stroke-width="2.8" stroke-linejoin="round" stroke-linecap="butt"/>
<path d="M592.7 539.4 Q591.6 528.7 597.0 523.6 Q604.0 526.0 607.3 536.2 Q616.0 530.0 623.1 532.1 Q624.5 539.4 617.4 547.4 Q627.2 551.8 628.9 559.0 Q623.2 563.8 612.7 561.6 Q613.8 572.3 608.4 577.4 Q601.4 575.0 598.1 564.8 Q589.4 571.0 582.3 568.9 Q580.9 561.6 588.0 553.6 Q578.2 549.2 576.5 542.0 Q582.2 537.2 592.7 539.4Z" fill="#98c9f1" stroke="#bab308" stroke-width="3.8" stroke-linejoin="round" stroke-linecap="round"/>
<path d="M592.7 539.4 Q591.6 528.7 597.0 523.6 Q604.0 526.0 607.3 536.2 Q616.0 530.0 623.1 532.1 Q624.5 539.4 617.4 547.4 Q627.2 551.8 628.9 559.0 Q623.2 563.8 612.7 561.6 Q613.8 572.3 608.4 577.4 Q601.4 575.0 598.1 564.8 Q589.4 571.0 582.3 568.9 Q580.9 561.6 588.0 553.6 Q578.2 549.2 576.5 542.0 Q582.2 537.2 592.7 539.4Z" fill="none" stroke="#f7ee00" stroke-width="2.6" stroke-linejoin="round" stroke-linecap="round"/>
<path d="M614.1 550.5 C614.1 552.0 615.3 553.9 614.8 555.1 C614.3 556.3 612.1 556.8 611.1 557.9 C610.0 558.9 609.5 561.1 608.3 561.6 C607.1 562.1 605.2 560.9 603.7 560.9 C602.2 560.9 600.3 562.1 599.1 561.6 C597.9 561.1 597.4 558.9 596.3 557.9 C595.3 556.8 593.1 556.3 592.6 555.1 C592.1 553.9 593.3 552.0 593.3 550.5 C593.3 549.0 592.1 547.1 592.6 545.9 C593.1 544.7 595.3 544.2 596.3 543.1 C597.4 542.1 597.9 539.9 599.1 539.4 C600.3 538.9 602.2 540.1 603.7 540.1 C605.2 540.1 607.1 538.9 608.3 539.4 C609.5 539.9 610.0 542.1 611.1 543.1 C612.1 544.2 614.3 544.7 614.8 545.9 C615.3 547.1 614.1 549.0 614.1 550.5Z" fill="#ef8d0c" stroke="#d27a08" stroke-width="0.6"/>
<path d="M655.5 578.3 C655.6 577.2 654.5 573.5 654.8 571.8 C655.1 570.1 656.3 568.5 657.4 568.2 C658.5 567.8 660.1 569.6 661.4 569.6 C662.7 569.6 664.3 567.8 665.4 568.2 C666.5 568.5 667.7 570.1 668.0 571.8 C668.3 573.5 667.2 577.2 667.3 578.3 C667.4 579.5 667.7 579.6 668.5 578.8 C669.3 577.9 670.8 574.4 672.2 573.3 C673.5 572.2 675.4 571.8 676.5 572.2 C677.6 572.7 677.6 575.0 678.6 575.9 C679.6 576.7 682.0 576.3 682.6 577.3 C683.2 578.3 683.1 580.3 682.3 581.8 C681.4 583.3 678.2 585.4 677.5 586.3 C676.8 587.3 677.0 587.6 678.2 587.5 C679.3 587.4 682.8 585.6 684.5 585.6 C686.2 585.6 688.0 586.6 688.5 587.6 C689.1 588.6 687.6 590.4 687.8 591.7 C688.0 593.0 690.0 594.3 689.9 595.4 C689.7 596.6 688.4 598.0 686.8 598.6 C685.2 599.2 681.4 598.8 680.2 599.0 C679.1 599.3 679.0 599.7 680.0 600.4 C681.0 601.0 684.7 601.9 686.0 603.0 C687.3 604.1 688.1 605.9 687.8 607.1 C687.6 608.2 685.3 608.7 684.6 609.8 C683.9 610.9 684.7 613.2 683.9 613.9 C683.0 614.7 681.1 615.0 679.4 614.4 C677.8 613.9 675.2 611.0 674.1 610.5 C673.1 610.0 672.8 610.2 673.1 611.4 C673.4 612.5 675.7 615.6 676.0 617.3 C676.3 619.0 675.7 620.8 674.8 621.6 C673.9 622.3 671.8 621.1 670.6 621.6 C669.3 622.0 668.5 624.2 667.3 624.3 C666.2 624.3 664.5 623.3 663.6 621.8 C662.7 620.3 662.5 616.5 662.1 615.4 C661.6 614.3 661.2 614.3 660.7 615.4 C660.3 616.5 660.1 620.3 659.2 621.8 C658.3 623.3 656.6 624.3 655.5 624.3 C654.3 624.2 653.5 622.0 652.2 621.6 C651.0 621.1 648.9 622.3 648.0 621.6 C647.1 620.8 646.5 619.0 646.8 617.3 C647.1 615.6 649.4 612.5 649.7 611.4 C650.0 610.2 649.7 610.0 648.7 610.5 C647.6 611.0 645.0 613.9 643.4 614.4 C641.7 615.0 639.8 614.7 638.9 613.9 C638.1 613.2 638.9 610.9 638.2 609.8 C637.5 608.7 635.2 608.2 635.0 607.1 C634.7 605.9 635.5 604.1 636.8 603.0 C638.1 601.9 641.8 601.0 642.8 600.4 C643.8 599.7 643.7 599.3 642.6 599.0 C641.4 598.8 637.6 599.2 636.0 598.6 C634.4 598.0 633.1 596.6 632.9 595.4 C632.8 594.3 634.8 593.0 635.0 591.7 C635.2 590.4 633.7 588.6 634.3 587.6 C634.8 586.6 636.6 585.6 638.3 585.6 C640.0 585.6 643.5 587.4 644.6 587.5 C645.8 587.6 646.0 587.3 645.3 586.3 C644.6 585.4 641.4 583.3 640.5 581.8 C639.7 580.3 639.6 578.3 640.2 577.3 C640.8 576.3 643.2 576.7 644.2 575.9 C645.2 575.0 645.2 572.7 646.3 572.2 C647.4 571.8 649.3 572.2 650.6 573.3 C652.0 574.4 653.5 577.9 654.3 578.8 C655.1 579.6 655.4 579.5 655.5 578.3Z" fill="#7f9cba" stroke="#7f9cba" stroke-width="14.2" stroke-linejoin="round" stroke-linecap="round"/>
<path d="M655.5 578.3 C655.6 577.2 654.5 573.5 654.8 571.8 C655.1 570.1 656.3 568.5 657.4 568.2 C658.5 567.8 660.1 569.6 661.4 569.6 C662.7 569.6 664.3 567.8 665.4 568.2 C666.5 568.5 667.7 570.1 668.0 571.8 C668.3 573.5 667.2 577.2 667.3 578.3 C667.4 579.5 667.7 579.6 668.5 578.8 C669.3 577.9 670.8 574.4 672.2 573.3 C673.5 572.2 675.4 571.8 676.5 572.2 C677.6 572.7 677.6 575.0 678.6 575.9 C679.6 576.7 682.0 576.3 682.6 577.3 C683.2 578.3 683.1 580.3 682.3 581.8 C681.4 583.3 678.2 585.4 677.5 586.3 C676.8 587.3 677.0 587.6 678.2 587.5 C679.3 587.4 682.8 585.6 684.5 585.6 C686.2 585.6 688.0 586.6 688.5 587.6 C689.1 588.6 687.6 590.4 687.8 591.7 C688.0 593.0 690.0 594.3 689.9 595.4 C689.7 596.6 688.4 598.0 686.8 598.6 C685.2 599.2 681.4 598.8 680.2 599.0 C679.1 599.3 679.0 599.7 680.0 600.4 C681.0 601.0 684.7 601.9 686.0 603.0 C687.3 604.1 688.1 605.9 687.8 607.1 C687.6 608.2 685.3 608.7 684.6 609.8 C683.9 610.9 684.7 613.2 683.9 613.9 C683.0 614.7 681.1 615.0 679.4 614.4 C677.8 613.9 675.2 611.0 674.1 610.5 C673.1 610.0 672.8 610.2 673.1 611.4 C673.4 612.5 675.7 615.6 676.0 617.3 C676.3 619.0 675.7 620.8 674.8 621.6 C673.9 622.3 671.8 621.1 670.6 621.6 C669.3 622.0 668.5 624.2 667.3 624.3 C666.2 624.3 664.5 623.3 663.6 621.8 C662.7 620.3 662.5 616.5 662.1 615.4 C661.6 614.3 661.2 614.3 660.7 615.4 C660.3 616.5 660.1 620.3 659.2 621.8 C658.3 623.3 656.6 624.3 655.5 624.3 C654.3 624.2 653.5 622.0 652.2 621.6 C651.0 621.1 648.9 622.3 648.0 621.6 C647.1 620.8 646.5 619.0 646.8 617.3 C647.1 615.6 649.4 612.5 649.7 611.4 C650.0 610.2 649.7 610.0 648.7 610.5 C647.6 611.0 645.0 613.9 643.4 614.4 C641.7 615.0 639.8 614.7 638.9 613.9 C638.1 613.2 638.9 610.9 638.2 609.8 C637.5 608.7 635.2 608.2 635.0 607.1 C634.7 605.9 635.5 604.1 636.8 603.0 C638.1 601.9 641.8 601.0 642.8 600.4 C643.8 599.7 643.7 599.3 642.6 599.0 C641.4 598.8 637.6 599.2 636.0 598.6 C634.4 598.0 633.1 596.6 632.9 595.4 C632.8 594.3 634.8 593.0 635.0 591.7 C635.2 590.4 633.7 588.6 634.3 587.6 C634.8 586.6 636.6 585.6 638.3 585.6 C640.0 585.6 643.5 587.4 644.6 587.5 C645.8 587.6 646.0 587.3 645.3 586.3 C644.6 585.4 641.4 583.3 640.5 581.8 C639.7 580.3 639.6 578.3 640.2 577.3 C640.8 576.3 643.2 576.7 644.2 575.9 C645.2 575.0 645.2 572.7 646.3 572.2 C647.4 571.8 649.3 572.2 650.6 573.3 C652.0 574.4 653.5 577.9 654.3 578.8 C655.1 579.6 655.4 579.5 655.5 578.3Z" fill="#98c9f1" stroke="#98c9f1" stroke-width="12.0" stroke-linejoin="round" stroke-linecap="round"/>
<path d="M655.5 578.3 C655.6 577.2 654.5 573.5 654.8 571.8 C655.1 570.1 656.3 568.5 657.4 568.2 C658.5 567.8 660.1 569.6 661.4 569.6 C662.7 569.6 664.3 567.8 665.4 568.2 C666.5 568.5 667.7 570.1 668.0 571.8 C668.3 573.5 667.2 577.2 667.3 578.3 C667.4 579.5 667.7 579.6 668.5 578.8 C669.3 577.9 670.8 574.4 672.2 573.3 C673.5 572.2 675.4 571.8 676.5 572.2 C677.6 572.7 677.6 575.0 678.6 575.9 C679.6 576.7 682.0 576.3 682.6 577.3 C683.2 578.3 683.1 580.3 682.3 581.8 C681.4 583.3 678.2 585.4 677.5 586.3 C676.8 587.3 677.0 587.6 678.2 587.5 C679.3 587.4 682.8 585.6 684.5 585.6 C686.2 585.6 688.0 586.6 688.5 587.6 C689.1 588.6 687.6 590.4 687.8 591.7 C688.0 593.0 690.0 594.3 689.9 595.4 C689.7 596.6 688.4 598.0 686.8 598.6 C685.2 599.2 681.4 598.8 680.2 599.0 C679.1 599.3 679.0 599.7 680.0 600.4 C681.0 601.0 684.7 601.9 686.0 603.0 C687.3 604.1 688.1 605.9 687.8 607.1 C687.6 608.2 685.3 608.7 684.6 609.8 C683.9 610.9 684.7 613.2 683.9 613.9 C683.0 614.7 681.1 615.0 679.4 614.4 C677.8 613.9 675.2 611.0 674.1 610.5 C673.1 610.0 672.8 610.2 673.1 611.4 C673.4 612.5 675.7 615.6 676.0 617.3 C676.3 619.0 675.7 620.8 674.8 621.6 C673.9 622.3 671.8 621.1 670.6 621.6 C669.3 622.0 668.5 624.2 667.3 624.3 C666.2 624.3 664.5 623.3 663.6 621.8 C662.7 620.3 662.5 616.5 662.1 615.4 C661.6 614.3 661.2 614.3 660.7 615.4 C660.3 616.5 660.1 620.3 659.2 621.8 C658.3 623.3 656.6 624.3 655.5 624.3 C654.3 624.2 653.5 622.0 652.2 621.6 C651.0 621.1 648.9 622.3 648.0 621.6 C647.1 620.8 646.5 619.0 646.8 617.3 C647.1 615.6 649.4 612.5 649.7 611.4 C650.0 610.2 649.7 610.0 648.7 610.5 C647.6 611.0 645.0 613.9 643.4 614.4 C641.7 615.0 639.8 614.7 638.9 613.9 C638.1 613.2 638.9 610.9 638.2 609.8 C637.5 608.7 635.2 608.2 635.0 607.1 C634.7 605.9 635.5 604.1 636.8 603.0 C638.1 601.9 641.8 601.0 642.8 600.4 C643.8 599.7 643.7 599.3 642.6 599.0 C641.4 598.8 637.6 599.2 636.0 598.6 C634.4 598.0 633.1 596.6 632.9 595.4 C632.8 594.3 634.8 593.0 635.0 591.7 C635.2 590.4 633.7 588.6 634.3 587.6 C634.8 586.6 636.6 585.6 638.3 585.6 C640.0 585.6 643.5 587.4 644.6 587.5 C645.8 587.6 646.0 587.3 645.3 586.3 C644.6 585.4 641.4 583.3 640.5 581.8 C639.7 580.3 639.6 578.3 640.2 577.3 C640.8 576.3 643.2 576.7 644.2 575.9 C645.2 575.0 645.2 572.7 646.3 572.2 C647.4 571.8 649.3 572.2 650.6 573.3 C652.0 574.4 653.5 577.9 654.3 578.8 C655.1 579.6 655.4 579.5 655.5 578.3Z" fill="none" stroke="#7f9cba" stroke-width="3.8000000000000003" stroke-linejoin="round" stroke-linecap="round"/>
<path d="M655.5 578.3 C655.6 577.2 654.5 573.5 654.8 571.8 C655.1 570.1 656.3 568.5 657.4 568.2 C658.5 567.8 660.1 569.6 661.4 569.6 C662.7 569.6 664.3 567.8 665.4 568.2 C666.5 568.5 667.7 570.1 668.0 571.8 C668.3 573.5 667.2 577.2 667.3 578.3 C667.4 579.5 667.7 579.6 668.5 578.8 C669.3 577.9 670.8 574.4 672.2 573.3 C673.5 572.2 675.4 571.8 676.5 572.2 C677.6 572.7 677.6 575.0 678.6 575.9 C679.6 576.7 682.0 576.3 682.6 577.3 C683.2 578.3 683.1 580.3 682.3 581.8 C681.4 583.3 678.2 585.4 677.5 586.3 C676.8 587.3 677.0 587.6 678.2 587.5 C679.3 587.4 682.8 585.6 684.5 585.6 C686.2 585.6 688.0 586.6 688.5 587.6 C689.1 588.6 687.6 590.4 687.8 591.7 C688.0 593.0 690.0 594.3 689.9 595.4 C689.7 596.6 688.4 598.0 686.8 598.6 C685.2 599.2 681.4 598.8 680.2 599.0 C679.1 599.3 679.0 599.7 680.0 600.4 C681.0 601.0 684.7 601.9 686.0 603.0 C687.3 604.1 688.1 605.9 687.8 607.1 C687.6 608.2 685.3 608.7 684.6 609.8 C683.9 610.9 684.7 613.2 683.9 613.9 C683.0 614.7 681.1 615.0 679.4 614.4 C677.8 613.9 675.2 611.0 674.1 610.5 C673.1 610.0 672.8 610.2 673.1 611.4 C673.4 612.5 675.7 615.6 676.0 617.3 C676.3 619.0 675.7 620.8 674.8 621.6 C673.9 622.3 671.8 621.1 670.6 621.6 C669.3 622.0 668.5 624.2 667.3 624.3 C666.2 624.3 664.5 623.3 663.6 621.8 C662.7 620.3 662.5 616.5 662.1 615.4 C661.6 614.3 661.2 614.3 660.7 615.4 C660.3 616.5 660.1 620.3 659.2 621.8 C658.3 623.3 656.6 624.3 655.5 624.3 C654.3 624.2 653.5 622.0 652.2 621.6 C651.0 621.1 648.9 622.3 648.0 621.6 C647.1 620.8 646.5 619.0 646.8 617.3 C647.1 615.6 649.4 612.5 649.7 611.4 C650.0 610.2 649.7 610.0 648.7 610.5 C647.6 611.0 645.0 613.9 643.4 614.4 C641.7 615.0 639.8 614.7 638.9 613.9 C638.1 613.2 638.9 610.9 638.2 609.8 C637.5 608.7 635.2 608.2 635.0 607.1 C634.7 605.9 635.5 604.1 636.8 603.0 C638.1 601.9 641.8 601.0 642.8 600.4 C643.8 599.7 643.7 599.3 642.6 599.0 C641.4 598.8 637.6 599.2 636.0 598.6 C634.4 598.0 633.1 596.6 632.9 595.4 C632.8 594.3 634.8 593.0 635.0 591.7 C635.2 590.4 633.7 588.6 634.3 587.6 C634.8 586.6 636.6 585.6 638.3 585.6 C640.0 585.6 643.5 587.4 644.6 587.5 C645.8 587.6 646.0 587.3 645.3 586.3 C644.6 585.4 641.4 583.3 640.5 581.8 C639.7 580.3 639.6 578.3 640.2 577.3 C640.8 576.3 643.2 576.7 644.2 575.9 C645.2 575.0 645.2 572.7 646.3 572.2 C647.4 571.8 649.3 572.2 650.6 573.3 C652.0 574.4 653.5 577.9 654.3 578.8 C655.1 579.6 655.4 579.5 655.5 578.3Z" fill="none" stroke="#ffffff" stroke-width="2.2" stroke-linejoin="round" stroke-linecap="round"/>
<circle cx="661.4" cy="596.4" r="10" fill="none" stroke="#bab308" stroke-width="3.6"/>
<circle cx="661.4" cy="596.4" r="10" fill="none" stroke="#f7ee00" stroke-width="2.6"/>
<path d="M624.0 640.2 Q625.0 668.0 652.8 669.0 Q651.8 641.2 624.0 640.2Z" fill="#7f9cba" stroke="#7f9cba" stroke-width="13.2" stroke-linejoin="round" stroke-linecap="round"/>
<path d="M624.0 640.2 Q625.0 668.0 652.8 669.0 Q651.8 641.2 624.0 640.2Z" fill="#98c9f1" stroke="#98c9f1" stroke-width="11.0" stroke-linejoin="round" stroke-linecap="round"/>
<path d="M624.0 640.2 Q625.0 668.0 652.8 669.0 Q651.8 641.2 624.0 640.2Z" fill="#98c9f1" stroke="#208a32" stroke-width="4.0" stroke-linejoin="round" stroke-linecap="round"/>
<path d="M624.0 640.2 Q625.0 668.0 652.8 669.0 Q651.8 641.2 624.0 640.2Z" fill="none" stroke="#22b43a" stroke-width="2.8" stroke-linejoin="round" stroke-linecap="round"/>
<path d="M522.4 612.7 C521.7 607.0 522.8 600.3 524.0 596.0 C525.2 591.7 528.1 588.3 529.9 587.0 C531.7 585.7 533.3 587.3 535.0 588.0 C536.7 588.7 538.2 591.2 540.0 591.0 C541.8 590.8 544.1 587.7 546.0 587.0 C547.9 586.3 549.5 585.5 551.2 587.0 C552.9 588.5 555.1 591.7 556.0 596.0 C556.9 600.3 557.2 607.4 556.5 612.7 C555.8 618.0 554.7 623.9 552.0 628.0 C549.3 632.1 544.5 636.9 540.5 637.2 C536.5 637.5 531.0 634.1 528.0 630.0 C525.0 625.9 523.1 618.4 522.4 612.7Z" fill="#7f9cba" stroke="#7f9cba" stroke-width="14.2" stroke-linejoin="round" stroke-linecap="round"/>
<path d="M536.3 637.5 L544.0 637.5 L544.0 735.0 L536.3 735.0Z" fill="#7f9cba" stroke="#7f9cba" stroke-width="14.2" stroke-linejoin="round" stroke-linecap="round"/>
<path d="M539.2 707.8 C537.8 710.8 534.5 705.3 531.6 702.1 C528.8 698.9 524.8 693.2 522.1 688.8 C519.4 684.4 516.7 680.5 515.4 675.5 C514.1 670.5 513.7 664.0 514.5 658.5 C515.3 653.0 517.8 641.7 520.2 642.3 C522.6 642.9 526.0 657.5 528.7 662.3 C531.4 667.1 534.4 667.4 536.3 671.0 C538.2 674.6 539.5 677.9 540.0 684.0 C540.5 690.1 540.6 704.8 539.2 707.8Z" fill="#7f9cba" stroke="#7f9cba" stroke-width="14.2" stroke-linejoin="round" stroke-linecap="round"/>
<path d="M541.0 697.4 C542.9 700.2 549.1 694.4 552.4 691.7 C555.7 689.0 558.8 684.9 561.0 681.2 C563.2 677.6 564.8 674.4 565.7 669.8 C566.7 665.2 567.2 659.1 566.7 653.7 C566.2 648.3 565.0 637.1 562.9 637.6 C560.8 638.1 557.3 652.0 554.3 656.6 C551.3 661.2 547.0 662.0 544.8 665.1 C542.6 668.2 541.6 669.6 541.0 675.0 C540.4 680.4 539.1 694.6 541.0 697.4Z" fill="#7f9cba" stroke="#7f9cba" stroke-width="14.2" stroke-linejoin="round" stroke-linecap="round"/>
<path d="M522.4 612.7 C521.7 607.0 522.8 600.3 524.0 596.0 C525.2 591.7 528.1 588.3 529.9 587.0 C531.7 585.7 533.3 587.3 535.0 588.0 C536.7 588.7 538.2 591.2 540.0 591.0 C541.8 590.8 544.1 587.7 546.0 587.0 C547.9 586.3 549.5 585.5 551.2 587.0 C552.9 588.5 555.1 591.7 556.0 596.0 C556.9 600.3 557.2 607.4 556.5 612.7 C555.8 618.0 554.7 623.9 552.0 628.0 C549.3 632.1 544.5 636.9 540.5 637.2 C536.5 637.5 531.0 634.1 528.0 630.0 C525.0 625.9 523.1 618.4 522.4 612.7Z" fill="#98c9f1" stroke="#98c9f1" stroke-width="12.0" stroke-linejoin="round" stroke-linecap="round"/>
<path d="M536.3 637.5 L544.0 637.5 L544.0 735.0 L536.3 735.0Z" fill="#98c9f1" stroke="#98c9f1" stroke-width="12.0" stroke-linejoin="round" stroke-linecap="round"/>
<path d="M539.2 707.8 C537.8 710.8 534.5 705.3 531.6 702.1 C528.8 698.9 524.8 693.2 522.1 688.8 C519.4 684.4 516.7 680.5 515.4 675.5 C514.1 670.5 513.7 664.0 514.5 658.5 C515.3 653.0 517.8 641.7 520.2 642.3 C522.6 642.9 526.0 657.5 528.7 662.3 C531.4 667.1 534.4 667.4 536.3 671.0 C538.2 674.6 539.5 677.9 540.0 684.0 C540.5 690.1 540.6 704.8 539.2 707.8Z" fill="#98c9f1" stroke="#98c9f1" stroke-width="12.0" stroke-linejoin="round" stroke-linecap="round"/>
<path d="M541.0 697.4 C542.9 700.2 549.1 694.4 552.4 691.7 C555.7 689.0 558.8 684.9 561.0 681.2 C563.2 677.6 564.8 674.4 565.7 669.8 C566.7 665.2 567.2 659.1 566.7 653.7 C566.2 648.3 565.0 637.1 562.9 637.6 C560.8 638.1 557.3 652.0 554.3 656.6 C551.3 661.2 547.0 662.0 544.8 665.1 C542.6 668.2 541.6 669.6 541.0 675.0 C540.4 680.4 539.1 694.6 541.0 697.4Z" fill="#98c9f1" stroke="#98c9f1" stroke-width="12.0" stroke-linejoin="round" stroke-linecap="round"/>
<path d="M536.3 637.5 L544.0 637.5 L544.0 735.0 L536.3 735.0Z" fill="#98c9f1" stroke="#20a226" stroke-width="4.0" stroke-linejoin="round" stroke-linecap="butt"/>
<path d="M536.3 637.5 L544.0 637.5 L544.0 735.0 L536.3 735.0Z" fill="none" stroke="#22d62a" stroke-width="2.8" stroke-linejoin="round" stroke-linecap="butt"/>
<path d="M539.2 707.8 C537.8 710.8 534.5 705.3 531.6 702.1 C528.8 698.9 524.8 693.2 522.1 688.8 C519.4 684.4 516.7 680.5 515.4 675.5 C514.1 670.5 513.7 664.0 514.5 658.5 C515.3 653.0 517.8 641.7 520.2 642.3 C522.6 642.9 526.0 657.5 528.7 662.3 C531.4 667.1 534.4 667.4 536.3 671.0 C538.2 674.6 539.5 677.9 540.0 684.0 C540.5 690.1 540.6 704.8 539.2 707.8Z" fill="#98c9f1" stroke="#20a226" stroke-width="4.0" stroke-linejoin="round" stroke-linecap="round"/>
<path d="M539.2 707.8 C537.8 710.8 534.5 705.3 531.6 702.1 C528.8 698.9 524.8 693.2 522.1 688.8 C519.4 684.4 516.7 680.5 515.4 675.5 C514.1 670.5 513.7 664.0 514.5 658.5 C515.3 653.0 517.8 641.7 520.2 642.3 C522.6 642.9 526.0 657.5 528.7 662.3 C531.4 667.1 534.4 667.4 536.3 671.0 C538.2 674.6 539.5 677.9 540.0 684.0 C540.5 690.1 540.6 704.8 539.2 707.8Z" fill="none" stroke="#22d62a" stroke-width="2.8" stroke-linejoin="round" stroke-linecap="round"/>
<path d="M541.0 697.4 C542.9 700.2 549.1 694.4 552.4 691.7 C555.7 689.0 558.8 684.9 561.0 681.2 C563.2 677.6 564.8 674.4 565.7 669.8 C566.7 665.2 567.2 659.1 566.7 653.7 C566.2 648.3 565.0 637.1 562.9 637.6 C560.8 638.1 557.3 652.0 554.3 656.6 C551.3 661.2 547.0 662.0 544.8 665.1 C542.6 668.2 541.6 669.6 541.0 675.0 C540.4 680.4 539.1 694.6 541.0 697.4Z" fill="#98c9f1" stroke="#20a226" stroke-width="4.0" stroke-linejoin="round" stroke-linecap="round"/>
<path d="M541.0 697.4 C542.9 700.2 549.1 694.4 552.4 691.7 C555.7 689.0 558.8 684.9 561.0 681.2 C563.2 677.6 564.8 674.4 565.7 669.8 C566.7 665.2 567.2 659.1 566.7 653.7 C566.2 648.3 565.0 637.1 562.9 637.6 C560.8 638.1 557.3 652.0 554.3 656.6 C551.3 661.2 547.0 662.0 544.8 665.1 C542.6 668.2 541.6 669.6 541.0 675.0 C540.4 680.4 539.1 694.6 541.0 697.4Z" fill="none" stroke="#22d62a" stroke-width="2.8" stroke-linejoin="round" stroke-linecap="round"/>
<path d="M522.4 612.7 C521.7 607.0 522.8 600.3 524.0 596.0 C525.2 591.7 528.1 588.3 529.9 587.0 C531.7 585.7 533.3 587.3 535.0 588.0 C536.7 588.7 538.2 591.2 540.0 591.0 C541.8 590.8 544.1 587.7 546.0 587.0 C547.9 586.3 549.5 585.5 551.2 587.0 C552.9 588.5 555.1 591.7 556.0 596.0 C556.9 600.3 557.2 607.4 556.5 612.7 C555.8 618.0 554.7 623.9 552.0 628.0 C549.3 632.1 544.5 636.9 540.5 637.2 C536.5 637.5 531.0 634.1 528.0 630.0 C525.0 625.9 523.1 618.4 522.4 612.7Z" fill="#98c9f1" stroke="#a9151c" stroke-width="4.4" stroke-linejoin="round" stroke-linecap="round"/>
<path d="M522.4 612.7 C521.7 607.0 522.8 600.3 524.0 596.0 C525.2 591.7 528.1 588.3 529.9 587.0 C531.7 585.7 533.3 587.3 535.0 588.0 C536.7 588.7 538.2 591.2 540.0 591.0 C541.8 590.8 544.1 587.7 546.0 587.0 C547.9 586.3 549.5 585.5 551.2 587.0 C552.9 588.5 555.1 591.7 556.0 596.0 C556.9 600.3 557.2 607.4 556.5 612.7 C555.8 618.0 554.7 623.9 552.0 628.0 C549.3 632.1 544.5 636.9 540.5 637.2 C536.5 637.5 531.0 634.1 528.0 630.0 C525.0 625.9 523.1 618.4 522.4 612.7Z" fill="none" stroke="#e0121c" stroke-width="3.2" stroke-linejoin="round" stroke-linecap="round"/>
<path d="M544.0 588.0 C545.2 590.5 549.7 597.3 551.0 603.0 C552.3 608.7 552.5 617.2 552.0 622.0 C551.5 626.8 548.7 630.3 548.0 632.0" fill="none" stroke="#a9151c" stroke-width="3.8" stroke-linejoin="round" stroke-linecap="round"/>
<path d="M544.0 588.0 C545.2 590.5 549.7 597.3 551.0 603.0 C552.3 608.7 552.5 617.2 552.0 622.0 C551.5 626.8 548.7 630.3 548.0 632.0" fill="none" stroke="#e0121c" stroke-width="2.6" stroke-linejoin="round" stroke-linecap="round"/>
<path d="M707.2 568.3 C706.5 562.8 707.7 557.0 709.0 553.0 C710.3 549.0 713.2 545.4 715.2 544.1 C717.2 542.8 719.2 544.2 721.0 545.0 C722.8 545.8 724.3 549.0 726.0 549.0 C727.7 549.0 729.1 545.6 731.0 545.0 C732.9 544.4 735.6 543.4 737.4 545.1 C739.2 546.8 741.2 550.8 742.0 555.0 C742.8 559.2 743.1 565.5 742.4 570.3 C741.7 575.1 740.9 580.3 738.0 584.0 C735.1 587.7 729.5 592.2 725.3 592.5 C721.1 592.8 716.0 590.0 713.0 586.0 C710.0 582.0 707.9 573.8 707.2 568.3Z" fill="#7f9cba" stroke="#7f9cba" stroke-width="14.2" stroke-linejoin="round" stroke-linecap="round"/>
<path d="M721.3 592.0 L728.3 592.0 L728.3 691.2 L721.3 691.2Z" fill="#7f9cba" stroke="#7f9cba" stroke-width="14.2" stroke-linejoin="round" stroke-linecap="round"/>
<path d="M724.3 652.0 C723.0 653.7 719.0 648.7 716.0 646.0 C713.0 643.3 708.6 640.0 706.0 636.0 C703.4 632.0 701.2 626.7 700.5 622.0 C699.8 617.3 700.5 611.9 701.5 608.0 C702.5 604.1 704.3 597.8 706.2 598.5 C708.1 599.2 710.5 607.8 713.0 612.0 C715.5 616.2 719.5 620.0 721.3 624.0 C723.1 628.0 723.5 631.3 724.0 636.0 C724.5 640.7 725.6 650.3 724.3 652.0Z" fill="#7f9cba" stroke="#7f9cba" stroke-width="14.2" stroke-linejoin="round" stroke-linecap="round"/>
<path d="M726.0 643.0 C727.8 644.0 733.7 638.8 737.0 636.0 C740.3 633.2 743.7 629.8 746.0 626.0 C748.3 622.2 750.2 617.0 751.0 613.0 C751.8 609.0 751.4 605.1 751.0 602.0 C750.6 598.9 750.3 593.8 748.5 594.5 C746.7 595.2 743.2 602.1 740.0 606.0 C736.8 609.9 731.3 614.0 729.0 618.0 C726.7 622.0 726.5 625.8 726.0 630.0 C725.5 634.2 724.2 642.0 726.0 643.0Z" fill="#7f9cba" stroke="#7f9cba" stroke-width="14.2" stroke-linejoin="round" stroke-linecap="round"/>
<path d="M707.2 568.3 C706.5 562.8 707.7 557.0 709.0 553.0 C710.3 549.0 713.2 545.4 715.2 544.1 C717.2 542.8 719.2 544.2 721.0 545.0 C722.8 545.8 724.3 549.0 726.0 549.0 C727.7 549.0 729.1 545.6 731.0 545.0 C732.9 544.4 735.6 543.4 737.4 545.1 C739.2 546.8 741.2 550.8 742.0 555.0 C742.8 559.2 743.1 565.5 742.4 570.3 C741.7 575.1 740.9 580.3 738.0 584.0 C735.1 587.7 729.5 592.2 725.3 592.5 C721.1 592.8 716.0 590.0 713.0 586.0 C710.0 582.0 707.9 573.8 707.2 568.3Z" fill="#98c9f1" stroke="#98c9f1" stroke-width="12.0" stroke-linejoin="round" stroke-linecap="round"/>
<path d="M721.3 592.0 L728.3 592.0 L728.3 691.2 L721.3 691.2Z" fill="#98c9f1" stroke="#98c9f1" stroke-width="12.0" stroke-linejoin="round" stroke-linecap="round"/>
<path d="M724.3 652.0 C723.0 653.7 719.0 648.7 716.0 646.0 C713.0 643.3 708.6 640.0 706.0 636.0 C703.4 632.0 701.2 626.7 700.5 622.0 C699.8 617.3 700.5 611.9 701.5 608.0 C702.5 604.1 704.3 597.8 706.2 598.5 C708.1 599.2 710.5 607.8 713.0 612.0 C715.5 616.2 719.5 620.0 721.3 624.0 C723.1 628.0 723.5 631.3 724.0 636.0 C724.5 640.7 725.6 650.3 724.3 652.0Z" fill="#98c9f1" stroke="#98c9f1" stroke-width="12.0" stroke-linejoin="round" stroke-linecap="round"/>
<path d="M726.0 643.0 C727.8 644.0 733.7 638.8 737.0 636.0 C740.3 633.2 743.7 629.8 746.0 626.0 C748.3 622.2 750.2 617.0 751.0 613.0 C751.8 609.0 751.4 605.1 751.0 602.0 C750.6 598.9 750.3 593.8 748.5 594.5 C746.7 595.2 743.2 602.1 740.0 606.0 C736.8 609.9 731.3 614.0 729.0 618.0 C726.7 622.0 726.5 625.8 726.0 630.0 C725.5 634.2 724.2 642.0 726.0 643.0Z" fill="#98c9f1" stroke="#98c9f1" stroke-width="12.0" stroke-linejoin="round" stroke-linecap="round"/>
<path d="M721.3 592.0 L728.3 592.0 L728.3 691.2 L721.3 691.2Z" fill="#98c9f1" stroke="#20a226" stroke-width="4.0" stroke-linejoin="round" stroke-linecap="butt"/>
<path d="M721.3 592.0 L728.3 592.0 L728.3 691.2 L721.3 691.2Z" fill="none" stroke="#22d62a" stroke-width="2.8" stroke-linejoin="round" stroke-linecap="butt"/>
<path d="M724.3 652.0 C723.0 653.7 719.0 648.7 716.0 646.0 C713.0 643.3 708.6 640.0 706.0 636.0 C703.4 632.0 701.2 626.7 700.5 622.0 C699.8 617.3 700.5 611.9 701.5 608.0 C702.5 604.1 704.3 597.8 706.2 598.5 C708.1 599.2 710.5 607.8 713.0 612.0 C715.5 616.2 719.5 620.0 721.3 624.0 C723.1 628.0 723.5 631.3 724.0 636.0 C724.5 640.7 725.6 650.3 724.3 652.0Z" fill="#98c9f1" stroke="#20a226" stroke-width="4.0" stroke-linejoin="round" stroke-linecap="round"/>
<path d="M724.3 652.0 C723.0 653.7 719.0 648.7 716.0 646.0 C713.0 643.3 708.6 640.0 706.0 636.0 C703.4 632.0 701.2 626.7 700.5 622.0 C699.8 617.3 700.5 611.9 701.5 608.0 C702.5 604.1 704.3 597.8 706.2 598.5 C708.1 599.2 710.5 607.8 713.0 612.0 C715.5 616.2 719.5 620.0 721.3 624.0 C723.1 628.0 723.5 631.3 724.0 636.0 C724.5 640.7 725.6 650.3 724.3 652.0Z" fill="none" stroke="#22d62a" stroke-width="2.8" stroke-linejoin="round" stroke-linecap="round"/>
<path d="M726.0 643.0 C727.8 644.0 733.7 638.8 737.0 636.0 C740.3 633.2 743.7 629.8 746.0 626.0 C748.3 622.2 750.2 617.0 751.0 613.0 C751.8 609.0 751.4 605.1 751.0 602.0 C750.6 598.9 750.3 593.8 748.5 594.5 C746.7 595.2 743.2 602.1 740.0 606.0 C736.8 609.9 731.3 614.0 729.0 618.0 C726.7 622.0 726.5 625.8 726.0 630.0 C725.5 634.2 724.2 642.0 726.0 643.0Z" fill="#98c9f1" stroke="#20a226" stroke-width="4.0" stroke-linejoin="round" stroke-linecap="round"/>
<path d="M726.0 643.0 C727.8 644.0 733.7 638.8 737.0 636.0 C740.3 633.2 743.7 629.8 746.0 626.0 C748.3 622.2 750.2 617.0 751.0 613.0 C751.8 609.0 751.4 605.1 751.0 602.0 C750.6 598.9 750.3 593.8 748.5 594.5 C746.7 595.2 743.2 602.1 740.0 606.0 C736.8 609.9 731.3 614.0 729.0 618.0 C726.7 622.0 726.5 625.8 726.0 630.0 C725.5 634.2 724.2 642.0 726.0 643.0Z" fill="none" stroke="#22d62a" stroke-width="2.8" stroke-linejoin="round" stroke-linecap="round"/>
<path d="M707.2 568.3 C706.5 562.8 707.7 557.0 709.0 553.0 C710.3 549.0 713.2 545.4 715.2 544.1 C717.2 542.8 719.2 544.2 721.0 545.0 C722.8 545.8 724.3 549.0 726.0 549.0 C727.7 549.0 729.1 545.6 731.0 545.0 C732.9 544.4 735.6 543.4 737.4 545.1 C739.2 546.8 741.2 550.8 742.0 555.0 C742.8 559.2 743.1 565.5 742.4 570.3 C741.7 575.1 740.9 580.3 738.0 584.0 C735.1 587.7 729.5 592.2 725.3 592.5 C721.1 592.8 716.0 590.0 713.0 586.0 C710.0 582.0 707.9 573.8 707.2 568.3Z" fill="#98c9f1" stroke="#a9151c" stroke-width="4.4" stroke-linejoin="round" stroke-linecap="round"/>
<path d="M707.2 568.3 C706.5 562.8 707.7 557.0 709.0 553.0 C710.3 549.0 713.2 545.4 715.2 544.1 C717.2 542.8 719.2 544.2 721.0 545.0 C722.8 545.8 724.3 549.0 726.0 549.0 C727.7 549.0 729.1 545.6 731.0 545.0 C732.9 544.4 735.6 543.4 737.4 545.1 C739.2 546.8 741.2 550.8 742.0 555.0 C742.8 559.2 743.1 565.5 742.4 570.3 C741.7 575.1 740.9 580.3 738.0 584.0 C735.1 587.7 729.5 592.2 725.3 592.5 C721.1 592.8 716.0 590.0 713.0 586.0 C710.0 582.0 707.9 573.8 707.2 568.3Z" fill="none" stroke="#e0121c" stroke-width="3.2" stroke-linejoin="round" stroke-linecap="round"/>
<path d="M730.0 546.0 C731.2 548.3 735.5 554.7 737.0 560.0 C738.5 565.3 739.3 573.3 739.0 578.0 C738.7 582.7 735.7 586.3 735.0 588.0" fill="none" stroke="#a9151c" stroke-width="3.8" stroke-linejoin="round" stroke-linecap="round"/>
<path d="M730.0 546.0 C731.2 548.3 735.5 554.7 737.0 560.0 C738.5 565.3 739.3 573.3 739.0 578.0 C738.7 582.7 735.7 586.3 735.0 588.0" fill="none" stroke="#e0121c" stroke-width="2.6" stroke-linejoin="round" stroke-linecap="round"/>
<path d="M569.6 740.6 L560.2 721.0 L571.3 724.5 L564.1 710.7 L583.3 721.8 L577.3 708.2 L591.8 717.5 L591.8 694.5 L608.0 709.0 L621.7 692.8 L620.8 722.7 L626.8 709.0 L633.6 721.0 L643.0 716.7 L638.7 740.6Z" fill="#7f9cba" stroke="#7f9cba" stroke-width="13.2" stroke-linejoin="round" stroke-linecap="round"/>
<path d="M569.6 740.6 L560.2 721.0 L571.3 724.5 L564.1 710.7 L583.3 721.8 L577.3 708.2 L591.8 717.5 L591.8 694.5 L608.0 709.0 L621.7 692.8 L620.8 722.7 L626.8 709.0 L633.6 721.0 L643.0 716.7 L638.7 740.6Z" fill="#98c9f1" stroke="#98c9f1" stroke-width="11.0" stroke-linejoin="round" stroke-linecap="round"/>
<path d="M569.6 740.6 L560.2 721.0 L571.3 724.5 L564.1 710.7 L583.3 721.8 L577.3 708.2 L591.8 717.5 L591.8 694.5 L608.0 709.0 L621.7 692.8 L620.8 722.7 L626.8 709.0 L633.6 721.0 L643.0 716.7 L638.7 740.6Z" fill="#98c9f1" stroke="#166018" stroke-width="4.4" stroke-linejoin="round" stroke-linecap="round"/>
<path d="M569.6 740.6 L560.2 721.0 L571.3 724.5 L564.1 710.7 L583.3 721.8 L577.3 708.2 L591.8 717.5 L591.8 694.5 L608.0 709.0 L621.7 692.8 L620.8 722.7 L626.8 709.0 L633.6 721.0 L643.0 716.7 L638.7 740.6Z" fill="none" stroke="#137a17" stroke-width="3.2" stroke-linejoin="round" stroke-linecap="round"/>
<path d="M682.8 704.6 C684.5 704.6 686.5 702.0 687.8 700.6 C689.1 699.2 690.1 697.7 690.8 696.1 C691.5 694.5 691.8 692.8 691.8 691.1 C691.8 689.4 691.4 687.5 690.6 686.1 C689.8 684.7 688.1 683.3 686.8 682.6 C685.5 681.9 684.1 681.8 682.8 681.8 C681.5 681.8 680.1 681.9 678.8 682.6 C677.5 683.3 675.8 684.7 675.0 686.1 C674.2 687.5 673.8 689.4 673.8 691.1 C673.8 692.8 674.1 694.5 674.8 696.1 C675.5 697.7 676.5 699.2 677.8 700.6 C679.1 702.0 681.1 704.6 682.8 704.6Z" fill="#7f9cba" stroke="#7f9cba" stroke-width="14.2" stroke-linejoin="round" stroke-linecap="round"/>
<path d="M687.1 707.1 C688.0 708.5 691.2 709.0 693.1 709.4 C695.0 709.9 696.8 710.0 698.5 709.8 C700.2 709.6 701.9 709.0 703.3 708.1 C704.7 707.3 706.2 706.0 707.1 704.6 C707.9 703.2 708.2 701.0 708.2 699.6 C708.2 698.1 707.5 696.9 706.9 695.7 C706.2 694.5 705.5 693.4 704.2 692.6 C702.9 691.9 700.9 691.1 699.3 691.1 C697.6 691.1 695.8 691.8 694.3 692.6 C692.9 693.4 691.5 694.6 690.5 695.9 C689.5 697.3 688.7 698.9 688.1 700.8 C687.5 702.6 686.3 705.7 687.1 707.1Z" fill="#7f9cba" stroke="#7f9cba" stroke-width="14.2" stroke-linejoin="round" stroke-linecap="round"/>
<path d="M687.1 712.1 C686.3 713.5 687.5 716.6 688.1 718.4 C688.7 720.3 689.5 721.9 690.5 723.3 C691.5 724.6 692.9 725.8 694.3 726.6 C695.8 727.4 697.6 728.1 699.3 728.1 C700.9 728.1 702.9 727.3 704.2 726.6 C705.5 725.8 706.2 724.7 706.9 723.5 C707.5 722.3 708.2 721.1 708.2 719.6 C708.2 718.2 707.9 716.0 707.1 714.6 C706.2 713.2 704.7 711.9 703.3 711.1 C701.9 710.2 700.2 709.6 698.5 709.4 C696.8 709.2 695.0 709.3 693.1 709.8 C691.2 710.2 688.0 710.7 687.1 712.1Z" fill="#7f9cba" stroke="#7f9cba" stroke-width="14.2" stroke-linejoin="round" stroke-linecap="round"/>
<path d="M682.8 714.6 C681.1 714.6 679.1 717.2 677.8 718.6 C676.5 720.0 675.5 721.5 674.8 723.1 C674.1 724.7 673.8 726.4 673.8 728.1 C673.8 729.8 674.2 731.7 675.0 733.1 C675.8 734.5 677.5 735.9 678.8 736.6 C680.1 737.3 681.5 737.4 682.8 737.4 C684.1 737.4 685.5 737.3 686.8 736.6 C688.1 735.9 689.8 734.5 690.6 733.1 C691.4 731.7 691.8 729.8 691.8 728.1 C691.8 726.4 691.5 724.7 690.8 723.1 C690.1 721.5 689.1 720.0 687.8 718.6 C686.5 717.2 684.5 714.6 682.8 714.6Z" fill="#7f9cba" stroke="#7f9cba" stroke-width="14.2" stroke-linejoin="round" stroke-linecap="round"/>
<path d="M678.5 712.1 C677.6 710.7 674.4 710.2 672.5 709.8 C670.6 709.3 668.8 709.2 667.1 709.4 C665.4 709.6 663.7 710.2 662.3 711.1 C660.9 711.9 659.4 713.2 658.5 714.6 C657.7 716.0 657.4 718.2 657.4 719.6 C657.4 721.1 658.1 722.3 658.7 723.5 C659.4 724.7 660.1 725.8 661.4 726.6 C662.7 727.3 664.7 728.1 666.3 728.1 C668.0 728.1 669.8 727.4 671.3 726.6 C672.7 725.8 674.1 724.6 675.1 723.3 C676.1 721.9 676.9 720.3 677.5 718.4 C678.1 716.6 679.3 713.5 678.5 712.1Z" fill="#7f9cba" stroke="#7f9cba" stroke-width="14.2" stroke-linejoin="round" stroke-linecap="round"/>
<path d="M678.5 707.1 C679.3 705.7 678.1 702.6 677.5 700.8 C676.9 698.9 676.1 697.3 675.1 695.9 C674.1 694.6 672.7 693.4 671.3 692.6 C669.8 691.8 668.0 691.1 666.3 691.1 C664.7 691.1 662.7 691.9 661.4 692.6 C660.1 693.4 659.4 694.5 658.7 695.7 C658.1 696.9 657.4 698.1 657.4 699.6 C657.4 701.0 657.7 703.2 658.5 704.6 C659.4 706.0 660.9 707.3 662.3 708.1 C663.7 709.0 665.4 709.6 667.1 709.8 C668.8 710.0 670.6 709.9 672.5 709.4 C674.4 709.0 677.6 708.5 678.5 707.1Z" fill="#7f9cba" stroke="#7f9cba" stroke-width="14.2" stroke-linejoin="round" stroke-linecap="round"/>
<path d="M682.8 704.6 C684.5 704.6 686.5 702.0 687.8 700.6 C689.1 699.2 690.1 697.7 690.8 696.1 C691.5 694.5 691.8 692.8 691.8 691.1 C691.8 689.4 691.4 687.5 690.6 686.1 C689.8 684.7 688.1 683.3 686.8 682.6 C685.5 681.9 684.1 681.8 682.8 681.8 C681.5 681.8 680.1 681.9 678.8 682.6 C677.5 683.3 675.8 684.7 675.0 686.1 C674.2 687.5 673.8 689.4 673.8 691.1 C673.8 692.8 674.1 694.5 674.8 696.1 C675.5 697.7 676.5 699.2 677.8 700.6 C679.1 702.0 681.1 704.6 682.8 704.6Z" fill="#98c9f1" stroke="#98c9f1" stroke-width="12.0" stroke-linejoin="round" stroke-linecap="round"/>
<path d="M687.1 707.1 C688.0 708.5 691.2 709.0 693.1 709.4 C695.0 709.9 696.8 710.0 698.5 709.8 C700.2 709.6 701.9 709.0 703.3 708.1 C704.7 707.3 706.2 706.0 707.1 704.6 C707.9 703.2 708.2 701.0 708.2 699.6 C708.2 698.1 707.5 696.9 706.9 695.7 C706.2 694.5 705.5 693.4 704.2 692.6 C702.9 691.9 700.9 691.1 699.3 691.1 C697.6 691.1 695.8 691.8 694.3 692.6 C692.9 693.4 691.5 694.6 690.5 695.9 C689.5 697.3 688.7 698.9 688.1 700.8 C687.5 702.6 686.3 705.7 687.1 707.1Z" fill="#98c9f1" stroke="#98c9f1" stroke-width="12.0" stroke-linejoin="round" stroke-linecap="round"/>
<path d="M687.1 712.1 C686.3 713.5 687.5 716.6 688.1 718.4 C688.7 720.3 689.5 721.9 690.5 723.3 C691.5 724.6 692.9 725.8 694.3 726.6 C695.8 727.4 697.6 728.1 699.3 728.1 C700.9 728.1 702.9 727.3 704.2 726.6 C705.5 725.8 706.2 724.7 706.9 723.5 C707.5 722.3 708.2 721.1 708.2 719.6 C708.2 718.2 707.9 716.0 707.1 714.6 C706.2 713.2 704.7 711.9 703.3 711.1 C701.9 710.2 700.2 709.6 698.5 709.4 C696.8 709.2 695.0 709.3 693.1 709.8 C691.2 710.2 688.0 710.7 687.1 712.1Z" fill="#98c9f1" stroke="#98c9f1" stroke-width="12.0" stroke-linejoin="round" stroke-linecap="round"/>
<path d="M682.8 714.6 C681.1 714.6 679.1 717.2 677.8 718.6 C676.5 720.0 675.5 721.5 674.8 723.1 C674.1 724.7 673.8 726.4 673.8 728.1 C673.8 729.8 674.2 731.7 675.0 733.1 C675.8 734.5 677.5 735.9 678.8 736.6 C680.1 737.3 681.5 737.4 682.8 737.4 C684.1 737.4 685.5 737.3 686.8 736.6 C688.1 735.9 689.8 734.5 690.6 733.1 C691.4 731.7 691.8 729.8 691.8 728.1 C691.8 726.4 691.5 724.7 690.8 723.1 C690.1 721.5 689.1 720.0 687.8 718.6 C686.5 717.2 684.5 714.6 682.8 714.6Z" fill="#98c9f1" stroke="#98c9f1" stroke-width="12.0" stroke-linejoin="round" stroke-linecap="round"/>
<path d="M678.5 712.1 C677.6 710.7 674.4 710.2 672.5 709.8 C670.6 709.3 668.8 709.2 667.1 709.4 C665.4 709.6 663.7 710.2 662.3 711.1 C660.9 711.9 659.4 713.2 658.5 714.6 C657.7 716.0 657.4 718.2 657.4 719.6 C657.4 721.1 658.1 722.3 658.7 723.5 C659.4 724.7 660.1 725.8 661.4 726.6 C662.7 727.3 664.7 728.1 666.3 728.1 C668.0 728.1 669.8 727.4 671.3 726.6 C672.7 725.8 674.1 724.6 675.1 723.3 C676.1 721.9 676.9 720.3 677.5 718.4 C678.1 716.6 679.3 713.5 678.5 712.1Z" fill="#98c9f1" stroke="#98c9f1" stroke-width="12.0" stroke-linejoin="round" stroke-linecap="round"/>
<path d="M678.5 707.1 C679.3 705.7 678.1 702.6 677.5 700.8 C676.9 698.9 676.1 697.3 675.1 695.9 C674.1 694.6 672.7 693.4 671.3 692.6 C669.8 691.8 668.0 691.1 666.3 691.1 C664.7 691.1 662.7 691.9 661.4 692.6 C660.1 693.4 659.4 694.5 658.7 695.7 C658.1 696.9 657.4 698.1 657.4 699.6 C657.4 701.0 657.7 703.2 658.5 704.6 C659.4 706.0 660.9 707.3 662.3 708.1 C663.7 709.0 665.4 709.6 667.1 709.8 C668.8 710.0 670.6 709.9 672.5 709.4 C674.4 709.0 677.6 708.5 678.5 707.1Z" fill="#98c9f1" stroke="#98c9f1" stroke-width="12.0" stroke-linejoin="round" stroke-linecap="round"/>
<path d="M682.8 704.6 C684.5 704.6 686.5 702.0 687.8 700.6 C689.1 699.2 690.1 697.7 690.8 696.1 C691.5 694.5 691.8 692.8 691.8 691.1 C691.8 689.4 691.4 687.5 690.6 686.1 C689.8 684.7 688.1 683.3 686.8 682.6 C685.5 681.9 684.1 681.8 682.8 681.8 C681.5 681.8 680.1 681.9 678.8 682.6 C677.5 683.3 675.8 684.7 675.0 686.1 C674.2 687.5 673.8 689.4 673.8 691.1 C673.8 692.8 674.1 694.5 674.8 696.1 C675.5 697.7 676.5 699.2 677.8 700.6 C679.1 702.0 681.1 704.6 682.8 704.6Z" fill="#98c9f1" stroke="#a9151c" stroke-width="4.2" stroke-linejoin="round"/>
<path d="M682.8 704.6 C684.5 704.6 686.5 702.0 687.8 700.6 C689.1 699.2 690.1 697.7 690.8 696.1 C691.5 694.5 691.8 692.8 691.8 691.1 C691.8 689.4 691.4 687.5 690.6 686.1 C689.8 684.7 688.1 683.3 686.8 682.6 C685.5 681.9 684.1 681.8 682.8 681.8 C681.5 681.8 680.1 681.9 678.8 682.6 C677.5 683.3 675.8 684.7 675.0 686.1 C674.2 687.5 673.8 689.4 673.8 691.1 C673.8 692.8 674.1 694.5 674.8 696.1 C675.5 697.7 676.5 699.2 677.8 700.6 C679.1 702.0 681.1 704.6 682.8 704.6Z" fill="none" stroke="#e0121c" stroke-width="3.1" stroke-linejoin="round"/>
<path d="M687.1 707.1 C688.0 708.5 691.2 709.0 693.1 709.4 C695.0 709.9 696.8 710.0 698.5 709.8 C700.2 709.6 701.9 709.0 703.3 708.1 C704.7 707.3 706.2 706.0 707.1 704.6 C707.9 703.2 708.2 701.0 708.2 699.6 C708.2 698.1 707.5 696.9 706.9 695.7 C706.2 694.5 705.5 693.4 704.2 692.6 C702.9 691.9 700.9 691.1 699.3 691.1 C697.6 691.1 695.8 691.8 694.3 692.6 C692.9 693.4 691.5 694.6 690.5 695.9 C689.5 697.3 688.7 698.9 688.1 700.8 C687.5 702.6 686.3 705.7 687.1 707.1Z" fill="#98c9f1" stroke="#a9151c" stroke-width="4.2" stroke-linejoin="round"/>
<path d="M687.1 707.1 C688.0 708.5 691.2 709.0 693.1 709.4 C695.0 709.9 696.8 710.0 698.5 709.8 C700.2 709.6 701.9 709.0 703.3 708.1 C704.7 707.3 706.2 706.0 707.1 704.6 C707.9 703.2 708.2 701.0 708.2 699.6 C708.2 698.1 707.5 696.9 706.9 695.7 C706.2 694.5 705.5 693.4 704.2 692.6 C702.9 691.9 700.9 691.1 699.3 691.1 C697.6 691.1 695.8 691.8 694.3 692.6 C692.9 693.4 691.5 694.6 690.5 695.9 C689.5 697.3 688.7 698.9 688.1 700.8 C687.5 702.6 686.3 705.7 687.1 707.1Z" fill="none" stroke="#e0121c" stroke-width="3.1" stroke-linejoin="round"/>
<path d="M687.1 712.1 C686.3 713.5 687.5 716.6 688.1 718.4 C688.7 720.3 689.5 721.9 690.5 723.3 C691.5 724.6 692.9 725.8 694.3 726.6 C695.8 727.4 697.6 728.1 699.3 728.1 C700.9 728.1 702.9 727.3 704.2 726.6 C705.5 725.8 706.2 724.7 706.9 723.5 C707.5 722.3 708.2 721.1 708.2 719.6 C708.2 718.2 707.9 716.0 707.1 714.6 C706.2 713.2 704.7 711.9 703.3 711.1 C701.9 710.2 700.2 709.6 698.5 709.4 C696.8 709.2 695.0 709.3 693.1 709.8 C691.2 710.2 688.0 710.7 687.1 712.1Z" fill="#98c9f1" stroke="#a9151c" stroke-width="4.2" stroke-linejoin="round"/>
<path d="M687.1 712.1 C686.3 713.5 687.5 716.6 688.1 718.4 C688.7 720.3 689.5 721.9 690.5 723.3 C691.5 724.6 692.9 725.8 694.3 726.6 C695.8 727.4 697.6 728.1 699.3 728.1 C700.9 728.1 702.9 727.3 704.2 726.6 C705.5 725.8 706.2 724.7 706.9 723.5 C707.5 722.3 708.2 721.1 708.2 719.6 C708.2 718.2 707.9 716.0 707.1 714.6 C706.2 713.2 704.7 711.9 703.3 711.1 C701.9 710.2 700.2 709.6 698.5 709.4 C696.8 709.2 695.0 709.3 693.1 709.8 C691.2 710.2 688.0 710.7 687.1 712.1Z" fill="none" stroke="#e0121c" stroke-width="3.1" stroke-linejoin="round"/>
<path d="M682.8 714.6 C681.1 714.6 679.1 717.2 677.8 718.6 C676.5 720.0 675.5 721.5 674.8 723.1 C674.1 724.7 673.8 726.4 673.8 728.1 C673.8 729.8 674.2 731.7 675.0 733.1 C675.8 734.5 677.5 735.9 678.8 736.6 C680.1 737.3 681.5 737.4 682.8 737.4 C684.1 737.4 685.5 737.3 686.8 736.6 C688.1 735.9 689.8 734.5 690.6 733.1 C691.4 731.7 691.8 729.8 691.8 728.1 C691.8 726.4 691.5 724.7 690.8 723.1 C690.1 721.5 689.1 720.0 687.8 718.6 C686.5 717.2 684.5 714.6 682.8 714.6Z" fill="#98c9f1" stroke="#a9151c" stroke-width="4.2" stroke-linejoin="round"/>
<path d="M682.8 714.6 C681.1 714.6 679.1 717.2 677.8 718.6 C676.5 720.0 675.5 721.5 674.8 723.1 C674.1 724.7 673.8 726.4 673.8 728.1 C673.8 729.8 674.2 731.7 675.0 733.1 C675.8 734.5 677.5 735.9 678.8 736.6 C680.1 737.3 681.5 737.4 682.8 737.4 C684.1 737.4 685.5 737.3 686.8 736.6 C688.1 735.9 689.8 734.5 690.6 733.1 C691.4 731.7 691.8 729.8 691.8 728.1 C691.8 726.4 691.5 724.7 690.8 723.1 C690.1 721.5 689.1 720.0 687.8 718.6 C686.5 717.2 684.5 714.6 682.8 714.6Z" fill="none" stroke="#e0121c" stroke-width="3.1" stroke-linejoin="round"/>
<path d="M678.5 712.1 C677.6 710.7 674.4 710.2 672.5 709.8 C670.6 709.3 668.8 709.2 667.1 709.4 C665.4 709.6 663.7 710.2 662.3 711.1 C660.9 711.9 659.4 713.2 658.5 714.6 C657.7 716.0 657.4 718.2 657.4 719.6 C657.4 721.1 658.1 722.3 658.7 723.5 C659.4 724.7 660.1 725.8 661.4 726.6 C662.7 727.3 664.7 728.1 666.3 728.1 C668.0 728.1 669.8 727.4 671.3 726.6 C672.7 725.8 674.1 724.6 675.1 723.3 C676.1 721.9 676.9 720.3 677.5 718.4 C678.1 716.6 679.3 713.5 678.5 712.1Z" fill="#98c9f1" stroke="#a9151c" stroke-width="4.2" stroke-linejoin="round"/>
<path d="M678.5 712.1 C677.6 710.7 674.4 710.2 672.5 709.8 C670.6 709.3 668.8 709.2 667.1 709.4 C665.4 709.6 663.7 710.2 662.3 711.1 C660.9 711.9 659.4 713.2 658.5 714.6 C657.7 716.0 657.4 718.2 657.4 719.6 C657.4 721.1 658.1 722.3 658.7 723.5 C659.4 724.7 660.1 725.8 661.4 726.6 C662.7 727.3 664.7 728.1 666.3 728.1 C668.0 728.1 669.8 727.4 671.3 726.6 C672.7 725.8 674.1 724.6 675.1 723.3 C676.1 721.9 676.9 720.3 677.5 718.4 C678.1 716.6 679.3 713.5 678.5 712.1Z" fill="none" stroke="#e0121c" stroke-width="3.1" stroke-linejoin="round"/>
<path d="M678.5 707.1 C679.3 705.7 678.1 702.6 677.5 700.8 C676.9 698.9 676.1 697.3 675.1 695.9 C674.1 694.6 672.7 693.4 671.3 692.6 C669.8 691.8 668.0 691.1 666.3 691.1 C664.7 691.1 662.7 691.9 661.4 692.6 C660.1 693.4 659.4 694.5 658.7 695.7 C658.1 696.9 657.4 698.1 657.4 699.6 C657.4 701.0 657.7 703.2 658.5 704.6 C659.4 706.0 660.9 707.3 662.3 708.1 C663.7 709.0 665.4 709.6 667.1 709.8 C668.8 710.0 670.6 709.9 672.5 709.4 C674.4 709.0 677.6 708.5 678.5 707.1Z" fill="#98c9f1" stroke="#a9151c" stroke-width="4.2" stroke-linejoin="round"/>
<path d="M678.5 707.1 C679.3 705.7 678.1 702.6 677.5 700.8 C676.9 698.9 676.1 697.3 675.1 695.9 C674.1 694.6 672.7 693.4 671.3 692.6 C669.8 691.8 668.0 691.1 666.3 691.1 C664.7 691.1 662.7 691.9 661.4 692.6 C660.1 693.4 659.4 694.5 658.7 695.7 C658.1 696.9 657.4 698.1 657.4 699.6 C657.4 701.0 657.7 703.2 658.5 704.6 C659.4 706.0 660.9 707.3 662.3 708.1 C663.7 709.0 665.4 709.6 667.1 709.8 C668.8 710.0 670.6 709.9 672.5 709.4 C674.4 709.0 677.6 708.5 678.5 707.1Z" fill="none" stroke="#e0121c" stroke-width="3.1" stroke-linejoin="round"/>
<path d="M682.8 704.6 C684.5 704.6 686.5 702.0 687.8 700.6 C689.1 699.2 690.1 697.7 690.8 696.1 C691.5 694.5 691.8 692.8 691.8 691.1 C691.8 689.4 691.4 687.5 690.6 686.1 C689.8 684.7 688.1 683.3 686.8 682.6 C685.5 681.9 684.1 681.8 682.8 681.8 C681.5 681.8 680.1 681.9 678.8 682.6 C677.5 683.3 675.8 684.7 675.0 686.1 C674.2 687.5 673.8 689.4 673.8 691.1 C673.8 692.8 674.1 694.5 674.8 696.1 C675.5 697.7 676.5 699.2 677.8 700.6 C679.1 702.0 681.1 704.6 682.8 704.6Z" fill="none" stroke="#e0121c" stroke-width="3.1" stroke-linejoin="round"/>
<path d="M687.1 707.1 C688.0 708.5 691.2 709.0 693.1 709.4 C695.0 709.9 696.8 710.0 698.5 709.8 C700.2 709.6 701.9 709.0 703.3 708.1 C704.7 707.3 706.2 706.0 707.1 704.6 C707.9 703.2 708.2 701.0 708.2 699.6 C708.2 698.1 707.5 696.9 706.9 695.7 C706.2 694.5 705.5 693.4 704.2 692.6 C702.9 691.9 700.9 691.1 699.3 691.1 C697.6 691.1 695.8 691.8 694.3 692.6 C692.9 693.4 691.5 694.6 690.5 695.9 C689.5 697.3 688.7 698.9 688.1 700.8 C687.5 702.6 686.3 705.7 687.1 707.1Z" fill="none" stroke="#e0121c" stroke-width="3.1" stroke-linejoin="round"/>
<path d="M687.1 712.1 C686.3 713.5 687.5 716.6 688.1 718.4 C688.7 720.3 689.5 721.9 690.5 723.3 C691.5 724.6 692.9 725.8 694.3 726.6 C695.8 727.4 697.6 728.1 699.3 728.1 C700.9 728.1 702.9 727.3 704.2 726.6 C705.5 725.8 706.2 724.7 706.9 723.5 C707.5 722.3 708.2 721.1 708.2 719.6 C708.2 718.2 707.9 716.0 707.1 714.6 C706.2 713.2 704.7 711.9 703.3 711.1 C701.9 710.2 700.2 709.6 698.5 709.4 C696.8 709.2 695.0 709.3 693.1 709.8 C691.2 710.2 688.0 710.7 687.1 712.1Z" fill="none" stroke="#e0121c" stroke-width="3.1" stroke-linejoin="round"/>
<path d="M682.8 714.6 C681.1 714.6 679.1 717.2 677.8 718.6 C676.5 720.0 675.5 721.5 674.8 723.1 C674.1 724.7 673.8 726.4 673.8 728.1 C673.8 729.8 674.2 731.7 675.0 733.1 C675.8 734.5 677.5 735.9 678.8 736.6 C680.1 737.3 681.5 737.4 682.8 737.4 C684.1 737.4 685.5 737.3 686.8 736.6 C688.1 735.9 689.8 734.5 690.6 733.1 C691.4 731.7 691.8 729.8 691.8 728.1 C691.8 726.4 691.5 724.7 690.8 723.1 C690.1 721.5 689.1 720.0 687.8 718.6 C686.5 717.2 684.5 714.6 682.8 714.6Z" fill="none" stroke="#e0121c" stroke-width="3.1" stroke-linejoin="round"/>
<path d="M678.5 712.1 C677.6 710.7 674.4 710.2 672.5 709.8 C670.6 709.3 668.8 709.2 667.1 709.4 C665.4 709.6 663.7 710.2 662.3 711.1 C660.9 711.9 659.4 713.2 658.5 714.6 C657.7 716.0 657.4 718.2 657.4 719.6 C657.4 721.1 658.1 722.3 658.7 723.5 C659.4 724.7 660.1 725.8 661.4 726.6 C662.7 727.3 664.7 728.1 666.3 728.1 C668.0 728.1 669.8 727.4 671.3 726.6 C672.7 725.8 674.1 724.6 675.1 723.3 C676.1 721.9 676.9 720.3 677.5 718.4 C678.1 716.6 679.3 713.5 678.5 712.1Z" fill="none" stroke="#e0121c" stroke-width="3.1" stroke-linejoin="round"/>
<path d="M678.5 707.1 C679.3 705.7 678.1 702.6 677.5 700.8 C676.9 698.9 676.1 697.3 675.1 695.9 C674.1 694.6 672.7 693.4 671.3 692.6 C669.8 691.8 668.0 691.1 666.3 691.1 C664.7 691.1 662.7 691.9 661.4 692.6 C660.1 693.4 659.4 694.5 658.7 695.7 C658.1 696.9 657.4 698.1 657.4 699.6 C657.4 701.0 657.7 703.2 658.5 704.6 C659.4 706.0 660.9 707.3 662.3 708.1 C663.7 709.0 665.4 709.6 667.1 709.8 C668.8 710.0 670.6 709.9 672.5 709.4 C674.4 709.0 677.6 708.5 678.5 707.1Z" fill="none" stroke="#e0121c" stroke-width="3.1" stroke-linejoin="round"/>
<circle cx="682.8" cy="709.6" r="8.5" fill="#98c9f1" stroke="#bab308" stroke-width="4.6"/>
<circle cx="682.8" cy="709.6" r="8.5" fill="none" stroke="#f7ee00" stroke-width="3.6"/>
<path d="M765.6 553.2 C766.5 551.4 767.6 551.9 770.0 554.0 C772.4 556.1 776.3 562.0 780.0 566.0 C783.7 570.0 788.2 574.3 792.0 578.0 C795.8 581.7 800.4 584.3 803.0 588.0 C805.6 591.7 807.8 595.9 807.5 600.0 C807.2 604.1 803.9 610.4 801.0 612.6 C798.1 614.9 793.3 614.1 790.0 613.5 C786.7 612.9 783.8 611.8 781.0 609.0 C778.2 606.2 775.3 601.8 773.0 597.0 C770.7 592.2 768.4 585.3 767.0 580.0 C765.6 574.7 765.0 569.5 764.8 565.0 C764.6 560.5 764.7 555.0 765.6 553.2Z" fill="#7f9cba" stroke="#7f9cba" stroke-width="13.2" stroke-linejoin="round" stroke-linecap="round"/>
<path d="M765.6 553.2 C766.5 551.4 767.6 551.9 770.0 554.0 C772.4 556.1 776.3 562.0 780.0 566.0 C783.7 570.0 788.2 574.3 792.0 578.0 C795.8 581.7 800.4 584.3 803.0 588.0 C805.6 591.7 807.8 595.9 807.5 600.0 C807.2 604.1 803.9 610.4 801.0 612.6 C798.1 614.9 793.3 614.1 790.0 613.5 C786.7 612.9 783.8 611.8 781.0 609.0 C778.2 606.2 775.3 601.8 773.0 597.0 C770.7 592.2 768.4 585.3 767.0 580.0 C765.6 574.7 765.0 569.5 764.8 565.0 C764.6 560.5 764.7 555.0 765.6 553.2Z" fill="#98c9f1" stroke="#98c9f1" stroke-width="11.0" stroke-linejoin="round" stroke-linecap="round"/>
<path d="M765.6 553.2 C766.5 551.4 767.6 551.9 770.0 554.0 C772.4 556.1 776.3 562.0 780.0 566.0 C783.7 570.0 788.2 574.3 792.0 578.0 C795.8 581.7 800.4 584.3 803.0 588.0 C805.6 591.7 807.8 595.9 807.5 600.0 C807.2 604.1 803.9 610.4 801.0 612.6 C798.1 614.9 793.3 614.1 790.0 613.5 C786.7 612.9 783.8 611.8 781.0 609.0 C778.2 606.2 775.3 601.8 773.0 597.0 C770.7 592.2 768.4 585.3 767.0 580.0 C765.6 574.7 765.0 569.5 764.8 565.0 C764.6 560.5 764.7 555.0 765.6 553.2Z" fill="#98c9f1" stroke="#208a32" stroke-width="4.0" stroke-linejoin="round" stroke-linecap="round"/>
<path d="M765.6 553.2 C766.5 551.4 767.6 551.9 770.0 554.0 C772.4 556.1 776.3 562.0 780.0 566.0 C783.7 570.0 788.2 574.3 792.0 578.0 C795.8 581.7 800.4 584.3 803.0 588.0 C805.6 591.7 807.8 595.9 807.5 600.0 C807.2 604.1 803.9 610.4 801.0 612.6 C798.1 614.9 793.3 614.1 790.0 613.5 C786.7 612.9 783.8 611.8 781.0 609.0 C778.2 606.2 775.3 601.8 773.0 597.0 C770.7 592.2 768.4 585.3 767.0 580.0 C765.6 574.7 765.0 569.5 764.8 565.0 C764.6 560.5 764.7 555.0 765.6 553.2Z" fill="none" stroke="#22b43a" stroke-width="2.8" stroke-linejoin="round" stroke-linecap="round"/>
<path d="M856.3 538.1 C855.9 536.3 854.4 539.7 852.0 541.0 C849.6 542.3 845.5 543.5 842.2 546.0 C838.9 548.5 835.0 552.0 832.0 556.0 C829.0 560.0 826.0 565.3 824.0 570.0 C822.0 574.7 820.2 580.2 820.0 584.4 C819.8 588.6 821.0 592.5 823.0 595.0 C825.0 597.5 829.2 599.2 832.0 599.5 C834.8 599.8 837.7 598.9 840.0 597.0 C842.3 595.1 844.3 592.5 846.0 588.0 C847.7 583.5 848.6 576.0 850.0 570.0 C851.4 564.0 853.2 557.3 854.3 552.0 C855.3 546.7 856.7 539.9 856.3 538.1Z" fill="#7f9cba" stroke="#7f9cba" stroke-width="13.2" stroke-linejoin="round" stroke-linecap="round"/>
<path d="M856.3 538.1 C855.9 536.3 854.4 539.7 852.0 541.0 C849.6 542.3 845.5 543.5 842.2 546.0 C838.9 548.5 835.0 552.0 832.0 556.0 C829.0 560.0 826.0 565.3 824.0 570.0 C822.0 574.7 820.2 580.2 820.0 584.4 C819.8 588.6 821.0 592.5 823.0 595.0 C825.0 597.5 829.2 599.2 832.0 599.5 C834.8 599.8 837.7 598.9 840.0 597.0 C842.3 595.1 844.3 592.5 846.0 588.0 C847.7 583.5 848.6 576.0 850.0 570.0 C851.4 564.0 853.2 557.3 854.3 552.0 C855.3 546.7 856.7 539.9 856.3 538.1Z" fill="#98c9f1" stroke="#98c9f1" stroke-width="11.0" stroke-linejoin="round" stroke-linecap="round"/>
<path d="M856.3 538.1 C855.9 536.3 854.4 539.7 852.0 541.0 C849.6 542.3 845.5 543.5 842.2 546.0 C838.9 548.5 835.0 552.0 832.0 556.0 C829.0 560.0 826.0 565.3 824.0 570.0 C822.0 574.7 820.2 580.2 820.0 584.4 C819.8 588.6 821.0 592.5 823.0 595.0 C825.0 597.5 829.2 599.2 832.0 599.5 C834.8 599.8 837.7 598.9 840.0 597.0 C842.3 595.1 844.3 592.5 846.0 588.0 C847.7 583.5 848.6 576.0 850.0 570.0 C851.4 564.0 853.2 557.3 854.3 552.0 C855.3 546.7 856.7 539.9 856.3 538.1Z" fill="#98c9f1" stroke="#208a32" stroke-width="4.0" stroke-linejoin="round" stroke-linecap="round"/>
<path d="M856.3 538.1 C855.9 536.3 854.4 539.7 852.0 541.0 C849.6 542.3 845.5 543.5 842.2 546.0 C838.9 548.5 835.0 552.0 832.0 556.0 C829.0 560.0 826.0 565.3 824.0 570.0 C822.0 574.7 820.2 580.2 820.0 584.4 C819.8 588.6 821.0 592.5 823.0 595.0 C825.0 597.5 829.2 599.2 832.0 599.5 C834.8 599.8 837.7 598.9 840.0 597.0 C842.3 595.1 844.3 592.5 846.0 588.0 C847.7 583.5 848.6 576.0 850.0 570.0 C851.4 564.0 853.2 557.3 854.3 552.0 C855.3 546.7 856.7 539.9 856.3 538.1Z" fill="none" stroke="#22b43a" stroke-width="2.8" stroke-linejoin="round" stroke-linecap="round"/>
<path d="M830.1 628.8 C837.1 623.8 839.6 615.8 836.1 612.3 C833.6 609.8 830.6 611.3 830.1 614.3 C829.6 611.3 826.6 609.8 824.1 612.3 C820.6 615.8 823.1 623.8 830.1 628.8Z" fill="#7f9cba" stroke="#7f9cba" stroke-width="13.2" stroke-linejoin="round" stroke-linecap="round"/>
<path d="M835.0 630.9 C843.5 632.3 851.0 628.4 851.0 623.4 C851.0 619.9 847.8 618.8 845.3 620.6 C847.1 618.1 846.0 614.9 842.5 614.9 C837.5 614.9 833.6 622.4 835.0 630.9Z" fill="#7f9cba" stroke="#7f9cba" stroke-width="13.2" stroke-linejoin="round" stroke-linecap="round"/>
<path d="M837.1 635.8 C842.1 642.8 850.1 645.3 853.6 641.8 C856.1 639.3 854.6 636.3 851.6 635.8 C854.6 635.3 856.1 632.3 853.6 629.8 C850.1 626.3 842.1 628.8 837.1 635.8Z" fill="#7f9cba" stroke="#7f9cba" stroke-width="13.2" stroke-linejoin="round" stroke-linecap="round"/>
<path d="M835.0 640.7 C833.6 649.2 837.5 656.7 842.5 656.7 C846.0 656.7 847.1 653.5 845.3 651.0 C847.8 652.8 851.0 651.7 851.0 648.2 C851.0 643.2 843.5 639.3 835.0 640.7Z" fill="#7f9cba" stroke="#7f9cba" stroke-width="13.2" stroke-linejoin="round" stroke-linecap="round"/>
<path d="M830.1 642.8 C823.1 647.8 820.6 655.8 824.1 659.3 C826.6 661.8 829.6 660.3 830.1 657.3 C830.6 660.3 833.6 661.8 836.1 659.3 C839.6 655.8 837.1 647.8 830.1 642.8Z" fill="#7f9cba" stroke="#7f9cba" stroke-width="13.2" stroke-linejoin="round" stroke-linecap="round"/>
<path d="M825.2 640.7 C816.7 639.3 809.2 643.2 809.2 648.2 C809.2 651.7 812.4 652.8 814.9 651.0 C813.1 653.5 814.2 656.7 817.7 656.7 C822.7 656.7 826.6 649.2 825.2 640.7Z" fill="#7f9cba" stroke="#7f9cba" stroke-width="13.2" stroke-linejoin="round" stroke-linecap="round"/>
<path d="M823.1 635.8 C818.1 628.8 810.1 626.3 806.6 629.8 C804.1 632.3 805.6 635.3 808.6 635.8 C805.6 636.3 804.1 639.3 806.6 641.8 C810.1 645.3 818.1 642.8 823.1 635.8Z" fill="#7f9cba" stroke="#7f9cba" stroke-width="13.2" stroke-linejoin="round" stroke-linecap="round"/>
<path d="M825.2 630.9 C826.6 622.4 822.7 614.9 817.7 614.9 C814.2 614.9 813.1 618.1 814.9 620.6 C812.4 618.8 809.2 619.9 809.2 623.4 C809.2 628.4 816.7 632.3 825.2 630.9Z" fill="#7f9cba" stroke="#7f9cba" stroke-width="13.2" stroke-linejoin="round" stroke-linecap="round"/>
<path d="M830.1 628.8 C837.1 623.8 839.6 615.8 836.1 612.3 C833.6 609.8 830.6 611.3 830.1 614.3 C829.6 611.3 826.6 609.8 824.1 612.3 C820.6 615.8 823.1 623.8 830.1 628.8Z" fill="#98c9f1" stroke="#98c9f1" stroke-width="11.0" stroke-linejoin="round" stroke-linecap="round"/>
<path d="M835.0 630.9 C843.5 632.3 851.0 628.4 851.0 623.4 C851.0 619.9 847.8 618.8 845.3 620.6 C847.1 618.1 846.0 614.9 842.5 614.9 C837.5 614.9 833.6 622.4 835.0 630.9Z" fill="#98c9f1" stroke="#98c9f1" stroke-width="11.0" stroke-linejoin="round" stroke-linecap="round"/>
<path d="M837.1 635.8 C842.1 642.8 850.1 645.3 853.6 641.8 C856.1 639.3 854.6 636.3 851.6 635.8 C854.6 635.3 856.1 632.3 853.6 629.8 C850.1 626.3 842.1 628.8 837.1 635.8Z" fill="#98c9f1" stroke="#98c9f1" stroke-width="11.0" stroke-linejoin="round" stroke-linecap="round"/>
<path d="M835.0 640.7 C833.6 649.2 837.5 656.7 842.5 656.7 C846.0 656.7 847.1 653.5 845.3 651.0 C847.8 652.8 851.0 651.7 851.0 648.2 C851.0 643.2 843.5 639.3 835.0 640.7Z" fill="#98c9f1" stroke="#98c9f1" stroke-width="11.0" stroke-linejoin="round" stroke-linecap="round"/>
<path d="M830.1 642.8 C823.1 647.8 820.6 655.8 824.1 659.3 C826.6 661.8 829.6 660.3 830.1 657.3 C830.6 660.3 833.6 661.8 836.1 659.3 C839.6 655.8 837.1 647.8 830.1 642.8Z" fill="#98c9f1" stroke="#98c9f1" stroke-width="11.0" stroke-linejoin="round" stroke-linecap="round"/>
<path d="M825.2 640.7 C816.7 639.3 809.2 643.2 809.2 648.2 C809.2 651.7 812.4 652.8 814.9 651.0 C813.1 653.5 814.2 656.7 817.7 656.7 C822.7 656.7 826.6 649.2 825.2 640.7Z" fill="#98c9f1" stroke="#98c9f1" stroke-width="11.0" stroke-linejoin="round" stroke-linecap="round"/>
<path d="M823.1 635.8 C818.1 628.8 810.1 626.3 806.6 629.8 C804.1 632.3 805.6 635.3 808.6 635.8 C805.6 636.3 804.1 639.3 806.6 641.8 C810.1 645.3 818.1 642.8 823.1 635.8Z" fill="#98c9f1" stroke="#98c9f1" stroke-width="11.0" stroke-linejoin="round" stroke-linecap="round"/>
<path d="M825.2 630.9 C826.6 622.4 822.7 614.9 817.7 614.9 C814.2 614.9 813.1 618.1 814.9 620.6 C812.4 618.8 809.2 619.9 809.2 623.4 C809.2 628.4 816.7 632.3 825.2 630.9Z" fill="#98c9f1" stroke="#98c9f1" stroke-width="11.0" stroke-linejoin="round" stroke-linecap="round"/>
<path d="M830.1 628.8 C837.1 623.8 839.6 615.8 836.1 612.3 C833.6 609.8 830.6 611.3 830.1 614.3 C829.6 611.3 826.6 609.8 824.1 612.3 C820.6 615.8 823.1 623.8 830.1 628.8Z" fill="#98c9f1" stroke="#bab308" stroke-width="3.2" stroke-linejoin="round"/>
<path d="M830.1 628.8 C837.1 623.8 839.6 615.8 836.1 612.3 C833.6 609.8 830.6 611.3 830.1 614.3 C829.6 611.3 826.6 609.8 824.1 612.3 C820.6 615.8 823.1 623.8 830.1 628.8Z" fill="none" stroke="#f7ee00" stroke-width="2.3" stroke-linejoin="round"/>
<path d="M835.0 630.9 C843.5 632.3 851.0 628.4 851.0 623.4 C851.0 619.9 847.8 618.8 845.3 620.6 C847.1 618.1 846.0 614.9 842.5 614.9 C837.5 614.9 833.6 622.4 835.0 630.9Z" fill="#98c9f1" stroke="#bab308" stroke-width="3.2" stroke-linejoin="round"/>
<path d="M835.0 630.9 C843.5 632.3 851.0 628.4 851.0 623.4 C851.0 619.9 847.8 618.8 845.3 620.6 C847.1 618.1 846.0 614.9 842.5 614.9 C837.5 614.9 833.6 622.4 835.0 630.9Z" fill="none" stroke="#f7ee00" stroke-width="2.3" stroke-linejoin="round"/>
<path d="M837.1 635.8 C842.1 642.8 850.1 645.3 853.6 641.8 C856.1 639.3 854.6 636.3 851.6 635.8 C854.6 635.3 856.1 632.3 853.6 629.8 C850.1 626.3 842.1 628.8 837.1 635.8Z" fill="#98c9f1" stroke="#bab308" stroke-width="3.2" stroke-linejoin="round"/>
<path d="M837.1 635.8 C842.1 642.8 850.1 645.3 853.6 641.8 C856.1 639.3 854.6 636.3 851.6 635.8 C854.6 635.3 856.1 632.3 853.6 629.8 C850.1 626.3 842.1 628.8 837.1 635.8Z" fill="none" stroke="#f7ee00" stroke-width="2.3" stroke-linejoin="round"/>
<path d="M835.0 640.7 C833.6 649.2 837.5 656.7 842.5 656.7 C846.0 656.7 847.1 653.5 845.3 651.0 C847.8 652.8 851.0 651.7 851.0 648.2 C851.0 643.2 843.5 639.3 835.0 640.7Z" fill="#98c9f1" stroke="#bab308" stroke-width="3.2" stroke-linejoin="round"/>
<path d="M835.0 640.7 C833.6 649.2 837.5 656.7 842.5 656.7 C846.0 656.7 847.1 653.5 845.3 651.0 C847.8 652.8 851.0 651.7 851.0 648.2 C851.0 643.2 843.5 639.3 835.0 640.7Z" fill="none" stroke="#f7ee00" stroke-width="2.3" stroke-linejoin="round"/>
<path d="M830.1 642.8 C823.1 647.8 820.6 655.8 824.1 659.3 C826.6 661.8 829.6 660.3 830.1 657.3 C830.6 660.3 833.6 661.8 836.1 659.3 C839.6 655.8 837.1 647.8 830.1 642.8Z" fill="#98c9f1" stroke="#bab308" stroke-width="3.2" stroke-linejoin="round"/>
<path d="M830.1 642.8 C823.1 647.8 820.6 655.8 824.1 659.3 C826.6 661.8 829.6 660.3 830.1 657.3 C830.6 660.3 833.6 661.8 836.1 659.3 C839.6 655.8 837.1 647.8 830.1 642.8Z" fill="none" stroke="#f7ee00" stroke-width="2.3" stroke-linejoin="round"/>
<path d="M825.2 640.7 C816.7 639.3 809.2 643.2 809.2 648.2 C809.2 651.7 812.4 652.8 814.9 651.0 C813.1 653.5 814.2 656.7 817.7 656.7 C822.7 656.7 826.6 649.2 825.2 640.7Z" fill="#98c9f1" stroke="#bab308" stroke-width="3.2" stroke-linejoin="round"/>
<path d="M825.2 640.7 C816.7 639.3 809.2 643.2 809.2 648.2 C809.2 651.7 812.4 652.8 814.9 651.0 C813.1 653.5 814.2 656.7 817.7 656.7 C822.7 656.7 826.6 649.2 825.2 640.7Z" fill="none" stroke="#f7ee00" stroke-width="2.3" stroke-linejoin="round"/>
<path d="M823.1 635.8 C818.1 628.8 810.1 626.3 806.6 629.8 C804.1 632.3 805.6 635.3 808.6 635.8 C805.6 636.3 804.1 639.3 806.6 641.8 C810.1 645.3 818.1 642.8 823.1 635.8Z" fill="#98c9f1" stroke="#bab308" stroke-width="3.2" stroke-linejoin="round"/>
<path d="M823.1 635.8 C818.1 628.8 810.1 626.3 806.6 629.8 C804.1 632.3 805.6 635.3 808.6 635.8 C805.6 636.3 804.1 639.3 806.6 641.8 C810.1 645.3 818.1 642.8 823.1 635.8Z" fill="none" stroke="#f7ee00" stroke-width="2.3" stroke-linejoin="round"/>
<path d="M825.2 630.9 C826.6 622.4 822.7 614.9 817.7 614.9 C814.2 614.9 813.1 618.1 814.9 620.6 C812.4 618.8 809.2 619.9 809.2 623.4 C809.2 628.4 816.7 632.3 825.2 630.9Z" fill="#98c9f1" stroke="#bab308" stroke-width="3.2" stroke-linejoin="round"/>
<path d="M825.2 630.9 C826.6 622.4 822.7 614.9 817.7 614.9 C814.2 614.9 813.1 618.1 814.9 620.6 C812.4 618.8 809.2 619.9 809.2 623.4 C809.2 628.4 816.7 632.3 825.2 630.9Z" fill="none" stroke="#f7ee00" stroke-width="2.3" stroke-linejoin="round"/>
<path d="M830.1 628.8 C837.1 623.8 839.6 615.8 836.1 612.3 C833.6 609.8 830.6 611.3 830.1 614.3 C829.6 611.3 826.6 609.8 824.1 612.3 C820.6 615.8 823.1 623.8 830.1 628.8Z" fill="none" stroke="#f7ee00" stroke-width="2.3" stroke-linejoin="round"/>
<path d="M835.0 630.9 C843.5 632.3 851.0 628.4 851.0 623.4 C851.0 619.9 847.8 618.8 845.3 620.6 C847.1 618.1 846.0 614.9 842.5 614.9 C837.5 614.9 833.6 622.4 835.0 630.9Z" fill="none" stroke="#f7ee00" stroke-width="2.3" stroke-linejoin="round"/>
<path d="M837.1 635.8 C842.1 642.8 850.1 645.3 853.6 641.8 C856.1 639.3 854.6 636.3 851.6 635.8 C854.6 635.3 856.1 632.3 853.6 629.8 C850.1 626.3 842.1 628.8 837.1 635.8Z" fill="none" stroke="#f7ee00" stroke-width="2.3" stroke-linejoin="round"/>
<path d="M835.0 640.7 C833.6 649.2 837.5 656.7 842.5 656.7 C846.0 656.7 847.1 653.5 845.3 651.0 C847.8 652.8 851.0 651.7 851.0 648.2 C851.0 643.2 843.5 639.3 835.0 640.7Z" fill="none" stroke="#f7ee00" stroke-width="2.3" stroke-linejoin="round"/>
<path d="M830.1 642.8 C823.1 647.8 820.6 655.8 824.1 659.3 C826.6 661.8 829.6 660.3 830.1 657.3 C830.6 660.3 833.6 661.8 836.1 659.3 C839.6 655.8 837.1 647.8 830.1 642.8Z" fill="none" stroke="#f7ee00" stroke-width="2.3" stroke-linejoin="round"/>
<path d="M825.2 640.7 C816.7 639.3 809.2 643.2 809.2 648.2 C809.2 651.7 812.4 652.8 814.9 651.0 C813.1 653.5 814.2 656.7 817.7 656.7 C822.7 656.7 826.6 649.2 825.2 640.7Z" fill="none" stroke="#f7ee00" stroke-width="2.3" stroke-linejoin="round"/>
<path d="M823.1 635.8 C818.1 628.8 810.1 626.3 806.6 629.8 C804.1 632.3 805.6 635.3 808.6 635.8 C805.6 636.3 804.1 639.3 806.6 641.8 C810.1 645.3 818.1 642.8 823.1 635.8Z" fill="none" stroke="#f7ee00" stroke-width="2.3" stroke-linejoin="round"/>
<path d="M825.2 630.9 C826.6 622.4 822.7 614.9 817.7 614.9 C814.2 614.9 813.1 618.1 814.9 620.6 C812.4 618.8 809.2 619.9 809.2 623.4 C809.2 628.4 816.7 632.3 825.2 630.9Z" fill="none" stroke="#f7ee00" stroke-width="2.3" stroke-linejoin="round"/>
<circle cx="830.1" cy="635.8" r="6.5" fill="#98c9f1" stroke="#b86a10" stroke-width="3.2"/>
<circle cx="830.1" cy="635.8" r="6.5" fill="none" stroke="#e07e10" stroke-width="2.2"/>
<path d="M744.0 733.9 C733.5 732.4 737.8 728.8 736.8 725.6 C735.8 722.4 737.6 719.0 738.0 714.9 C738.4 710.8 737.4 704.8 739.2 700.7 C741.0 696.7 748.7 690.6 748.7 690.6 C748.7 690.6 746.1 684.8 746.3 680.5 C746.5 676.2 747.5 669.2 749.9 665.1 C752.3 661.0 756.4 657.4 760.5 655.7 C764.6 654.0 770.4 654.1 774.8 655.1 C779.1 656.1 783.5 658.6 786.6 661.6 C789.8 664.6 793.7 673.4 793.7 673.4 C793.7 673.4 798.8 669.6 802.0 668.7 C805.2 667.8 809.3 667.3 812.7 668.1 C816.1 668.9 820.0 671.3 822.2 673.4 C824.4 675.5 825.7 680.5 825.7 680.5 C825.7 680.5 834.1 680.9 837.6 682.9 C841.1 684.9 845.2 688.8 847.0 692.4 C848.8 696.0 848.6 700.7 848.2 704.2 C847.8 707.8 844.7 713.7 844.7 713.7 C844.7 713.7 851.8 718.2 853.0 720.8 C854.2 723.4 853.4 727.0 851.8 729.1 C850.2 731.2 852.1 732.4 843.5 733.3 C834.9 734.2 816.6 734.4 800.0 734.5 C783.4 734.6 754.5 735.4 744.0 733.9Z" fill="#7f9cba" stroke="#7f9cba" stroke-width="14.2" stroke-linejoin="round" stroke-linecap="round"/>
<path d="M744.0 733.9 C733.5 732.4 737.8 728.8 736.8 725.6 C735.8 722.4 737.6 719.0 738.0 714.9 C738.4 710.8 737.4 704.8 739.2 700.7 C741.0 696.7 748.7 690.6 748.7 690.6 C748.7 690.6 746.1 684.8 746.3 680.5 C746.5 676.2 747.5 669.2 749.9 665.1 C752.3 661.0 756.4 657.4 760.5 655.7 C764.6 654.0 770.4 654.1 774.8 655.1 C779.1 656.1 783.5 658.6 786.6 661.6 C789.8 664.6 793.7 673.4 793.7 673.4 C793.7 673.4 798.8 669.6 802.0 668.7 C805.2 667.8 809.3 667.3 812.7 668.1 C816.1 668.9 820.0 671.3 822.2 673.4 C824.4 675.5 825.7 680.5 825.7 680.5 C825.7 680.5 834.1 680.9 837.6 682.9 C841.1 684.9 845.2 688.8 847.0 692.4 C848.8 696.0 848.6 700.7 848.2 704.2 C847.8 707.8 844.7 713.7 844.7 713.7 C844.7 713.7 851.8 718.2 853.0 720.8 C854.2 723.4 853.4 727.0 851.8 729.1 C850.2 731.2 852.1 732.4 843.5 733.3 C834.9 734.2 816.6 734.4 800.0 734.5 C783.4 734.6 754.5 735.4 744.0 733.9Z" fill="#98c9f1" stroke="#98c9f1" stroke-width="12.0" stroke-linejoin="round" stroke-linecap="round"/>
<path d="M744.0 733.9 C733.5 732.4 737.8 728.8 736.8 725.6 C735.8 722.4 737.6 719.0 738.0 714.9 C738.4 710.8 737.4 704.8 739.2 700.7 C741.0 696.7 748.7 690.6 748.7 690.6 C748.7 690.6 746.1 684.8 746.3 680.5 C746.5 676.2 747.5 669.2 749.9 665.1 C752.3 661.0 756.4 657.4 760.5 655.7 C764.6 654.0 770.4 654.1 774.8 655.1 C779.1 656.1 783.5 658.6 786.6 661.6 C789.8 664.6 793.7 673.4 793.7 673.4 C793.7 673.4 798.8 669.6 802.0 668.7 C805.2 667.8 809.3 667.3 812.7 668.1 C816.1 668.9 820.0 671.3 822.2 673.4 C824.4 675.5 825.7 680.5 825.7 680.5 C825.7 680.5 834.1 680.9 837.6 682.9 C841.1 684.9 845.2 688.8 847.0 692.4 C848.8 696.0 848.6 700.7 848.2 704.2 C847.8 707.8 844.7 713.7 844.7 713.7 C844.7 713.7 851.8 718.2 853.0 720.8 C854.2 723.4 853.4 727.0 851.8 729.1 C850.2 731.2 852.1 732.4 843.5 733.3 C834.9 734.2 816.6 734.4 800.0 734.5 C783.4 734.6 754.5 735.4 744.0 733.9Z" fill="#98c9f1" stroke="#166018" stroke-width="5.2" stroke-linejoin="round" stroke-linecap="round"/>
<path d="M744.0 733.9 C733.5 732.4 737.8 728.8 736.8 725.6 C735.8 722.4 737.6 719.0 738.0 714.9 C738.4 710.8 737.4 704.8 739.2 700.7 C741.0 696.7 748.7 690.6 748.7 690.6 C748.7 690.6 746.1 684.8 746.3 680.5 C746.5 676.2 747.5 669.2 749.9 665.1 C752.3 661.0 756.4 657.4 760.5 655.7 C764.6 654.0 770.4 654.1 774.8 655.1 C779.1 656.1 783.5 658.6 786.6 661.6 C789.8 664.6 793.7 673.4 793.7 673.4 C793.7 673.4 798.8 669.6 802.0 668.7 C805.2 667.8 809.3 667.3 812.7 668.1 C816.1 668.9 820.0 671.3 822.2 673.4 C824.4 675.5 825.7 680.5 825.7 680.5 C825.7 680.5 834.1 680.9 837.6 682.9 C841.1 684.9 845.2 688.8 847.0 692.4 C848.8 696.0 848.6 700.7 848.2 704.2 C847.8 707.8 844.7 713.7 844.7 713.7 C844.7 713.7 851.8 718.2 853.0 720.8 C854.2 723.4 853.4 727.0 851.8 729.1 C850.2 731.2 852.1 732.4 843.5 733.3 C834.9 734.2 816.6 734.4 800.0 734.5 C783.4 734.6 754.5 735.4 744.0 733.9Z" fill="none" stroke="#137a17" stroke-width="4.0" stroke-linejoin="round" stroke-linecap="round"/>
<path d="M755.8 730.3 C749.3 729.1 751.5 725.6 751.1 723.2 C750.7 720.8 752.2 717.5 753.4 716.1 C754.6 714.7 758.2 714.9 758.2 714.9 C758.2 714.9 754.4 709.2 754.6 706.6 C754.8 704.0 757.5 701.2 759.4 699.5 C761.3 697.8 763.8 696.6 766.0 696.5 C768.2 696.4 772.4 698.9 772.4 698.9 C772.4 698.9 773.6 692.9 776.0 691.2 C778.4 689.5 783.5 688.6 786.6 688.8 C789.8 689.0 794.9 692.4 794.9 692.4 C794.9 692.4 797.4 686.1 800.8 684.1 C804.1 682.1 810.9 680.1 815.0 680.5 C819.1 680.9 823.5 683.9 825.7 686.5 C827.9 689.1 827.9 693.0 828.1 696.0 C828.3 699.0 826.9 704.2 826.9 704.2 C826.9 704.2 832.4 705.6 834.0 707.8 C835.6 710.0 836.6 715.1 836.4 717.3 C836.2 719.5 832.8 720.8 832.8 720.8 C832.8 720.8 836.6 724.0 836.4 725.6 C836.2 727.2 839.3 729.5 831.6 730.3 C823.9 731.1 802.6 730.5 790.0 730.5 C777.4 730.5 762.3 731.5 755.8 730.3Z" fill="#98c9f1" stroke="#20a226" stroke-width="4.8" stroke-linejoin="round" stroke-linecap="round"/>
<path d="M755.8 730.3 C749.3 729.1 751.5 725.6 751.1 723.2 C750.7 720.8 752.2 717.5 753.4 716.1 C754.6 714.7 758.2 714.9 758.2 714.9 C758.2 714.9 754.4 709.2 754.6 706.6 C754.8 704.0 757.5 701.2 759.4 699.5 C761.3 697.8 763.8 696.6 766.0 696.5 C768.2 696.4 772.4 698.9 772.4 698.9 C772.4 698.9 773.6 692.9 776.0 691.2 C778.4 689.5 783.5 688.6 786.6 688.8 C789.8 689.0 794.9 692.4 794.9 692.4 C794.9 692.4 797.4 686.1 800.8 684.1 C804.1 682.1 810.9 680.1 815.0 680.5 C819.1 680.9 823.5 683.9 825.7 686.5 C827.9 689.1 827.9 693.0 828.1 696.0 C828.3 699.0 826.9 704.2 826.9 704.2 C826.9 704.2 832.4 705.6 834.0 707.8 C835.6 710.0 836.6 715.1 836.4 717.3 C836.2 719.5 832.8 720.8 832.8 720.8 C832.8 720.8 836.6 724.0 836.4 725.6 C836.2 727.2 839.3 729.5 831.6 730.3 C823.9 731.1 802.6 730.5 790.0 730.5 C777.4 730.5 762.3 731.5 755.8 730.3Z" fill="none" stroke="#22d62a" stroke-width="3.6" stroke-linejoin="round" stroke-linecap="round"/></svg>
<div class="a" style="left:1189px;top:778px;width:46px;height:46px;border-radius:50%;background:#dce6f3;box-shadow:0 0 8px rgba(0,0,0,0.06)"></div>
<svg class="a" style="left:1201px;top:790px" width="23" height="23" viewBox="0 0 23 23"><path d="M11 2.2 a8.8 8.8 0 1 0 4.6 16.3 l3.4 1.6 l-1.1-3.4 a8.8 8.8 0 0 0 -6.9-14.5z" stroke="#1e3d66" stroke-width="1.7" fill="none" stroke-linejoin="round"/><path d="M8.4 8.6 q0.2-2.6 2.7-2.6 q2.6 0 2.6 2.3 q0 1.5-1.6 2.1 q-1 0.5-1 1.6 v0.5" stroke="#1e3d66" stroke-width="1.6" fill="none"/><circle cx="11.1" cy="15" r="1" fill="#1e3d66"/></svg>
<div class="a" style="left:90px;top:797px;width:100px;height:33px;border:1px solid #f0f0f0;border-radius:14px;background:#fff"></div>
<div class="t" style="left:116px;top:806px;font-size:10px;color:#aaa">&#8211;&nbsp; 25% &nbsp;+</div>
<div class="a" style="left:0;top:796px;width:262px;height:48px;background:rgba(255,255,255,0.55)"></div>
<div class="t" style="left:11px;top:803.5px;font-family:'Liberation Serif',serif;font-weight:bold;font-size:33px;color:#186a82;letter-spacing:0px">Craft with Sarah</div>
<svg class="a" style="left:884px;top:384px" width="18" height="26" viewBox="0 0 18 26"><path d="M1.5 1.5 V19.5 L6 15.5 L9.3 22.5 L12 21.3 L8.8 14.5 H14.5 Z" fill="#000" stroke="#fff" stroke-width="1"/></svg></body></html>
